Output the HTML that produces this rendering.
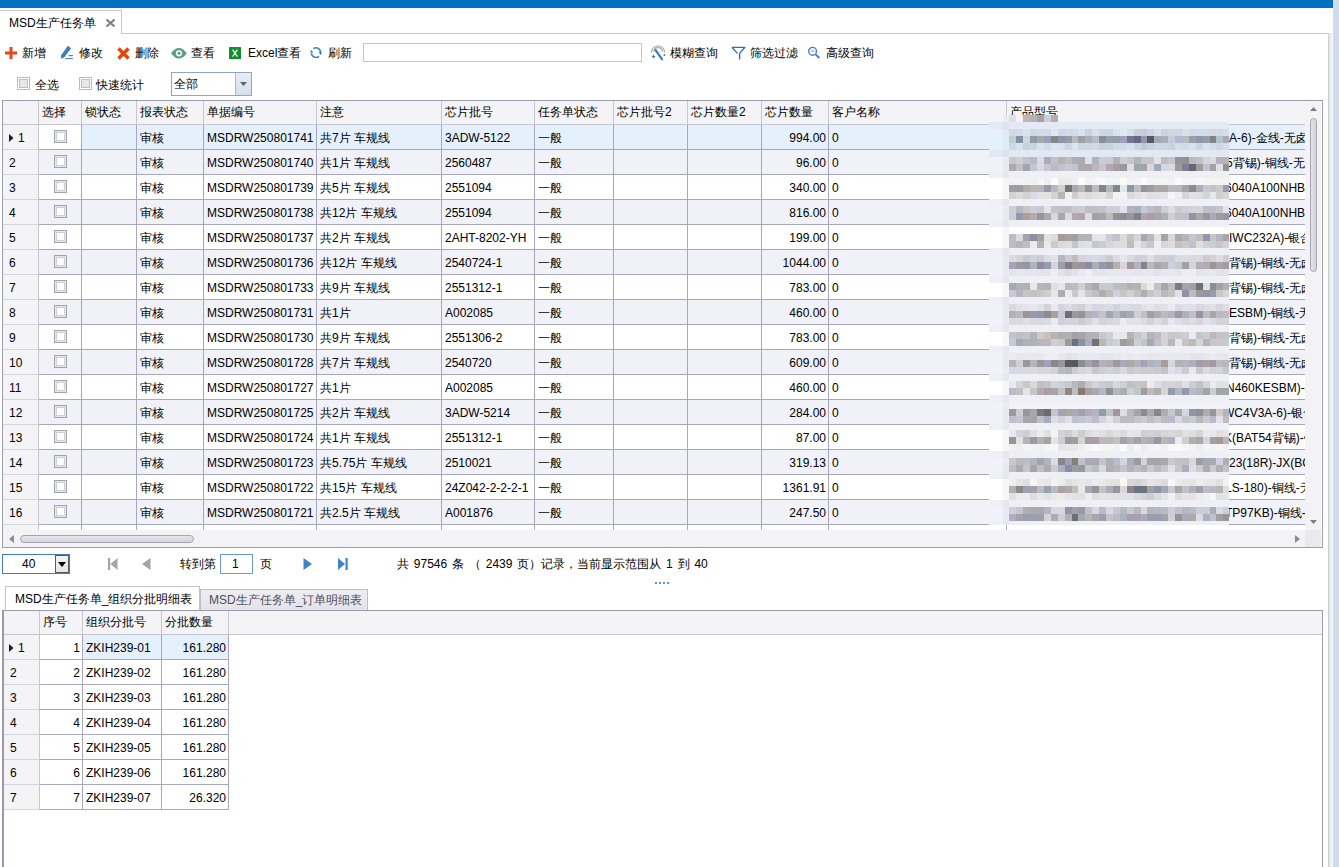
<!DOCTYPE html>
<html><head><meta charset="utf-8"><style>
html,body{margin:0;padding:0;width:1339px;height:867px;overflow:hidden;background:#fff;position:relative}
body{font-family:"Liberation Sans",sans-serif;font-size:12px;color:#000}
div,span,svg{position:absolute}
span{white-space:pre;line-height:14px}
</style></head><body>
<div style="left:0px;top:0px;width:1333px;height:8px;background:#0070c0;"></div>
<div style="left:1333px;top:0px;width:6px;height:867px;background:#cedcec;"></div>
<div style="left:1328px;top:33px;width:5px;height:834px;background:linear-gradient(to right,#c9c9d3,#e9e9ee 40%,#fbfbfc);"></div>
<div style="left:0px;top:10px;width:122px;height:1px;background:#c8c8d4;"></div>
<div style="left:121px;top:10px;width:1px;height:24px;background:#c8c8d4;"></div>
<div style="left:121px;top:33px;width:1207px;height:1px;background:#c8c8d4;"></div>
<span style="left:9px;top:16px;">MSD生产任务单</span>
<svg style="position:absolute;left:105px;top:18px" width="11" height="10" viewBox="0 0 11 10"><path d="M1.5 1.5L9.5 8.5M9.5 1.5L1.5 8.5" stroke="#7b7b88" stroke-width="2.1"/></svg>
<svg style="position:absolute;left:5px;top:47px" width="12" height="12"><path d="M6 0V12M0 6H12" stroke="#e2481b" stroke-width="3"/></svg>
<span style="left:22px;top:46px;">新增</span>
<svg style="position:absolute;left:56px;top:42px" width="24" height="22" viewBox="0 0 24 22"><path d="M4.9 16.8L5.2 12.9 11.9 3.8 15.1 6.2 8.4 15.3Z" fill="#3f7cc2"/><path d="M12.6 13.6H16.9M9.3 16.5H16.9" stroke="#4f86c6" stroke-width="1.1"/></svg>
<span style="left:79px;top:46px;">修改</span>
<svg style="position:absolute;left:117px;top:46.6px" width="13" height="13"><path d="M1.5 1.5L11.5 11.5M11.5 1.5L1.5 11.5" stroke="#e4440f" stroke-width="3.4"/></svg>
<span style="left:135px;top:46px;">删除</span>
<svg style="position:absolute;left:171px;top:48px" width="16" height="11" viewBox="0 0 16 11"><path d="M0 5.3Q7.9 -5.2 15.8 5.3Q7.9 15.8 0 5.3Z" fill="#5a9e88"/><circle cx="8" cy="5.3" r="3.1" fill="#fff"/><circle cx="8" cy="5.3" r="1.5" fill="#5a9e88"/></svg>
<span style="left:191px;top:46px;">查看</span>
<svg style="position:absolute;left:229px;top:47px" width="12" height="12" viewBox="0 0 12 12"><rect x="0" y="0" width="12" height="12" rx="0.6" fill="#12902f"/><path d="M3.6 2.6L8.4 9.6M8.4 2.6L3.6 9.6" stroke="#fff" stroke-width="1.15"/></svg>
<span style="left:248px;top:46px;">Excel查看</span>
<svg style="position:absolute;left:304px;top:42px" width="24" height="22" viewBox="0 0 24 22"><path d="M9.3 6.6A4.6 4.6 0 0 1 16.5 10.8M15 14.3A4.6 4.6 0 0 1 7.4 11.2" fill="none" stroke="#3f7cc2" stroke-width="1.6"/><path d="M14.6 10.3H18.3L16.5 12.9Z" fill="#3f7cc2"/><path d="M5.7 10.6H9.3L7.5 8.0Z" fill="#3f7cc2"/></svg>
<span style="left:328px;top:46px;">刷新</span>
<div style="left:363px;top:43px;width:279px;height:19px;background:#fff;border:1px solid #c4c4cc;box-sizing:border-box"></div>
<svg style="position:absolute;left:646px;top:42px" width="24" height="22" viewBox="0 0 24 22"><path d="M5.4 10.6A6.6 6.6 0 0 1 18.6 10.6" fill="none" stroke="#a9a9a9" stroke-width="1.2"/><path d="M7.8 9.8A4.2 4.2 0 0 1 16.3 9.8" fill="none" stroke="#a9a9a9" stroke-width="1.2"/><path d="M9.6 8.2L15.9 17.2" stroke="#3f7cc2" stroke-width="2.3" stroke-linecap="round"/><path d="M7.5 12.3L8.3 13.9 9.8 14.5 8.3 15.2 7.5 16.8 6.7 15.2 5.2 14.5 6.7 13.9Z" fill="#3f7cc2"/><circle cx="18.4" cy="13" r="1" fill="#3f7cc2"/></svg>
<span style="left:670px;top:46px;">模糊查询</span>
<svg style="position:absolute;left:731px;top:46px" width="15" height="14" viewBox="0 0 15 14"><path d="M0.9 1.3H13.9L8.6 7.4V13.6M0.9 1.3L6.4 7.4" fill="none" stroke="#2f6fbf" stroke-width="1.35" stroke-linejoin="round"/></svg>
<span style="left:750px;top:46px;">筛选过滤</span>
<svg style="position:absolute;left:807px;top:46px" width="14" height="14" viewBox="0 0 14 14"><circle cx="5.6" cy="5.3" r="3.9" fill="none" stroke="#4a7fc0" stroke-width="1.4"/><path d="M8.6 8.4L12.3 12" stroke="#4a7fc0" stroke-width="2"/><path d="M3.8 5H7.4" stroke="#7fa6d6" stroke-width="1.2"/></svg>
<span style="left:826px;top:46px;">高级查询</span>
<div style="left:17px;top:77px;width:13px;height:13px;background:#fff;border:1px solid #a9bedb;box-sizing:border-box"></div>
<div style="left:19px;top:79px;width:9px;height:9px;background:#e7e8eb;border:1px solid #bcc0c8;box-sizing:border-box"></div>
<span style="left:35px;top:78px;">全选</span>
<div style="left:79px;top:77px;width:13px;height:13px;background:#fff;border:1px solid #a9bedb;box-sizing:border-box"></div>
<div style="left:81px;top:79px;width:9px;height:9px;background:#e7e8eb;border:1px solid #bcc0c8;box-sizing:border-box"></div>
<span style="left:96px;top:78px;">快速统计</span>
<div style="left:171px;top:72px;width:81px;height:24px;background:#fff;border:1px solid #8fa6c4;box-sizing:border-box"></div>
<div style="left:235px;top:73px;width:16px;height:22px;background:linear-gradient(#e9eef5,#d5dfec);border-left:1px solid #a7b8d0;box-sizing:border-box"></div>
<svg style="position:absolute;left:240px;top:82px" width="7" height="4"><path d="M0 0H7L3.5 4Z" fill="#5c6270"/></svg>
<span style="left:174px;top:77px;">全部</span>
<div style="left:2px;top:100px;width:1321px;height:448px;background:#fff;border:1px solid #9c9cb0;box-sizing:border-box"></div>
<div style="left:3px;top:101px;width:1302px;height:23px;background:#f4f4f7;"></div>
<div style="left:3px;top:124px;width:1302px;height:1px;background:#c6c6d2;"></div>
<div style="left:3px;top:125px;width:1302px;height:405px;overflow:hidden">
<div style="left:36px;top:0px;width:1266px;height:24px;background:#e4f1fc;"></div>
<div style="left:36px;top:0px;width:42px;height:24px;background:#ffffff;"></div>
<div style="left:0px;top:0px;width:35px;height:24px;background:#f4f4f7;"></div>
<div style="left:0px;top:24px;width:35px;height:1px;background:#d4d4de;"></div>
<div style="left:36px;top:24px;width:1266px;height:1px;background:#a7a7c2;"></div>
<div style="left:35px;top:0px;width:1px;height:25px;background:#c6c6d2;"></div>
<div style="left:78px;top:0px;width:1px;height:25px;background:#a7a7c2;"></div>
<div style="left:133px;top:0px;width:1px;height:25px;background:#a7a7c2;"></div>
<div style="left:200px;top:0px;width:1px;height:25px;background:#a7a7c2;"></div>
<div style="left:313px;top:0px;width:1px;height:25px;background:#a7a7c2;"></div>
<div style="left:438px;top:0px;width:1px;height:25px;background:#a7a7c2;"></div>
<div style="left:531px;top:0px;width:1px;height:25px;background:#a7a7c2;"></div>
<div style="left:610px;top:0px;width:1px;height:25px;background:#a7a7c2;"></div>
<div style="left:684px;top:0px;width:1px;height:25px;background:#a7a7c2;"></div>
<div style="left:758px;top:0px;width:1px;height:25px;background:#a7a7c2;"></div>
<div style="left:825px;top:0px;width:1px;height:25px;background:#a7a7c2;"></div>
<div style="left:1003px;top:0px;width:1px;height:25px;background:#a7a7c2;"></div>
<div style="left:51px;top:5px;width:13px;height:13px;background:#fff;border:1px solid #a3a3ad;box-sizing:border-box;box-shadow:inset 0 0 0 1px #e6e7ed,inset 0 0 0 2px #ced0d9"></div>
<svg style="position:absolute;left:6px;top:9px" width="5" height="8"><path d="M0 0L4.5 4 0 8Z" fill="#1a1a2a"/></svg>
<span style="left:15px;top:6px;">1</span>
<span style="left:137px;top:6px;">审核</span>
<span style="left:204px;top:6px;">MSDRW250801741</span>
<span style="left:317px;top:6px;">共7片 车规线</span>
<span style="left:442px;top:6px;">3ADW-5122</span>
<span style="left:535px;top:6px;">一般</span>
<span style="left:623px;width:200px;text-align:right;top:6px;">994.00</span>
<span style="left:829px;top:6px;">0</span>
<span style="left:1226px;top:6px;">A-6)-金线-无卤</span>
<div style="left:36px;top:25px;width:1266px;height:24px;background:#f1f1f8;"></div>
<div style="left:0px;top:25px;width:35px;height:24px;background:#f4f4f7;"></div>
<div style="left:0px;top:49px;width:35px;height:1px;background:#d4d4de;"></div>
<div style="left:36px;top:49px;width:1266px;height:1px;background:#a7a7c2;"></div>
<div style="left:35px;top:25px;width:1px;height:25px;background:#c6c6d2;"></div>
<div style="left:78px;top:25px;width:1px;height:25px;background:#a7a7c2;"></div>
<div style="left:133px;top:25px;width:1px;height:25px;background:#a7a7c2;"></div>
<div style="left:200px;top:25px;width:1px;height:25px;background:#a7a7c2;"></div>
<div style="left:313px;top:25px;width:1px;height:25px;background:#a7a7c2;"></div>
<div style="left:438px;top:25px;width:1px;height:25px;background:#a7a7c2;"></div>
<div style="left:531px;top:25px;width:1px;height:25px;background:#a7a7c2;"></div>
<div style="left:610px;top:25px;width:1px;height:25px;background:#a7a7c2;"></div>
<div style="left:684px;top:25px;width:1px;height:25px;background:#a7a7c2;"></div>
<div style="left:758px;top:25px;width:1px;height:25px;background:#a7a7c2;"></div>
<div style="left:825px;top:25px;width:1px;height:25px;background:#a7a7c2;"></div>
<div style="left:1003px;top:25px;width:1px;height:25px;background:#a7a7c2;"></div>
<div style="left:51px;top:30px;width:13px;height:13px;background:#fff;border:1px solid #a3a3ad;box-sizing:border-box;box-shadow:inset 0 0 0 1px #e6e7ed,inset 0 0 0 2px #ced0d9"></div>
<span style="left:6px;top:31px;">2</span>
<span style="left:137px;top:31px;">审核</span>
<span style="left:204px;top:31px;">MSDRW250801740</span>
<span style="left:317px;top:31px;">共1片 车规线</span>
<span style="left:442px;top:31px;">2560487</span>
<span style="left:535px;top:31px;">一般</span>
<span style="left:623px;width:200px;text-align:right;top:31px;">96.00</span>
<span style="left:829px;top:31px;">0</span>
<span style="left:1223px;top:31px;">5背锡)-铜线-无卤</span>
<div style="left:36px;top:50px;width:1266px;height:24px;background:#ffffff;"></div>
<div style="left:0px;top:50px;width:35px;height:24px;background:#f4f4f7;"></div>
<div style="left:0px;top:74px;width:35px;height:1px;background:#d4d4de;"></div>
<div style="left:36px;top:74px;width:1266px;height:1px;background:#a7a7c2;"></div>
<div style="left:35px;top:50px;width:1px;height:25px;background:#c6c6d2;"></div>
<div style="left:78px;top:50px;width:1px;height:25px;background:#a7a7c2;"></div>
<div style="left:133px;top:50px;width:1px;height:25px;background:#a7a7c2;"></div>
<div style="left:200px;top:50px;width:1px;height:25px;background:#a7a7c2;"></div>
<div style="left:313px;top:50px;width:1px;height:25px;background:#a7a7c2;"></div>
<div style="left:438px;top:50px;width:1px;height:25px;background:#a7a7c2;"></div>
<div style="left:531px;top:50px;width:1px;height:25px;background:#a7a7c2;"></div>
<div style="left:610px;top:50px;width:1px;height:25px;background:#a7a7c2;"></div>
<div style="left:684px;top:50px;width:1px;height:25px;background:#a7a7c2;"></div>
<div style="left:758px;top:50px;width:1px;height:25px;background:#a7a7c2;"></div>
<div style="left:825px;top:50px;width:1px;height:25px;background:#a7a7c2;"></div>
<div style="left:1003px;top:50px;width:1px;height:25px;background:#a7a7c2;"></div>
<div style="left:51px;top:55px;width:13px;height:13px;background:#fff;border:1px solid #a3a3ad;box-sizing:border-box;box-shadow:inset 0 0 0 1px #e6e7ed,inset 0 0 0 2px #ced0d9"></div>
<span style="left:6px;top:56px;">3</span>
<span style="left:137px;top:56px;">审核</span>
<span style="left:204px;top:56px;">MSDRW250801739</span>
<span style="left:317px;top:56px;">共5片 车规线</span>
<span style="left:442px;top:56px;">2551094</span>
<span style="left:535px;top:56px;">一般</span>
<span style="left:623px;width:200px;text-align:right;top:56px;">340.00</span>
<span style="left:829px;top:56px;">0</span>
<span style="left:1222px;top:56px;">6040A100NHB</span>
<div style="left:36px;top:75px;width:1266px;height:24px;background:#f1f1f8;"></div>
<div style="left:0px;top:75px;width:35px;height:24px;background:#f4f4f7;"></div>
<div style="left:0px;top:99px;width:35px;height:1px;background:#d4d4de;"></div>
<div style="left:36px;top:99px;width:1266px;height:1px;background:#a7a7c2;"></div>
<div style="left:35px;top:75px;width:1px;height:25px;background:#c6c6d2;"></div>
<div style="left:78px;top:75px;width:1px;height:25px;background:#a7a7c2;"></div>
<div style="left:133px;top:75px;width:1px;height:25px;background:#a7a7c2;"></div>
<div style="left:200px;top:75px;width:1px;height:25px;background:#a7a7c2;"></div>
<div style="left:313px;top:75px;width:1px;height:25px;background:#a7a7c2;"></div>
<div style="left:438px;top:75px;width:1px;height:25px;background:#a7a7c2;"></div>
<div style="left:531px;top:75px;width:1px;height:25px;background:#a7a7c2;"></div>
<div style="left:610px;top:75px;width:1px;height:25px;background:#a7a7c2;"></div>
<div style="left:684px;top:75px;width:1px;height:25px;background:#a7a7c2;"></div>
<div style="left:758px;top:75px;width:1px;height:25px;background:#a7a7c2;"></div>
<div style="left:825px;top:75px;width:1px;height:25px;background:#a7a7c2;"></div>
<div style="left:1003px;top:75px;width:1px;height:25px;background:#a7a7c2;"></div>
<div style="left:51px;top:80px;width:13px;height:13px;background:#fff;border:1px solid #a3a3ad;box-sizing:border-box;box-shadow:inset 0 0 0 1px #e6e7ed,inset 0 0 0 2px #ced0d9"></div>
<span style="left:6px;top:81px;">4</span>
<span style="left:137px;top:81px;">审核</span>
<span style="left:204px;top:81px;">MSDRW250801738</span>
<span style="left:317px;top:81px;">共12片 车规线</span>
<span style="left:442px;top:81px;">2551094</span>
<span style="left:535px;top:81px;">一般</span>
<span style="left:623px;width:200px;text-align:right;top:81px;">816.00</span>
<span style="left:829px;top:81px;">0</span>
<span style="left:1222px;top:81px;">6040A100NHB</span>
<div style="left:36px;top:100px;width:1266px;height:24px;background:#ffffff;"></div>
<div style="left:0px;top:100px;width:35px;height:24px;background:#f4f4f7;"></div>
<div style="left:0px;top:124px;width:35px;height:1px;background:#d4d4de;"></div>
<div style="left:36px;top:124px;width:1266px;height:1px;background:#a7a7c2;"></div>
<div style="left:35px;top:100px;width:1px;height:25px;background:#c6c6d2;"></div>
<div style="left:78px;top:100px;width:1px;height:25px;background:#a7a7c2;"></div>
<div style="left:133px;top:100px;width:1px;height:25px;background:#a7a7c2;"></div>
<div style="left:200px;top:100px;width:1px;height:25px;background:#a7a7c2;"></div>
<div style="left:313px;top:100px;width:1px;height:25px;background:#a7a7c2;"></div>
<div style="left:438px;top:100px;width:1px;height:25px;background:#a7a7c2;"></div>
<div style="left:531px;top:100px;width:1px;height:25px;background:#a7a7c2;"></div>
<div style="left:610px;top:100px;width:1px;height:25px;background:#a7a7c2;"></div>
<div style="left:684px;top:100px;width:1px;height:25px;background:#a7a7c2;"></div>
<div style="left:758px;top:100px;width:1px;height:25px;background:#a7a7c2;"></div>
<div style="left:825px;top:100px;width:1px;height:25px;background:#a7a7c2;"></div>
<div style="left:1003px;top:100px;width:1px;height:25px;background:#a7a7c2;"></div>
<div style="left:51px;top:105px;width:13px;height:13px;background:#fff;border:1px solid #a3a3ad;box-sizing:border-box;box-shadow:inset 0 0 0 1px #e6e7ed,inset 0 0 0 2px #ced0d9"></div>
<span style="left:6px;top:106px;">5</span>
<span style="left:137px;top:106px;">审核</span>
<span style="left:204px;top:106px;">MSDRW250801737</span>
<span style="left:317px;top:106px;">共2片 车规线</span>
<span style="left:442px;top:106px;">2AHT-8202-YH</span>
<span style="left:535px;top:106px;">一般</span>
<span style="left:623px;width:200px;text-align:right;top:106px;">199.00</span>
<span style="left:829px;top:106px;">0</span>
<span style="left:1226px;top:106px;">IWC232A)-银合</span>
<div style="left:36px;top:125px;width:1266px;height:24px;background:#f1f1f8;"></div>
<div style="left:0px;top:125px;width:35px;height:24px;background:#f4f4f7;"></div>
<div style="left:0px;top:149px;width:35px;height:1px;background:#d4d4de;"></div>
<div style="left:36px;top:149px;width:1266px;height:1px;background:#a7a7c2;"></div>
<div style="left:35px;top:125px;width:1px;height:25px;background:#c6c6d2;"></div>
<div style="left:78px;top:125px;width:1px;height:25px;background:#a7a7c2;"></div>
<div style="left:133px;top:125px;width:1px;height:25px;background:#a7a7c2;"></div>
<div style="left:200px;top:125px;width:1px;height:25px;background:#a7a7c2;"></div>
<div style="left:313px;top:125px;width:1px;height:25px;background:#a7a7c2;"></div>
<div style="left:438px;top:125px;width:1px;height:25px;background:#a7a7c2;"></div>
<div style="left:531px;top:125px;width:1px;height:25px;background:#a7a7c2;"></div>
<div style="left:610px;top:125px;width:1px;height:25px;background:#a7a7c2;"></div>
<div style="left:684px;top:125px;width:1px;height:25px;background:#a7a7c2;"></div>
<div style="left:758px;top:125px;width:1px;height:25px;background:#a7a7c2;"></div>
<div style="left:825px;top:125px;width:1px;height:25px;background:#a7a7c2;"></div>
<div style="left:1003px;top:125px;width:1px;height:25px;background:#a7a7c2;"></div>
<div style="left:51px;top:130px;width:13px;height:13px;background:#fff;border:1px solid #a3a3ad;box-sizing:border-box;box-shadow:inset 0 0 0 1px #e6e7ed,inset 0 0 0 2px #ced0d9"></div>
<span style="left:6px;top:131px;">6</span>
<span style="left:137px;top:131px;">审核</span>
<span style="left:204px;top:131px;">MSDRW250801736</span>
<span style="left:317px;top:131px;">共12片 车规线</span>
<span style="left:442px;top:131px;">2540724-1</span>
<span style="left:535px;top:131px;">一般</span>
<span style="left:623px;width:200px;text-align:right;top:131px;">1044.00</span>
<span style="left:829px;top:131px;">0</span>
<span style="left:1226px;top:131px;">背锡)-铜线-无卤</span>
<div style="left:36px;top:150px;width:1266px;height:24px;background:#ffffff;"></div>
<div style="left:0px;top:150px;width:35px;height:24px;background:#f4f4f7;"></div>
<div style="left:0px;top:174px;width:35px;height:1px;background:#d4d4de;"></div>
<div style="left:36px;top:174px;width:1266px;height:1px;background:#a7a7c2;"></div>
<div style="left:35px;top:150px;width:1px;height:25px;background:#c6c6d2;"></div>
<div style="left:78px;top:150px;width:1px;height:25px;background:#a7a7c2;"></div>
<div style="left:133px;top:150px;width:1px;height:25px;background:#a7a7c2;"></div>
<div style="left:200px;top:150px;width:1px;height:25px;background:#a7a7c2;"></div>
<div style="left:313px;top:150px;width:1px;height:25px;background:#a7a7c2;"></div>
<div style="left:438px;top:150px;width:1px;height:25px;background:#a7a7c2;"></div>
<div style="left:531px;top:150px;width:1px;height:25px;background:#a7a7c2;"></div>
<div style="left:610px;top:150px;width:1px;height:25px;background:#a7a7c2;"></div>
<div style="left:684px;top:150px;width:1px;height:25px;background:#a7a7c2;"></div>
<div style="left:758px;top:150px;width:1px;height:25px;background:#a7a7c2;"></div>
<div style="left:825px;top:150px;width:1px;height:25px;background:#a7a7c2;"></div>
<div style="left:1003px;top:150px;width:1px;height:25px;background:#a7a7c2;"></div>
<div style="left:51px;top:155px;width:13px;height:13px;background:#fff;border:1px solid #a3a3ad;box-sizing:border-box;box-shadow:inset 0 0 0 1px #e6e7ed,inset 0 0 0 2px #ced0d9"></div>
<span style="left:6px;top:156px;">7</span>
<span style="left:137px;top:156px;">审核</span>
<span style="left:204px;top:156px;">MSDRW250801733</span>
<span style="left:317px;top:156px;">共9片 车规线</span>
<span style="left:442px;top:156px;">2551312-1</span>
<span style="left:535px;top:156px;">一般</span>
<span style="left:623px;width:200px;text-align:right;top:156px;">783.00</span>
<span style="left:829px;top:156px;">0</span>
<span style="left:1226px;top:156px;">背锡)-铜线-无卤</span>
<div style="left:36px;top:175px;width:1266px;height:24px;background:#f1f1f8;"></div>
<div style="left:0px;top:175px;width:35px;height:24px;background:#f4f4f7;"></div>
<div style="left:0px;top:199px;width:35px;height:1px;background:#d4d4de;"></div>
<div style="left:36px;top:199px;width:1266px;height:1px;background:#a7a7c2;"></div>
<div style="left:35px;top:175px;width:1px;height:25px;background:#c6c6d2;"></div>
<div style="left:78px;top:175px;width:1px;height:25px;background:#a7a7c2;"></div>
<div style="left:133px;top:175px;width:1px;height:25px;background:#a7a7c2;"></div>
<div style="left:200px;top:175px;width:1px;height:25px;background:#a7a7c2;"></div>
<div style="left:313px;top:175px;width:1px;height:25px;background:#a7a7c2;"></div>
<div style="left:438px;top:175px;width:1px;height:25px;background:#a7a7c2;"></div>
<div style="left:531px;top:175px;width:1px;height:25px;background:#a7a7c2;"></div>
<div style="left:610px;top:175px;width:1px;height:25px;background:#a7a7c2;"></div>
<div style="left:684px;top:175px;width:1px;height:25px;background:#a7a7c2;"></div>
<div style="left:758px;top:175px;width:1px;height:25px;background:#a7a7c2;"></div>
<div style="left:825px;top:175px;width:1px;height:25px;background:#a7a7c2;"></div>
<div style="left:1003px;top:175px;width:1px;height:25px;background:#a7a7c2;"></div>
<div style="left:51px;top:180px;width:13px;height:13px;background:#fff;border:1px solid #a3a3ad;box-sizing:border-box;box-shadow:inset 0 0 0 1px #e6e7ed,inset 0 0 0 2px #ced0d9"></div>
<span style="left:6px;top:181px;">8</span>
<span style="left:137px;top:181px;">审核</span>
<span style="left:204px;top:181px;">MSDRW250801731</span>
<span style="left:317px;top:181px;">共1片</span>
<span style="left:442px;top:181px;">A002085</span>
<span style="left:535px;top:181px;">一般</span>
<span style="left:623px;width:200px;text-align:right;top:181px;">460.00</span>
<span style="left:829px;top:181px;">0</span>
<span style="left:1226px;top:181px;">ESBM)-铜线-无卤</span>
<div style="left:36px;top:200px;width:1266px;height:24px;background:#ffffff;"></div>
<div style="left:0px;top:200px;width:35px;height:24px;background:#f4f4f7;"></div>
<div style="left:0px;top:224px;width:35px;height:1px;background:#d4d4de;"></div>
<div style="left:36px;top:224px;width:1266px;height:1px;background:#a7a7c2;"></div>
<div style="left:35px;top:200px;width:1px;height:25px;background:#c6c6d2;"></div>
<div style="left:78px;top:200px;width:1px;height:25px;background:#a7a7c2;"></div>
<div style="left:133px;top:200px;width:1px;height:25px;background:#a7a7c2;"></div>
<div style="left:200px;top:200px;width:1px;height:25px;background:#a7a7c2;"></div>
<div style="left:313px;top:200px;width:1px;height:25px;background:#a7a7c2;"></div>
<div style="left:438px;top:200px;width:1px;height:25px;background:#a7a7c2;"></div>
<div style="left:531px;top:200px;width:1px;height:25px;background:#a7a7c2;"></div>
<div style="left:610px;top:200px;width:1px;height:25px;background:#a7a7c2;"></div>
<div style="left:684px;top:200px;width:1px;height:25px;background:#a7a7c2;"></div>
<div style="left:758px;top:200px;width:1px;height:25px;background:#a7a7c2;"></div>
<div style="left:825px;top:200px;width:1px;height:25px;background:#a7a7c2;"></div>
<div style="left:1003px;top:200px;width:1px;height:25px;background:#a7a7c2;"></div>
<div style="left:51px;top:205px;width:13px;height:13px;background:#fff;border:1px solid #a3a3ad;box-sizing:border-box;box-shadow:inset 0 0 0 1px #e6e7ed,inset 0 0 0 2px #ced0d9"></div>
<span style="left:6px;top:206px;">9</span>
<span style="left:137px;top:206px;">审核</span>
<span style="left:204px;top:206px;">MSDRW250801730</span>
<span style="left:317px;top:206px;">共9片 车规线</span>
<span style="left:442px;top:206px;">2551306-2</span>
<span style="left:535px;top:206px;">一般</span>
<span style="left:623px;width:200px;text-align:right;top:206px;">783.00</span>
<span style="left:829px;top:206px;">0</span>
<span style="left:1226px;top:206px;">背锡)-铜线-无卤</span>
<div style="left:36px;top:225px;width:1266px;height:24px;background:#f1f1f8;"></div>
<div style="left:0px;top:225px;width:35px;height:24px;background:#f4f4f7;"></div>
<div style="left:0px;top:249px;width:35px;height:1px;background:#d4d4de;"></div>
<div style="left:36px;top:249px;width:1266px;height:1px;background:#a7a7c2;"></div>
<div style="left:35px;top:225px;width:1px;height:25px;background:#c6c6d2;"></div>
<div style="left:78px;top:225px;width:1px;height:25px;background:#a7a7c2;"></div>
<div style="left:133px;top:225px;width:1px;height:25px;background:#a7a7c2;"></div>
<div style="left:200px;top:225px;width:1px;height:25px;background:#a7a7c2;"></div>
<div style="left:313px;top:225px;width:1px;height:25px;background:#a7a7c2;"></div>
<div style="left:438px;top:225px;width:1px;height:25px;background:#a7a7c2;"></div>
<div style="left:531px;top:225px;width:1px;height:25px;background:#a7a7c2;"></div>
<div style="left:610px;top:225px;width:1px;height:25px;background:#a7a7c2;"></div>
<div style="left:684px;top:225px;width:1px;height:25px;background:#a7a7c2;"></div>
<div style="left:758px;top:225px;width:1px;height:25px;background:#a7a7c2;"></div>
<div style="left:825px;top:225px;width:1px;height:25px;background:#a7a7c2;"></div>
<div style="left:1003px;top:225px;width:1px;height:25px;background:#a7a7c2;"></div>
<div style="left:51px;top:230px;width:13px;height:13px;background:#fff;border:1px solid #a3a3ad;box-sizing:border-box;box-shadow:inset 0 0 0 1px #e6e7ed,inset 0 0 0 2px #ced0d9"></div>
<span style="left:6px;top:231px;">10</span>
<span style="left:137px;top:231px;">审核</span>
<span style="left:204px;top:231px;">MSDRW250801728</span>
<span style="left:317px;top:231px;">共7片 车规线</span>
<span style="left:442px;top:231px;">2540720</span>
<span style="left:535px;top:231px;">一般</span>
<span style="left:623px;width:200px;text-align:right;top:231px;">609.00</span>
<span style="left:829px;top:231px;">0</span>
<span style="left:1226px;top:231px;">背锡)-铜线-无卤</span>
<div style="left:36px;top:250px;width:1266px;height:24px;background:#ffffff;"></div>
<div style="left:0px;top:250px;width:35px;height:24px;background:#f4f4f7;"></div>
<div style="left:0px;top:274px;width:35px;height:1px;background:#d4d4de;"></div>
<div style="left:36px;top:274px;width:1266px;height:1px;background:#a7a7c2;"></div>
<div style="left:35px;top:250px;width:1px;height:25px;background:#c6c6d2;"></div>
<div style="left:78px;top:250px;width:1px;height:25px;background:#a7a7c2;"></div>
<div style="left:133px;top:250px;width:1px;height:25px;background:#a7a7c2;"></div>
<div style="left:200px;top:250px;width:1px;height:25px;background:#a7a7c2;"></div>
<div style="left:313px;top:250px;width:1px;height:25px;background:#a7a7c2;"></div>
<div style="left:438px;top:250px;width:1px;height:25px;background:#a7a7c2;"></div>
<div style="left:531px;top:250px;width:1px;height:25px;background:#a7a7c2;"></div>
<div style="left:610px;top:250px;width:1px;height:25px;background:#a7a7c2;"></div>
<div style="left:684px;top:250px;width:1px;height:25px;background:#a7a7c2;"></div>
<div style="left:758px;top:250px;width:1px;height:25px;background:#a7a7c2;"></div>
<div style="left:825px;top:250px;width:1px;height:25px;background:#a7a7c2;"></div>
<div style="left:1003px;top:250px;width:1px;height:25px;background:#a7a7c2;"></div>
<div style="left:51px;top:255px;width:13px;height:13px;background:#fff;border:1px solid #a3a3ad;box-sizing:border-box;box-shadow:inset 0 0 0 1px #e6e7ed,inset 0 0 0 2px #ced0d9"></div>
<span style="left:6px;top:256px;">11</span>
<span style="left:137px;top:256px;">审核</span>
<span style="left:204px;top:256px;">MSDRW250801727</span>
<span style="left:317px;top:256px;">共1片</span>
<span style="left:442px;top:256px;">A002085</span>
<span style="left:535px;top:256px;">一般</span>
<span style="left:623px;width:200px;text-align:right;top:256px;">460.00</span>
<span style="left:829px;top:256px;">0</span>
<span style="left:1223px;top:256px;">N460KESBM)-铜线</span>
<div style="left:36px;top:275px;width:1266px;height:24px;background:#f1f1f8;"></div>
<div style="left:0px;top:275px;width:35px;height:24px;background:#f4f4f7;"></div>
<div style="left:0px;top:299px;width:35px;height:1px;background:#d4d4de;"></div>
<div style="left:36px;top:299px;width:1266px;height:1px;background:#a7a7c2;"></div>
<div style="left:35px;top:275px;width:1px;height:25px;background:#c6c6d2;"></div>
<div style="left:78px;top:275px;width:1px;height:25px;background:#a7a7c2;"></div>
<div style="left:133px;top:275px;width:1px;height:25px;background:#a7a7c2;"></div>
<div style="left:200px;top:275px;width:1px;height:25px;background:#a7a7c2;"></div>
<div style="left:313px;top:275px;width:1px;height:25px;background:#a7a7c2;"></div>
<div style="left:438px;top:275px;width:1px;height:25px;background:#a7a7c2;"></div>
<div style="left:531px;top:275px;width:1px;height:25px;background:#a7a7c2;"></div>
<div style="left:610px;top:275px;width:1px;height:25px;background:#a7a7c2;"></div>
<div style="left:684px;top:275px;width:1px;height:25px;background:#a7a7c2;"></div>
<div style="left:758px;top:275px;width:1px;height:25px;background:#a7a7c2;"></div>
<div style="left:825px;top:275px;width:1px;height:25px;background:#a7a7c2;"></div>
<div style="left:1003px;top:275px;width:1px;height:25px;background:#a7a7c2;"></div>
<div style="left:51px;top:280px;width:13px;height:13px;background:#fff;border:1px solid #a3a3ad;box-sizing:border-box;box-shadow:inset 0 0 0 1px #e6e7ed,inset 0 0 0 2px #ced0d9"></div>
<span style="left:6px;top:281px;">12</span>
<span style="left:137px;top:281px;">审核</span>
<span style="left:204px;top:281px;">MSDRW250801725</span>
<span style="left:317px;top:281px;">共2片 车规线</span>
<span style="left:442px;top:281px;">3ADW-5214</span>
<span style="left:535px;top:281px;">一般</span>
<span style="left:623px;width:200px;text-align:right;top:281px;">284.00</span>
<span style="left:829px;top:281px;">0</span>
<span style="left:1220px;top:281px;">WC4V3A-6)-银合</span>
<div style="left:36px;top:300px;width:1266px;height:24px;background:#ffffff;"></div>
<div style="left:0px;top:300px;width:35px;height:24px;background:#f4f4f7;"></div>
<div style="left:0px;top:324px;width:35px;height:1px;background:#d4d4de;"></div>
<div style="left:36px;top:324px;width:1266px;height:1px;background:#a7a7c2;"></div>
<div style="left:35px;top:300px;width:1px;height:25px;background:#c6c6d2;"></div>
<div style="left:78px;top:300px;width:1px;height:25px;background:#a7a7c2;"></div>
<div style="left:133px;top:300px;width:1px;height:25px;background:#a7a7c2;"></div>
<div style="left:200px;top:300px;width:1px;height:25px;background:#a7a7c2;"></div>
<div style="left:313px;top:300px;width:1px;height:25px;background:#a7a7c2;"></div>
<div style="left:438px;top:300px;width:1px;height:25px;background:#a7a7c2;"></div>
<div style="left:531px;top:300px;width:1px;height:25px;background:#a7a7c2;"></div>
<div style="left:610px;top:300px;width:1px;height:25px;background:#a7a7c2;"></div>
<div style="left:684px;top:300px;width:1px;height:25px;background:#a7a7c2;"></div>
<div style="left:758px;top:300px;width:1px;height:25px;background:#a7a7c2;"></div>
<div style="left:825px;top:300px;width:1px;height:25px;background:#a7a7c2;"></div>
<div style="left:1003px;top:300px;width:1px;height:25px;background:#a7a7c2;"></div>
<div style="left:51px;top:305px;width:13px;height:13px;background:#fff;border:1px solid #a3a3ad;box-sizing:border-box;box-shadow:inset 0 0 0 1px #e6e7ed,inset 0 0 0 2px #ced0d9"></div>
<span style="left:6px;top:306px;">13</span>
<span style="left:137px;top:306px;">审核</span>
<span style="left:204px;top:306px;">MSDRW250801724</span>
<span style="left:317px;top:306px;">共1片 车规线</span>
<span style="left:442px;top:306px;">2551312-1</span>
<span style="left:535px;top:306px;">一般</span>
<span style="left:623px;width:200px;text-align:right;top:306px;">87.00</span>
<span style="left:829px;top:306px;">0</span>
<span style="left:1221px;top:306px;">K(BAT54背锡)-铜</span>
<div style="left:36px;top:325px;width:1266px;height:24px;background:#f1f1f8;"></div>
<div style="left:0px;top:325px;width:35px;height:24px;background:#f4f4f7;"></div>
<div style="left:0px;top:349px;width:35px;height:1px;background:#d4d4de;"></div>
<div style="left:36px;top:349px;width:1266px;height:1px;background:#a7a7c2;"></div>
<div style="left:35px;top:325px;width:1px;height:25px;background:#c6c6d2;"></div>
<div style="left:78px;top:325px;width:1px;height:25px;background:#a7a7c2;"></div>
<div style="left:133px;top:325px;width:1px;height:25px;background:#a7a7c2;"></div>
<div style="left:200px;top:325px;width:1px;height:25px;background:#a7a7c2;"></div>
<div style="left:313px;top:325px;width:1px;height:25px;background:#a7a7c2;"></div>
<div style="left:438px;top:325px;width:1px;height:25px;background:#a7a7c2;"></div>
<div style="left:531px;top:325px;width:1px;height:25px;background:#a7a7c2;"></div>
<div style="left:610px;top:325px;width:1px;height:25px;background:#a7a7c2;"></div>
<div style="left:684px;top:325px;width:1px;height:25px;background:#a7a7c2;"></div>
<div style="left:758px;top:325px;width:1px;height:25px;background:#a7a7c2;"></div>
<div style="left:825px;top:325px;width:1px;height:25px;background:#a7a7c2;"></div>
<div style="left:1003px;top:325px;width:1px;height:25px;background:#a7a7c2;"></div>
<div style="left:51px;top:330px;width:13px;height:13px;background:#fff;border:1px solid #a3a3ad;box-sizing:border-box;box-shadow:inset 0 0 0 1px #e6e7ed,inset 0 0 0 2px #ced0d9"></div>
<span style="left:6px;top:331px;">14</span>
<span style="left:137px;top:331px;">审核</span>
<span style="left:204px;top:331px;">MSDRW250801723</span>
<span style="left:317px;top:331px;">共5.75片 车规线</span>
<span style="left:442px;top:331px;">2510021</span>
<span style="left:535px;top:331px;">一般</span>
<span style="left:623px;width:200px;text-align:right;top:331px;">319.13</span>
<span style="left:829px;top:331px;">0</span>
<span style="left:1226px;top:331px;">23(18R)-JX(BC</span>
<div style="left:36px;top:350px;width:1266px;height:24px;background:#ffffff;"></div>
<div style="left:0px;top:350px;width:35px;height:24px;background:#f4f4f7;"></div>
<div style="left:0px;top:374px;width:35px;height:1px;background:#d4d4de;"></div>
<div style="left:36px;top:374px;width:1266px;height:1px;background:#a7a7c2;"></div>
<div style="left:35px;top:350px;width:1px;height:25px;background:#c6c6d2;"></div>
<div style="left:78px;top:350px;width:1px;height:25px;background:#a7a7c2;"></div>
<div style="left:133px;top:350px;width:1px;height:25px;background:#a7a7c2;"></div>
<div style="left:200px;top:350px;width:1px;height:25px;background:#a7a7c2;"></div>
<div style="left:313px;top:350px;width:1px;height:25px;background:#a7a7c2;"></div>
<div style="left:438px;top:350px;width:1px;height:25px;background:#a7a7c2;"></div>
<div style="left:531px;top:350px;width:1px;height:25px;background:#a7a7c2;"></div>
<div style="left:610px;top:350px;width:1px;height:25px;background:#a7a7c2;"></div>
<div style="left:684px;top:350px;width:1px;height:25px;background:#a7a7c2;"></div>
<div style="left:758px;top:350px;width:1px;height:25px;background:#a7a7c2;"></div>
<div style="left:825px;top:350px;width:1px;height:25px;background:#a7a7c2;"></div>
<div style="left:1003px;top:350px;width:1px;height:25px;background:#a7a7c2;"></div>
<div style="left:51px;top:355px;width:13px;height:13px;background:#fff;border:1px solid #a3a3ad;box-sizing:border-box;box-shadow:inset 0 0 0 1px #e6e7ed,inset 0 0 0 2px #ced0d9"></div>
<span style="left:6px;top:356px;">15</span>
<span style="left:137px;top:356px;">审核</span>
<span style="left:204px;top:356px;">MSDRW250801722</span>
<span style="left:317px;top:356px;">共15片 车规线</span>
<span style="left:442px;top:356px;">24Z042-2-2-2-1</span>
<span style="left:535px;top:356px;">一般</span>
<span style="left:623px;width:200px;text-align:right;top:356px;">1361.91</span>
<span style="left:829px;top:356px;">0</span>
<span style="left:1222px;top:356px;">LS-180)-铜线-无</span>
<div style="left:36px;top:375px;width:1266px;height:24px;background:#f1f1f8;"></div>
<div style="left:0px;top:375px;width:35px;height:24px;background:#f4f4f7;"></div>
<div style="left:0px;top:399px;width:35px;height:1px;background:#d4d4de;"></div>
<div style="left:36px;top:399px;width:1266px;height:1px;background:#a7a7c2;"></div>
<div style="left:35px;top:375px;width:1px;height:25px;background:#c6c6d2;"></div>
<div style="left:78px;top:375px;width:1px;height:25px;background:#a7a7c2;"></div>
<div style="left:133px;top:375px;width:1px;height:25px;background:#a7a7c2;"></div>
<div style="left:200px;top:375px;width:1px;height:25px;background:#a7a7c2;"></div>
<div style="left:313px;top:375px;width:1px;height:25px;background:#a7a7c2;"></div>
<div style="left:438px;top:375px;width:1px;height:25px;background:#a7a7c2;"></div>
<div style="left:531px;top:375px;width:1px;height:25px;background:#a7a7c2;"></div>
<div style="left:610px;top:375px;width:1px;height:25px;background:#a7a7c2;"></div>
<div style="left:684px;top:375px;width:1px;height:25px;background:#a7a7c2;"></div>
<div style="left:758px;top:375px;width:1px;height:25px;background:#a7a7c2;"></div>
<div style="left:825px;top:375px;width:1px;height:25px;background:#a7a7c2;"></div>
<div style="left:1003px;top:375px;width:1px;height:25px;background:#a7a7c2;"></div>
<div style="left:51px;top:380px;width:13px;height:13px;background:#fff;border:1px solid #a3a3ad;box-sizing:border-box;box-shadow:inset 0 0 0 1px #e6e7ed,inset 0 0 0 2px #ced0d9"></div>
<span style="left:6px;top:381px;">16</span>
<span style="left:137px;top:381px;">审核</span>
<span style="left:204px;top:381px;">MSDRW250801721</span>
<span style="left:317px;top:381px;">共2.5片 车规线</span>
<span style="left:442px;top:381px;">A001876</span>
<span style="left:535px;top:381px;">一般</span>
<span style="left:623px;width:200px;text-align:right;top:381px;">247.50</span>
<span style="left:829px;top:381px;">0</span>
<span style="left:1222px;top:381px;">TP97KB)-铜线-无</span>
<div style="left:36px;top:400px;width:1266px;height:24px;background:#ffffff;"></div>
<div style="left:0px;top:400px;width:35px;height:24px;background:#f4f4f7;"></div>
<div style="left:0px;top:424px;width:35px;height:1px;background:#d4d4de;"></div>
<div style="left:36px;top:424px;width:1266px;height:1px;background:#a7a7c2;"></div>
<div style="left:35px;top:400px;width:1px;height:25px;background:#c6c6d2;"></div>
<div style="left:78px;top:400px;width:1px;height:25px;background:#a7a7c2;"></div>
<div style="left:133px;top:400px;width:1px;height:25px;background:#a7a7c2;"></div>
<div style="left:200px;top:400px;width:1px;height:25px;background:#a7a7c2;"></div>
<div style="left:313px;top:400px;width:1px;height:25px;background:#a7a7c2;"></div>
<div style="left:438px;top:400px;width:1px;height:25px;background:#a7a7c2;"></div>
<div style="left:531px;top:400px;width:1px;height:25px;background:#a7a7c2;"></div>
<div style="left:610px;top:400px;width:1px;height:25px;background:#a7a7c2;"></div>
<div style="left:684px;top:400px;width:1px;height:25px;background:#a7a7c2;"></div>
<div style="left:758px;top:400px;width:1px;height:25px;background:#a7a7c2;"></div>
<div style="left:825px;top:400px;width:1px;height:25px;background:#a7a7c2;"></div>
<div style="left:1003px;top:400px;width:1px;height:25px;background:#a7a7c2;"></div>
<div style="left:51px;top:405px;width:13px;height:13px;background:#fff;border:1px solid #a3a3ad;box-sizing:border-box;box-shadow:inset 0 0 0 1px #e6e7ed,inset 0 0 0 2px #ced0d9"></div>
</div>
<div style="left:38px;top:101px;width:1px;height:23px;background:#c6c6d2;"></div>
<div style="left:38px;top:101px;width:1px;height:23px;background:#c6c6d2;"></div>
<span style="left:42px;top:105px;">选择</span>
<div style="left:81px;top:101px;width:1px;height:23px;background:#c6c6d2;"></div>
<span style="left:85px;top:105px;">锁状态</span>
<div style="left:136px;top:101px;width:1px;height:23px;background:#c6c6d2;"></div>
<span style="left:140px;top:105px;">报表状态</span>
<div style="left:203px;top:101px;width:1px;height:23px;background:#c6c6d2;"></div>
<span style="left:207px;top:105px;">单据编号</span>
<div style="left:316px;top:101px;width:1px;height:23px;background:#c6c6d2;"></div>
<span style="left:320px;top:105px;">注意</span>
<div style="left:441px;top:101px;width:1px;height:23px;background:#c6c6d2;"></div>
<span style="left:445px;top:105px;">芯片批号</span>
<div style="left:534px;top:101px;width:1px;height:23px;background:#c6c6d2;"></div>
<span style="left:538px;top:105px;">任务单状态</span>
<div style="left:613px;top:101px;width:1px;height:23px;background:#c6c6d2;"></div>
<span style="left:617px;top:105px;">芯片批号2</span>
<div style="left:687px;top:101px;width:1px;height:23px;background:#c6c6d2;"></div>
<span style="left:691px;top:105px;">芯片数量2</span>
<div style="left:761px;top:101px;width:1px;height:23px;background:#c6c6d2;"></div>
<span style="left:765px;top:105px;">芯片数量</span>
<div style="left:828px;top:101px;width:1px;height:23px;background:#c6c6d2;"></div>
<span style="left:832px;top:105px;">客户名称</span>
<div style="left:1006px;top:101px;width:1px;height:23px;background:#c6c6d2;"></div>
<span style="left:1010px;top:105px;">产品型号</span>
<svg style="position:absolute;left:989px;top:114.5px" width="240" height="410" shape-rendering="crispEdges"><rect x="0.0" y="0.0" width="7.0" height="7.2" fill="rgb(244, 244, 247)"/><rect x="6.8" y="0.0" width="7.0" height="7.2" fill="rgb(244, 244, 247)"/><rect x="13.6" y="0.0" width="7.0" height="7.2" fill="rgb(236, 236, 242)"/><rect x="20.4" y="0.0" width="7.1" height="7.2" fill="rgb(224, 224, 226)"/><rect x="27.3" y="0.0" width="7.1" height="7.2" fill="rgb(244, 244, 247)"/><rect x="34.2" y="0.0" width="7.1" height="7.2" fill="rgb(190, 184, 176)"/><rect x="41.1" y="0.0" width="7.1" height="7.2" fill="rgb(176, 180, 186)"/><rect x="48.0" y="0.0" width="7.1" height="7.2" fill="rgb(166, 162, 158)"/><rect x="54.9" y="0.0" width="7.1" height="7.2" fill="rgb(206, 206, 210)"/><rect x="61.8" y="0.0" width="7.1" height="7.2" fill="rgb(176, 176, 178)"/><rect x="68.7" y="0.0" width="7.1" height="7.2" fill="rgb(244, 244, 247)"/><rect x="75.6" y="0.0" width="7.1" height="7.2" fill="rgb(244, 244, 247)"/><rect x="82.5" y="0.0" width="7.1" height="7.2" fill="rgb(244, 244, 247)"/><rect x="89.4" y="0.0" width="7.1" height="7.2" fill="rgb(244, 244, 247)"/><rect x="96.3" y="0.0" width="7.1" height="7.2" fill="rgb(244, 244, 247)"/><rect x="103.2" y="0.0" width="7.1" height="7.2" fill="rgb(244, 244, 247)"/><rect x="110.1" y="0.0" width="7.1" height="7.2" fill="rgb(244, 244, 247)"/><rect x="117.0" y="0.0" width="7.1" height="7.2" fill="rgb(244, 244, 247)"/><rect x="123.9" y="0.0" width="7.1" height="7.2" fill="rgb(244, 244, 247)"/><rect x="130.8" y="0.0" width="7.1" height="7.2" fill="rgb(244, 244, 247)"/><rect x="137.7" y="0.0" width="7.1" height="7.2" fill="rgb(244, 244, 247)"/><rect x="144.6" y="0.0" width="7.1" height="7.2" fill="rgb(244, 244, 247)"/><rect x="151.5" y="0.0" width="7.1" height="7.2" fill="rgb(244, 244, 247)"/><rect x="158.4" y="0.0" width="7.1" height="7.2" fill="rgb(244, 244, 247)"/><rect x="165.3" y="0.0" width="7.1" height="7.2" fill="rgb(244, 244, 247)"/><rect x="172.2" y="0.0" width="7.1" height="7.2" fill="rgb(244, 244, 247)"/><rect x="179.1" y="0.0" width="7.1" height="7.2" fill="rgb(244, 244, 247)"/><rect x="186.0" y="0.0" width="7.1" height="7.2" fill="rgb(244, 244, 247)"/><rect x="192.9" y="0.0" width="7.1" height="7.2" fill="rgb(244, 244, 247)"/><rect x="199.8" y="0.0" width="7.1" height="7.2" fill="rgb(244, 244, 247)"/><rect x="206.7" y="0.0" width="7.1" height="7.2" fill="rgb(244, 244, 247)"/><rect x="213.6" y="0.0" width="7.1" height="7.2" fill="rgb(244, 244, 247)"/><rect x="220.5" y="0.0" width="7.1" height="7.2" fill="rgb(244, 244, 247)"/><rect x="227.4" y="0.0" width="7.1" height="7.2" fill="rgb(244, 244, 247)"/><rect x="234.3" y="0.0" width="5.9" height="7.2" fill="rgb(244, 244, 247)"/><rect x="0.0" y="7.0" width="7.0" height="7.2" fill="rgb(228, 233, 244)"/><rect x="6.8" y="7.0" width="7.0" height="7.2" fill="rgb(228, 233, 244)"/><rect x="13.6" y="7.0" width="7.0" height="7.2" fill="rgb(222, 227, 239)"/><rect x="20.4" y="7.0" width="7.1" height="7.2" fill="rgb(228, 233, 244)"/><rect x="27.3" y="7.0" width="7.1" height="7.2" fill="rgb(228, 233, 244)"/><rect x="34.2" y="7.0" width="7.1" height="7.2" fill="rgb(228, 233, 244)"/><rect x="41.1" y="7.0" width="7.1" height="7.2" fill="rgb(228, 233, 244)"/><rect x="48.0" y="7.0" width="7.1" height="7.2" fill="rgb(228, 233, 244)"/><rect x="54.9" y="7.0" width="7.1" height="7.2" fill="rgb(228, 233, 244)"/><rect x="61.8" y="7.0" width="7.1" height="7.2" fill="rgb(228, 233, 244)"/><rect x="68.7" y="7.0" width="7.1" height="7.2" fill="rgb(228, 233, 244)"/><rect x="75.6" y="7.0" width="7.1" height="7.2" fill="rgb(228, 233, 244)"/><rect x="82.5" y="7.0" width="7.1" height="7.2" fill="rgb(228, 233, 244)"/><rect x="89.4" y="7.0" width="7.1" height="7.2" fill="rgb(228, 233, 244)"/><rect x="96.3" y="7.0" width="7.1" height="7.2" fill="rgb(228, 233, 244)"/><rect x="103.2" y="7.0" width="7.1" height="7.2" fill="rgb(228, 233, 244)"/><rect x="110.1" y="7.0" width="7.1" height="7.2" fill="rgb(228, 233, 244)"/><rect x="117.0" y="7.0" width="7.1" height="7.2" fill="rgb(228, 233, 244)"/><rect x="123.9" y="7.0" width="7.1" height="7.2" fill="rgb(228, 233, 244)"/><rect x="130.8" y="7.0" width="7.1" height="7.2" fill="rgb(228, 233, 244)"/><rect x="137.7" y="7.0" width="7.1" height="7.2" fill="rgb(228, 233, 244)"/><rect x="144.6" y="7.0" width="7.1" height="7.2" fill="rgb(228, 233, 244)"/><rect x="151.5" y="7.0" width="7.1" height="7.2" fill="rgb(228, 233, 244)"/><rect x="158.4" y="7.0" width="7.1" height="7.2" fill="rgb(228, 233, 244)"/><rect x="165.3" y="7.0" width="7.1" height="7.2" fill="rgb(228, 233, 244)"/><rect x="172.2" y="7.0" width="7.1" height="7.2" fill="rgb(228, 233, 244)"/><rect x="179.1" y="7.0" width="7.1" height="7.2" fill="rgb(228, 233, 244)"/><rect x="186.0" y="7.0" width="7.1" height="7.2" fill="rgb(228, 233, 244)"/><rect x="192.9" y="7.0" width="7.1" height="7.2" fill="rgb(228, 233, 244)"/><rect x="199.8" y="7.0" width="7.1" height="7.2" fill="rgb(228, 233, 244)"/><rect x="206.7" y="7.0" width="7.1" height="7.2" fill="rgb(228, 233, 244)"/><rect x="213.6" y="7.0" width="7.1" height="7.2" fill="rgb(228, 233, 244)"/><rect x="220.5" y="7.0" width="7.1" height="7.2" fill="rgb(228, 233, 244)"/><rect x="227.4" y="7.0" width="7.1" height="7.2" fill="rgb(228, 233, 244)"/><rect x="234.3" y="7.0" width="5.9" height="7.2" fill="rgb(228, 233, 244)"/><rect x="0.0" y="14.0" width="7.0" height="7.2" fill="rgb(228, 241, 252)"/><rect x="6.8" y="14.0" width="7.0" height="7.2" fill="rgb(228, 241, 252)"/><rect x="13.6" y="14.0" width="7.0" height="7.2" fill="rgb(222, 234, 247)"/><rect x="20.4" y="14.0" width="7.1" height="7.2" fill="rgb(207, 218, 228)"/><rect x="27.3" y="14.0" width="7.1" height="7.2" fill="rgb(207, 220, 233)"/><rect x="34.2" y="14.0" width="7.1" height="7.2" fill="rgb(216, 228, 239)"/><rect x="41.1" y="14.0" width="7.1" height="7.2" fill="rgb(205, 217, 227)"/><rect x="48.0" y="14.0" width="7.1" height="7.2" fill="rgb(209, 218, 229)"/><rect x="54.9" y="14.0" width="7.1" height="7.2" fill="rgb(208, 220, 230)"/><rect x="61.8" y="14.0" width="7.1" height="7.2" fill="rgb(220, 232, 242)"/><rect x="68.7" y="14.0" width="7.1" height="7.2" fill="rgb(207, 219, 228)"/><rect x="75.6" y="14.0" width="7.1" height="7.2" fill="rgb(210, 221, 232)"/><rect x="82.5" y="14.0" width="7.1" height="7.2" fill="rgb(208, 221, 234)"/><rect x="89.4" y="14.0" width="7.1" height="7.2" fill="rgb(215, 228, 238)"/><rect x="96.3" y="14.0" width="7.1" height="7.2" fill="rgb(200, 211, 222)"/><rect x="103.2" y="14.0" width="7.1" height="7.2" fill="rgb(213, 225, 236)"/><rect x="110.1" y="14.0" width="7.1" height="7.2" fill="rgb(205, 216, 227)"/><rect x="117.0" y="14.0" width="7.1" height="7.2" fill="rgb(202, 215, 229)"/><rect x="123.9" y="14.0" width="7.1" height="7.2" fill="rgb(214, 227, 240)"/><rect x="130.8" y="14.0" width="7.1" height="7.2" fill="rgb(221, 233, 244)"/><rect x="137.7" y="14.0" width="7.1" height="7.2" fill="rgb(211, 223, 234)"/><rect x="144.6" y="14.0" width="7.1" height="7.2" fill="rgb(201, 209, 215)"/><rect x="151.5" y="14.0" width="7.1" height="7.2" fill="rgb(195, 204, 220)"/><rect x="158.4" y="14.0" width="7.1" height="7.2" fill="rgb(202, 212, 227)"/><rect x="165.3" y="14.0" width="7.1" height="7.2" fill="rgb(213, 225, 235)"/><rect x="172.2" y="14.0" width="7.1" height="7.2" fill="rgb(202, 213, 222)"/><rect x="179.1" y="14.0" width="7.1" height="7.2" fill="rgb(205, 216, 225)"/><rect x="186.0" y="14.0" width="7.1" height="7.2" fill="rgb(207, 215, 227)"/><rect x="192.9" y="14.0" width="7.1" height="7.2" fill="rgb(215, 226, 235)"/><rect x="199.8" y="14.0" width="7.1" height="7.2" fill="rgb(207, 219, 230)"/><rect x="206.7" y="14.0" width="7.1" height="7.2" fill="rgb(211, 222, 232)"/><rect x="213.6" y="14.0" width="7.1" height="7.2" fill="rgb(209, 222, 232)"/><rect x="220.5" y="14.0" width="7.1" height="7.2" fill="rgb(209, 218, 226)"/><rect x="227.4" y="14.0" width="7.1" height="7.2" fill="rgb(208, 219, 230)"/><rect x="234.3" y="14.0" width="5.9" height="7.2" fill="rgb(213, 223, 234)"/><rect x="0.0" y="21.0" width="7.0" height="7.2" fill="rgb(228, 241, 252)"/><rect x="6.8" y="21.0" width="7.0" height="7.2" fill="rgb(228, 241, 252)"/><rect x="13.6" y="21.0" width="7.0" height="7.2" fill="rgb(222, 234, 247)"/><rect x="20.4" y="21.0" width="7.1" height="7.2" fill="rgb(193, 204, 213)"/><rect x="27.3" y="21.0" width="7.1" height="7.2" fill="rgb(131, 145, 165)"/><rect x="34.2" y="21.0" width="7.1" height="7.2" fill="rgb(202, 215, 229)"/><rect x="41.1" y="21.0" width="7.1" height="7.2" fill="rgb(147, 154, 164)"/><rect x="48.0" y="21.0" width="7.1" height="7.2" fill="rgb(159, 171, 179)"/><rect x="54.9" y="21.0" width="7.1" height="7.2" fill="rgb(155, 159, 181)"/><rect x="61.8" y="21.0" width="7.1" height="7.2" fill="rgb(129, 134, 139)"/><rect x="68.7" y="21.0" width="7.1" height="7.2" fill="rgb(138, 152, 171)"/><rect x="75.6" y="21.0" width="7.1" height="7.2" fill="rgb(150, 157, 165)"/><rect x="82.5" y="21.0" width="7.1" height="7.2" fill="rgb(184, 187, 191)"/><rect x="89.4" y="21.0" width="7.1" height="7.2" fill="rgb(154, 161, 167)"/><rect x="96.3" y="21.0" width="7.1" height="7.2" fill="rgb(167, 175, 185)"/><rect x="103.2" y="21.0" width="7.1" height="7.2" fill="rgb(180, 192, 201)"/><rect x="110.1" y="21.0" width="7.1" height="7.2" fill="rgb(137, 143, 153)"/><rect x="117.0" y="21.0" width="7.1" height="7.2" fill="rgb(145, 159, 178)"/><rect x="123.9" y="21.0" width="7.1" height="7.2" fill="rgb(146, 158, 165)"/><rect x="130.8" y="21.0" width="7.1" height="7.2" fill="rgb(158, 163, 185)"/><rect x="137.7" y="21.0" width="7.1" height="7.2" fill="rgb(118, 117, 146)"/><rect x="144.6" y="21.0" width="7.1" height="7.2" fill="rgb(104, 102, 133)"/><rect x="151.5" y="21.0" width="7.1" height="7.2" fill="rgb(147, 150, 174)"/><rect x="158.4" y="21.0" width="7.1" height="7.2" fill="rgb(85, 87, 97)"/><rect x="165.3" y="21.0" width="7.1" height="7.2" fill="rgb(162, 170, 178)"/><rect x="172.2" y="21.0" width="7.1" height="7.2" fill="rgb(167, 179, 187)"/><rect x="179.1" y="21.0" width="7.1" height="7.2" fill="rgb(195, 207, 216)"/><rect x="186.0" y="21.0" width="7.1" height="7.2" fill="rgb(179, 186, 205)"/><rect x="192.9" y="21.0" width="7.1" height="7.2" fill="rgb(178, 189, 198)"/><rect x="199.8" y="21.0" width="7.1" height="7.2" fill="rgb(152, 159, 169)"/><rect x="206.7" y="21.0" width="7.1" height="7.2" fill="rgb(138, 153, 171)"/><rect x="213.6" y="21.0" width="7.1" height="7.2" fill="rgb(158, 155, 168)"/><rect x="220.5" y="21.0" width="7.1" height="7.2" fill="rgb(127, 132, 140)"/><rect x="227.4" y="21.0" width="7.1" height="7.2" fill="rgb(183, 195, 204)"/><rect x="234.3" y="21.0" width="5.9" height="7.2" fill="rgb(171, 171, 184)"/><rect x="0.0" y="28.0" width="7.0" height="7.2" fill="rgb(228, 241, 252)"/><rect x="6.8" y="28.0" width="7.0" height="7.2" fill="rgb(228, 241, 252)"/><rect x="13.6" y="28.0" width="7.0" height="7.2" fill="rgb(222, 234, 247)"/><rect x="20.4" y="28.0" width="7.1" height="7.2" fill="rgb(203, 216, 229)"/><rect x="27.3" y="28.0" width="7.1" height="7.2" fill="rgb(216, 226, 235)"/><rect x="34.2" y="28.0" width="7.1" height="7.2" fill="rgb(199, 210, 220)"/><rect x="41.1" y="28.0" width="7.1" height="7.2" fill="rgb(202, 213, 223)"/><rect x="48.0" y="28.0" width="7.1" height="7.2" fill="rgb(216, 226, 235)"/><rect x="54.9" y="28.0" width="7.1" height="7.2" fill="rgb(206, 219, 232)"/><rect x="61.8" y="28.0" width="7.1" height="7.2" fill="rgb(219, 229, 241)"/><rect x="68.7" y="28.0" width="7.1" height="7.2" fill="rgb(214, 226, 239)"/><rect x="75.6" y="28.0" width="7.1" height="7.2" fill="rgb(204, 214, 229)"/><rect x="82.5" y="28.0" width="7.1" height="7.2" fill="rgb(219, 230, 242)"/><rect x="89.4" y="28.0" width="7.1" height="7.2" fill="rgb(204, 216, 226)"/><rect x="96.3" y="28.0" width="7.1" height="7.2" fill="rgb(206, 215, 226)"/><rect x="103.2" y="28.0" width="7.1" height="7.2" fill="rgb(209, 218, 226)"/><rect x="110.1" y="28.0" width="7.1" height="7.2" fill="rgb(199, 210, 220)"/><rect x="117.0" y="28.0" width="7.1" height="7.2" fill="rgb(200, 211, 222)"/><rect x="123.9" y="28.0" width="7.1" height="7.2" fill="rgb(210, 219, 227)"/><rect x="130.8" y="28.0" width="7.1" height="7.2" fill="rgb(208, 219, 230)"/><rect x="137.7" y="28.0" width="7.1" height="7.2" fill="rgb(211, 225, 237)"/><rect x="144.6" y="28.0" width="7.1" height="7.2" fill="rgb(202, 212, 227)"/><rect x="151.5" y="28.0" width="7.1" height="7.2" fill="rgb(191, 201, 211)"/><rect x="158.4" y="28.0" width="7.1" height="7.2" fill="rgb(197, 210, 224)"/><rect x="165.3" y="28.0" width="7.1" height="7.2" fill="rgb(205, 215, 230)"/><rect x="172.2" y="28.0" width="7.1" height="7.2" fill="rgb(204, 215, 225)"/><rect x="179.1" y="28.0" width="7.1" height="7.2" fill="rgb(199, 210, 219)"/><rect x="186.0" y="28.0" width="7.1" height="7.2" fill="rgb(210, 222, 232)"/><rect x="192.9" y="28.0" width="7.1" height="7.2" fill="rgb(207, 219, 229)"/><rect x="199.8" y="28.0" width="7.1" height="7.2" fill="rgb(216, 226, 237)"/><rect x="206.7" y="28.0" width="7.1" height="7.2" fill="rgb(200, 214, 227)"/><rect x="213.6" y="28.0" width="7.1" height="7.2" fill="rgb(214, 226, 237)"/><rect x="220.5" y="28.0" width="7.1" height="7.2" fill="rgb(209, 220, 231)"/><rect x="227.4" y="28.0" width="7.1" height="7.2" fill="rgb(206, 214, 225)"/><rect x="234.3" y="28.0" width="5.9" height="7.2" fill="rgb(212, 223, 237)"/><rect x="0.0" y="35.0" width="7.0" height="7.2" fill="rgb(226, 232, 244)"/><rect x="6.8" y="35.0" width="7.0" height="7.2" fill="rgb(226, 232, 244)"/><rect x="13.6" y="35.0" width="7.0" height="7.2" fill="rgb(221, 226, 239)"/><rect x="20.4" y="35.0" width="7.1" height="7.2" fill="rgb(226, 232, 244)"/><rect x="27.3" y="35.0" width="7.1" height="7.2" fill="rgb(226, 232, 244)"/><rect x="34.2" y="35.0" width="7.1" height="7.2" fill="rgb(226, 232, 244)"/><rect x="41.1" y="35.0" width="7.1" height="7.2" fill="rgb(226, 232, 244)"/><rect x="48.0" y="35.0" width="7.1" height="7.2" fill="rgb(226, 232, 244)"/><rect x="54.9" y="35.0" width="7.1" height="7.2" fill="rgb(226, 232, 244)"/><rect x="61.8" y="35.0" width="7.1" height="7.2" fill="rgb(226, 232, 244)"/><rect x="68.7" y="35.0" width="7.1" height="7.2" fill="rgb(226, 232, 244)"/><rect x="75.6" y="35.0" width="7.1" height="7.2" fill="rgb(226, 232, 244)"/><rect x="82.5" y="35.0" width="7.1" height="7.2" fill="rgb(226, 232, 244)"/><rect x="89.4" y="35.0" width="7.1" height="7.2" fill="rgb(226, 232, 244)"/><rect x="96.3" y="35.0" width="7.1" height="7.2" fill="rgb(226, 232, 244)"/><rect x="103.2" y="35.0" width="7.1" height="7.2" fill="rgb(226, 232, 244)"/><rect x="110.1" y="35.0" width="7.1" height="7.2" fill="rgb(226, 232, 244)"/><rect x="117.0" y="35.0" width="7.1" height="7.2" fill="rgb(226, 232, 244)"/><rect x="123.9" y="35.0" width="7.1" height="7.2" fill="rgb(226, 232, 244)"/><rect x="130.8" y="35.0" width="7.1" height="7.2" fill="rgb(226, 232, 244)"/><rect x="137.7" y="35.0" width="7.1" height="7.2" fill="rgb(226, 232, 244)"/><rect x="144.6" y="35.0" width="7.1" height="7.2" fill="rgb(226, 232, 244)"/><rect x="151.5" y="35.0" width="7.1" height="7.2" fill="rgb(226, 232, 244)"/><rect x="158.4" y="35.0" width="7.1" height="7.2" fill="rgb(226, 232, 244)"/><rect x="165.3" y="35.0" width="7.1" height="7.2" fill="rgb(226, 232, 244)"/><rect x="172.2" y="35.0" width="7.1" height="7.2" fill="rgb(226, 232, 244)"/><rect x="179.1" y="35.0" width="7.1" height="7.2" fill="rgb(226, 232, 244)"/><rect x="186.0" y="35.0" width="7.1" height="7.2" fill="rgb(226, 232, 244)"/><rect x="192.9" y="35.0" width="7.1" height="7.2" fill="rgb(226, 232, 244)"/><rect x="199.8" y="35.0" width="7.1" height="7.2" fill="rgb(226, 232, 244)"/><rect x="206.7" y="35.0" width="7.1" height="7.2" fill="rgb(226, 232, 244)"/><rect x="213.6" y="35.0" width="7.1" height="7.2" fill="rgb(226, 232, 244)"/><rect x="220.5" y="35.0" width="7.1" height="7.2" fill="rgb(226, 232, 244)"/><rect x="227.4" y="35.0" width="7.1" height="7.2" fill="rgb(226, 232, 244)"/><rect x="234.3" y="35.0" width="5.9" height="7.2" fill="rgb(226, 232, 244)"/><rect x="0.0" y="42.0" width="7.0" height="7.2" fill="rgb(241, 241, 248)"/><rect x="6.8" y="42.0" width="7.0" height="7.2" fill="rgb(241, 241, 248)"/><rect x="13.6" y="42.0" width="7.0" height="7.2" fill="rgb(234, 234, 243)"/><rect x="20.4" y="42.0" width="7.1" height="7.2" fill="rgb(201, 196, 206)"/><rect x="27.3" y="42.0" width="7.1" height="7.2" fill="rgb(206, 208, 215)"/><rect x="34.2" y="42.0" width="7.1" height="7.2" fill="rgb(191, 194, 200)"/><rect x="41.1" y="42.0" width="7.1" height="7.2" fill="rgb(187, 187, 195)"/><rect x="48.0" y="42.0" width="7.1" height="7.2" fill="rgb(218, 218, 224)"/><rect x="54.9" y="42.0" width="7.1" height="7.2" fill="rgb(172, 170, 189)"/><rect x="61.8" y="42.0" width="7.1" height="7.2" fill="rgb(193, 193, 198)"/><rect x="68.7" y="42.0" width="7.1" height="7.2" fill="rgb(184, 178, 178)"/><rect x="75.6" y="42.0" width="7.1" height="7.2" fill="rgb(188, 188, 193)"/><rect x="82.5" y="42.0" width="7.1" height="7.2" fill="rgb(173, 173, 179)"/><rect x="89.4" y="42.0" width="7.1" height="7.2" fill="rgb(171, 171, 179)"/><rect x="96.3" y="42.0" width="7.1" height="7.2" fill="rgb(223, 224, 233)"/><rect x="103.2" y="42.0" width="7.1" height="7.2" fill="rgb(174, 180, 194)"/><rect x="110.1" y="42.0" width="7.1" height="7.2" fill="rgb(205, 204, 217)"/><rect x="117.0" y="42.0" width="7.1" height="7.2" fill="rgb(201, 201, 208)"/><rect x="123.9" y="42.0" width="7.1" height="7.2" fill="rgb(182, 176, 186)"/><rect x="130.8" y="42.0" width="7.1" height="7.2" fill="rgb(209, 206, 209)"/><rect x="137.7" y="42.0" width="7.1" height="7.2" fill="rgb(202, 198, 200)"/><rect x="144.6" y="42.0" width="7.1" height="7.2" fill="rgb(179, 179, 184)"/><rect x="151.5" y="42.0" width="7.1" height="7.2" fill="rgb(197, 195, 210)"/><rect x="158.4" y="42.0" width="7.1" height="7.2" fill="rgb(201, 197, 200)"/><rect x="165.3" y="42.0" width="7.1" height="7.2" fill="rgb(226, 226, 232)"/><rect x="172.2" y="42.0" width="7.1" height="7.2" fill="rgb(189, 187, 203)"/><rect x="179.1" y="42.0" width="7.1" height="7.2" fill="rgb(198, 198, 204)"/><rect x="186.0" y="42.0" width="7.1" height="7.2" fill="rgb(148, 148, 154)"/><rect x="192.9" y="42.0" width="7.1" height="7.2" fill="rgb(145, 145, 148)"/><rect x="199.8" y="42.0" width="7.1" height="7.2" fill="rgb(183, 187, 193)"/><rect x="206.7" y="42.0" width="7.1" height="7.2" fill="rgb(197, 193, 194)"/><rect x="213.6" y="42.0" width="7.1" height="7.2" fill="rgb(212, 212, 220)"/><rect x="220.5" y="42.0" width="7.1" height="7.2" fill="rgb(219, 219, 226)"/><rect x="227.4" y="42.0" width="7.1" height="7.2" fill="rgb(184, 178, 188)"/><rect x="234.3" y="42.0" width="5.9" height="7.2" fill="rgb(180, 180, 185)"/><rect x="0.0" y="49.0" width="7.0" height="7.2" fill="rgb(241, 241, 248)"/><rect x="6.8" y="49.0" width="7.0" height="7.2" fill="rgb(241, 241, 248)"/><rect x="13.6" y="49.0" width="7.0" height="7.2" fill="rgb(234, 234, 243)"/><rect x="20.4" y="49.0" width="7.1" height="7.2" fill="rgb(170, 170, 179)"/><rect x="27.3" y="49.0" width="7.1" height="7.2" fill="rgb(192, 192, 199)"/><rect x="34.2" y="49.0" width="7.1" height="7.2" fill="rgb(161, 166, 172)"/><rect x="41.1" y="49.0" width="7.1" height="7.2" fill="rgb(197, 196, 211)"/><rect x="48.0" y="49.0" width="7.1" height="7.2" fill="rgb(218, 217, 228)"/><rect x="54.9" y="49.0" width="7.1" height="7.2" fill="rgb(201, 197, 206)"/><rect x="61.8" y="49.0" width="7.1" height="7.2" fill="rgb(188, 186, 202)"/><rect x="68.7" y="49.0" width="7.1" height="7.2" fill="rgb(189, 194, 206)"/><rect x="75.6" y="49.0" width="7.1" height="7.2" fill="rgb(203, 199, 208)"/><rect x="82.5" y="49.0" width="7.1" height="7.2" fill="rgb(195, 194, 209)"/><rect x="89.4" y="49.0" width="7.1" height="7.2" fill="rgb(176, 169, 169)"/><rect x="96.3" y="49.0" width="7.1" height="7.2" fill="rgb(174, 167, 178)"/><rect x="103.2" y="49.0" width="7.1" height="7.2" fill="rgb(185, 185, 191)"/><rect x="110.1" y="49.0" width="7.1" height="7.2" fill="rgb(201, 197, 199)"/><rect x="117.0" y="49.0" width="7.1" height="7.2" fill="rgb(175, 168, 179)"/><rect x="123.9" y="49.0" width="7.1" height="7.2" fill="rgb(166, 158, 156)"/><rect x="130.8" y="49.0" width="7.1" height="7.2" fill="rgb(152, 152, 160)"/><rect x="137.7" y="49.0" width="7.1" height="7.2" fill="rgb(223, 222, 232)"/><rect x="144.6" y="49.0" width="7.1" height="7.2" fill="rgb(161, 166, 172)"/><rect x="151.5" y="49.0" width="7.1" height="7.2" fill="rgb(163, 163, 170)"/><rect x="158.4" y="49.0" width="7.1" height="7.2" fill="rgb(215, 215, 226)"/><rect x="165.3" y="49.0" width="7.1" height="7.2" fill="rgb(161, 168, 183)"/><rect x="172.2" y="49.0" width="7.1" height="7.2" fill="rgb(211, 213, 223)"/><rect x="179.1" y="49.0" width="7.1" height="7.2" fill="rgb(216, 216, 223)"/><rect x="186.0" y="49.0" width="7.1" height="7.2" fill="rgb(155, 155, 158)"/><rect x="192.9" y="49.0" width="7.1" height="7.2" fill="rgb(128, 125, 151)"/><rect x="199.8" y="49.0" width="7.1" height="7.2" fill="rgb(103, 103, 109)"/><rect x="206.7" y="49.0" width="7.1" height="7.2" fill="rgb(157, 157, 161)"/><rect x="213.6" y="49.0" width="7.1" height="7.2" fill="rgb(195, 194, 209)"/><rect x="220.5" y="49.0" width="7.1" height="7.2" fill="rgb(163, 163, 167)"/><rect x="227.4" y="49.0" width="7.1" height="7.2" fill="rgb(226, 224, 229)"/><rect x="234.3" y="49.0" width="5.9" height="7.2" fill="rgb(147, 147, 151)"/><rect x="0.0" y="56.0" width="7.0" height="7.2" fill="rgb(239, 239, 246)"/><rect x="6.8" y="56.0" width="7.0" height="7.2" fill="rgb(239, 239, 246)"/><rect x="13.6" y="56.0" width="7.0" height="7.2" fill="rgb(231, 231, 241)"/><rect x="20.4" y="56.0" width="7.1" height="7.2" fill="rgb(239, 239, 246)"/><rect x="27.3" y="56.0" width="7.1" height="7.2" fill="rgb(239, 239, 246)"/><rect x="34.2" y="56.0" width="7.1" height="7.2" fill="rgb(239, 239, 246)"/><rect x="41.1" y="56.0" width="7.1" height="7.2" fill="rgb(239, 239, 246)"/><rect x="48.0" y="56.0" width="7.1" height="7.2" fill="rgb(239, 239, 246)"/><rect x="54.9" y="56.0" width="7.1" height="7.2" fill="rgb(239, 239, 246)"/><rect x="61.8" y="56.0" width="7.1" height="7.2" fill="rgb(239, 239, 246)"/><rect x="68.7" y="56.0" width="7.1" height="7.2" fill="rgb(239, 239, 246)"/><rect x="75.6" y="56.0" width="7.1" height="7.2" fill="rgb(239, 239, 246)"/><rect x="82.5" y="56.0" width="7.1" height="7.2" fill="rgb(239, 239, 246)"/><rect x="89.4" y="56.0" width="7.1" height="7.2" fill="rgb(239, 239, 246)"/><rect x="96.3" y="56.0" width="7.1" height="7.2" fill="rgb(239, 239, 246)"/><rect x="103.2" y="56.0" width="7.1" height="7.2" fill="rgb(239, 239, 246)"/><rect x="110.1" y="56.0" width="7.1" height="7.2" fill="rgb(239, 239, 246)"/><rect x="117.0" y="56.0" width="7.1" height="7.2" fill="rgb(239, 239, 246)"/><rect x="123.9" y="56.0" width="7.1" height="7.2" fill="rgb(239, 239, 246)"/><rect x="130.8" y="56.0" width="7.1" height="7.2" fill="rgb(239, 239, 246)"/><rect x="137.7" y="56.0" width="7.1" height="7.2" fill="rgb(239, 239, 246)"/><rect x="144.6" y="56.0" width="7.1" height="7.2" fill="rgb(239, 239, 246)"/><rect x="151.5" y="56.0" width="7.1" height="7.2" fill="rgb(239, 239, 246)"/><rect x="158.4" y="56.0" width="7.1" height="7.2" fill="rgb(239, 239, 246)"/><rect x="165.3" y="56.0" width="7.1" height="7.2" fill="rgb(239, 239, 246)"/><rect x="172.2" y="56.0" width="7.1" height="7.2" fill="rgb(239, 239, 246)"/><rect x="179.1" y="56.0" width="7.1" height="7.2" fill="rgb(239, 239, 246)"/><rect x="186.0" y="56.0" width="7.1" height="7.2" fill="rgb(239, 239, 246)"/><rect x="192.9" y="56.0" width="7.1" height="7.2" fill="rgb(239, 239, 246)"/><rect x="199.8" y="56.0" width="7.1" height="7.2" fill="rgb(239, 239, 246)"/><rect x="206.7" y="56.0" width="7.1" height="7.2" fill="rgb(239, 239, 246)"/><rect x="213.6" y="56.0" width="7.1" height="7.2" fill="rgb(239, 239, 246)"/><rect x="220.5" y="56.0" width="7.1" height="7.2" fill="rgb(239, 239, 246)"/><rect x="227.4" y="56.0" width="7.1" height="7.2" fill="rgb(239, 239, 246)"/><rect x="234.3" y="56.0" width="5.9" height="7.2" fill="rgb(239, 239, 246)"/><rect x="0.0" y="63.0" width="7.0" height="7.2" fill="rgb(255, 255, 255)"/><rect x="6.8" y="63.0" width="7.0" height="7.2" fill="rgb(255, 255, 255)"/><rect x="13.6" y="63.0" width="7.0" height="7.2" fill="rgb(246, 246, 249)"/><rect x="20.4" y="63.0" width="7.1" height="7.2" fill="rgb(243, 243, 245)"/><rect x="27.3" y="63.0" width="7.1" height="7.2" fill="rgb(244, 244, 244)"/><rect x="34.2" y="63.0" width="7.1" height="7.2" fill="rgb(240, 241, 243)"/><rect x="41.1" y="63.0" width="7.1" height="7.2" fill="rgb(240, 240, 240)"/><rect x="48.0" y="63.0" width="7.1" height="7.2" fill="rgb(245, 245, 246)"/><rect x="54.9" y="63.0" width="7.1" height="7.2" fill="rgb(239, 239, 240)"/><rect x="61.8" y="63.0" width="7.1" height="7.2" fill="rgb(252, 252, 253)"/><rect x="68.7" y="63.0" width="7.1" height="7.2" fill="rgb(234, 234, 234)"/><rect x="75.6" y="63.0" width="7.1" height="7.2" fill="rgb(234, 234, 234)"/><rect x="82.5" y="63.0" width="7.1" height="7.2" fill="rgb(239, 239, 242)"/><rect x="89.4" y="63.0" width="7.1" height="7.2" fill="rgb(253, 252, 253)"/><rect x="96.3" y="63.0" width="7.1" height="7.2" fill="rgb(242, 242, 242)"/><rect x="103.2" y="63.0" width="7.1" height="7.2" fill="rgb(246, 245, 245)"/><rect x="110.1" y="63.0" width="7.1" height="7.2" fill="rgb(250, 250, 251)"/><rect x="117.0" y="63.0" width="7.1" height="7.2" fill="rgb(243, 244, 244)"/><rect x="123.9" y="63.0" width="7.1" height="7.2" fill="rgb(243, 243, 245)"/><rect x="130.8" y="63.0" width="7.1" height="7.2" fill="rgb(251, 251, 251)"/><rect x="137.7" y="63.0" width="7.1" height="7.2" fill="rgb(243, 241, 243)"/><rect x="144.6" y="63.0" width="7.1" height="7.2" fill="rgb(242, 243, 244)"/><rect x="151.5" y="63.0" width="7.1" height="7.2" fill="rgb(251, 251, 251)"/><rect x="158.4" y="63.0" width="7.1" height="7.2" fill="rgb(243, 243, 243)"/><rect x="165.3" y="63.0" width="7.1" height="7.2" fill="rgb(244, 244, 244)"/><rect x="172.2" y="63.0" width="7.1" height="7.2" fill="rgb(243, 244, 244)"/><rect x="179.1" y="63.0" width="7.1" height="7.2" fill="rgb(241, 241, 242)"/><rect x="186.0" y="63.0" width="7.1" height="7.2" fill="rgb(250, 250, 251)"/><rect x="192.9" y="63.0" width="7.1" height="7.2" fill="rgb(246, 245, 246)"/><rect x="199.8" y="63.0" width="7.1" height="7.2" fill="rgb(244, 244, 244)"/><rect x="206.7" y="63.0" width="7.1" height="7.2" fill="rgb(248, 247, 247)"/><rect x="213.6" y="63.0" width="7.1" height="7.2" fill="rgb(245, 245, 245)"/><rect x="220.5" y="63.0" width="7.1" height="7.2" fill="rgb(244, 244, 244)"/><rect x="227.4" y="63.0" width="7.1" height="7.2" fill="rgb(243, 243, 243)"/><rect x="234.3" y="63.0" width="5.9" height="7.2" fill="rgb(245, 244, 243)"/><rect x="0.0" y="70.0" width="7.0" height="7.2" fill="rgb(255, 255, 255)"/><rect x="6.8" y="70.0" width="7.0" height="7.2" fill="rgb(255, 255, 255)"/><rect x="13.6" y="70.0" width="7.0" height="7.2" fill="rgb(246, 246, 249)"/><rect x="20.4" y="70.0" width="7.1" height="7.2" fill="rgb(160, 160, 162)"/><rect x="27.3" y="70.0" width="7.1" height="7.2" fill="rgb(153, 159, 162)"/><rect x="34.2" y="70.0" width="7.1" height="7.2" fill="rgb(179, 172, 167)"/><rect x="41.1" y="70.0" width="7.1" height="7.2" fill="rgb(189, 183, 179)"/><rect x="48.0" y="70.0" width="7.1" height="7.2" fill="rgb(182, 180, 194)"/><rect x="54.9" y="70.0" width="7.1" height="7.2" fill="rgb(153, 150, 170)"/><rect x="61.8" y="70.0" width="7.1" height="7.2" fill="rgb(190, 183, 190)"/><rect x="68.7" y="70.0" width="7.1" height="7.2" fill="rgb(208, 208, 208)"/><rect x="75.6" y="70.0" width="7.1" height="7.2" fill="rgb(117, 117, 117)"/><rect x="82.5" y="70.0" width="7.1" height="7.2" fill="rgb(168, 166, 183)"/><rect x="89.4" y="70.0" width="7.1" height="7.2" fill="rgb(189, 182, 189)"/><rect x="96.3" y="70.0" width="7.1" height="7.2" fill="rgb(146, 146, 146)"/><rect x="103.2" y="70.0" width="7.1" height="7.2" fill="rgb(189, 189, 192)"/><rect x="110.1" y="70.0" width="7.1" height="7.2" fill="rgb(133, 133, 136)"/><rect x="117.0" y="70.0" width="7.1" height="7.2" fill="rgb(176, 183, 193)"/><rect x="123.9" y="70.0" width="7.1" height="7.2" fill="rgb(133, 133, 136)"/><rect x="130.8" y="70.0" width="7.1" height="7.2" fill="rgb(228, 230, 233)"/><rect x="137.7" y="70.0" width="7.1" height="7.2" fill="rgb(144, 153, 168)"/><rect x="144.6" y="70.0" width="7.1" height="7.2" fill="rgb(190, 190, 191)"/><rect x="151.5" y="70.0" width="7.1" height="7.2" fill="rgb(148, 148, 153)"/><rect x="158.4" y="70.0" width="7.1" height="7.2" fill="rgb(156, 156, 161)"/><rect x="165.3" y="70.0" width="7.1" height="7.2" fill="rgb(175, 167, 162)"/><rect x="172.2" y="70.0" width="7.1" height="7.2" fill="rgb(174, 166, 174)"/><rect x="179.1" y="70.0" width="7.1" height="7.2" fill="rgb(182, 188, 198)"/><rect x="186.0" y="70.0" width="7.1" height="7.2" fill="rgb(184, 184, 184)"/><rect x="192.9" y="70.0" width="7.1" height="7.2" fill="rgb(163, 163, 168)"/><rect x="199.8" y="70.0" width="7.1" height="7.2" fill="rgb(140, 140, 140)"/><rect x="206.7" y="70.0" width="7.1" height="7.2" fill="rgb(176, 174, 189)"/><rect x="213.6" y="70.0" width="7.1" height="7.2" fill="rgb(201, 199, 210)"/><rect x="220.5" y="70.0" width="7.1" height="7.2" fill="rgb(195, 195, 195)"/><rect x="227.4" y="70.0" width="7.1" height="7.2" fill="rgb(204, 200, 204)"/><rect x="234.3" y="70.0" width="5.9" height="7.2" fill="rgb(163, 154, 163)"/><rect x="0.0" y="77.0" width="7.0" height="7.2" fill="rgb(255, 255, 255)"/><rect x="6.8" y="77.0" width="7.0" height="7.2" fill="rgb(255, 255, 255)"/><rect x="13.6" y="77.0" width="7.0" height="7.2" fill="rgb(246, 246, 249)"/><rect x="20.4" y="77.0" width="7.1" height="7.2" fill="rgb(210, 210, 212)"/><rect x="27.3" y="77.0" width="7.1" height="7.2" fill="rgb(217, 219, 221)"/><rect x="34.2" y="77.0" width="7.1" height="7.2" fill="rgb(210, 210, 210)"/><rect x="41.1" y="77.0" width="7.1" height="7.2" fill="rgb(219, 218, 226)"/><rect x="48.0" y="77.0" width="7.1" height="7.2" fill="rgb(226, 225, 231)"/><rect x="54.9" y="77.0" width="7.1" height="7.2" fill="rgb(227, 227, 227)"/><rect x="61.8" y="77.0" width="7.1" height="7.2" fill="rgb(213, 210, 207)"/><rect x="68.7" y="77.0" width="7.1" height="7.2" fill="rgb(182, 182, 185)"/><rect x="75.6" y="77.0" width="7.1" height="7.2" fill="rgb(242, 241, 242)"/><rect x="82.5" y="77.0" width="7.1" height="7.2" fill="rgb(209, 205, 202)"/><rect x="89.4" y="77.0" width="7.1" height="7.2" fill="rgb(225, 222, 220)"/><rect x="96.3" y="77.0" width="7.1" height="7.2" fill="rgb(216, 218, 219)"/><rect x="103.2" y="77.0" width="7.1" height="7.2" fill="rgb(226, 224, 222)"/><rect x="110.1" y="77.0" width="7.1" height="7.2" fill="rgb(228, 228, 228)"/><rect x="117.0" y="77.0" width="7.1" height="7.2" fill="rgb(216, 212, 216)"/><rect x="123.9" y="77.0" width="7.1" height="7.2" fill="rgb(242, 242, 243)"/><rect x="130.8" y="77.0" width="7.1" height="7.2" fill="rgb(244, 244, 244)"/><rect x="137.7" y="77.0" width="7.1" height="7.2" fill="rgb(216, 219, 224)"/><rect x="144.6" y="77.0" width="7.1" height="7.2" fill="rgb(227, 224, 227)"/><rect x="151.5" y="77.0" width="7.1" height="7.2" fill="rgb(232, 230, 232)"/><rect x="158.4" y="77.0" width="7.1" height="7.2" fill="rgb(223, 222, 228)"/><rect x="165.3" y="77.0" width="7.1" height="7.2" fill="rgb(224, 223, 229)"/><rect x="172.2" y="77.0" width="7.1" height="7.2" fill="rgb(228, 228, 228)"/><rect x="179.1" y="77.0" width="7.1" height="7.2" fill="rgb(246, 246, 246)"/><rect x="186.0" y="77.0" width="7.1" height="7.2" fill="rgb(237, 238, 241)"/><rect x="192.9" y="77.0" width="7.1" height="7.2" fill="rgb(213, 212, 220)"/><rect x="199.8" y="77.0" width="7.1" height="7.2" fill="rgb(225, 226, 227)"/><rect x="206.7" y="77.0" width="7.1" height="7.2" fill="rgb(222, 222, 224)"/><rect x="213.6" y="77.0" width="7.1" height="7.2" fill="rgb(211, 214, 215)"/><rect x="220.5" y="77.0" width="7.1" height="7.2" fill="rgb(230, 232, 235)"/><rect x="227.4" y="77.0" width="7.1" height="7.2" fill="rgb(208, 208, 209)"/><rect x="234.3" y="77.0" width="5.9" height="7.2" fill="rgb(217, 213, 217)"/><rect x="0.0" y="84.0" width="7.0" height="7.2" fill="rgb(239, 239, 246)"/><rect x="6.8" y="84.0" width="7.0" height="7.2" fill="rgb(239, 239, 246)"/><rect x="13.6" y="84.0" width="7.0" height="7.2" fill="rgb(231, 231, 241)"/><rect x="20.4" y="84.0" width="7.1" height="7.2" fill="rgb(239, 239, 246)"/><rect x="27.3" y="84.0" width="7.1" height="7.2" fill="rgb(239, 239, 246)"/><rect x="34.2" y="84.0" width="7.1" height="7.2" fill="rgb(239, 239, 246)"/><rect x="41.1" y="84.0" width="7.1" height="7.2" fill="rgb(239, 239, 246)"/><rect x="48.0" y="84.0" width="7.1" height="7.2" fill="rgb(239, 239, 246)"/><rect x="54.9" y="84.0" width="7.1" height="7.2" fill="rgb(239, 239, 246)"/><rect x="61.8" y="84.0" width="7.1" height="7.2" fill="rgb(239, 239, 246)"/><rect x="68.7" y="84.0" width="7.1" height="7.2" fill="rgb(239, 239, 246)"/><rect x="75.6" y="84.0" width="7.1" height="7.2" fill="rgb(239, 239, 246)"/><rect x="82.5" y="84.0" width="7.1" height="7.2" fill="rgb(239, 239, 246)"/><rect x="89.4" y="84.0" width="7.1" height="7.2" fill="rgb(239, 239, 246)"/><rect x="96.3" y="84.0" width="7.1" height="7.2" fill="rgb(239, 239, 246)"/><rect x="103.2" y="84.0" width="7.1" height="7.2" fill="rgb(239, 239, 246)"/><rect x="110.1" y="84.0" width="7.1" height="7.2" fill="rgb(239, 239, 246)"/><rect x="117.0" y="84.0" width="7.1" height="7.2" fill="rgb(239, 239, 246)"/><rect x="123.9" y="84.0" width="7.1" height="7.2" fill="rgb(239, 239, 246)"/><rect x="130.8" y="84.0" width="7.1" height="7.2" fill="rgb(239, 239, 246)"/><rect x="137.7" y="84.0" width="7.1" height="7.2" fill="rgb(239, 239, 246)"/><rect x="144.6" y="84.0" width="7.1" height="7.2" fill="rgb(239, 239, 246)"/><rect x="151.5" y="84.0" width="7.1" height="7.2" fill="rgb(239, 239, 246)"/><rect x="158.4" y="84.0" width="7.1" height="7.2" fill="rgb(239, 239, 246)"/><rect x="165.3" y="84.0" width="7.1" height="7.2" fill="rgb(239, 239, 246)"/><rect x="172.2" y="84.0" width="7.1" height="7.2" fill="rgb(239, 239, 246)"/><rect x="179.1" y="84.0" width="7.1" height="7.2" fill="rgb(239, 239, 246)"/><rect x="186.0" y="84.0" width="7.1" height="7.2" fill="rgb(239, 239, 246)"/><rect x="192.9" y="84.0" width="7.1" height="7.2" fill="rgb(239, 239, 246)"/><rect x="199.8" y="84.0" width="7.1" height="7.2" fill="rgb(239, 239, 246)"/><rect x="206.7" y="84.0" width="7.1" height="7.2" fill="rgb(239, 239, 246)"/><rect x="213.6" y="84.0" width="7.1" height="7.2" fill="rgb(239, 239, 246)"/><rect x="220.5" y="84.0" width="7.1" height="7.2" fill="rgb(239, 239, 246)"/><rect x="227.4" y="84.0" width="7.1" height="7.2" fill="rgb(239, 239, 246)"/><rect x="234.3" y="84.0" width="5.9" height="7.2" fill="rgb(239, 239, 246)"/><rect x="0.0" y="91.0" width="7.0" height="7.2" fill="rgb(241, 241, 248)"/><rect x="6.8" y="91.0" width="7.0" height="7.2" fill="rgb(241, 241, 248)"/><rect x="13.6" y="91.0" width="7.0" height="7.2" fill="rgb(234, 234, 243)"/><rect x="20.4" y="91.0" width="7.1" height="7.2" fill="rgb(206, 206, 212)"/><rect x="27.3" y="91.0" width="7.1" height="7.2" fill="rgb(185, 185, 193)"/><rect x="34.2" y="91.0" width="7.1" height="7.2" fill="rgb(201, 197, 199)"/><rect x="41.1" y="91.0" width="7.1" height="7.2" fill="rgb(203, 206, 212)"/><rect x="48.0" y="91.0" width="7.1" height="7.2" fill="rgb(197, 201, 212)"/><rect x="54.9" y="91.0" width="7.1" height="7.2" fill="rgb(229, 227, 233)"/><rect x="61.8" y="91.0" width="7.1" height="7.2" fill="rgb(195, 195, 203)"/><rect x="68.7" y="91.0" width="7.1" height="7.2" fill="rgb(195, 190, 200)"/><rect x="75.6" y="91.0" width="7.1" height="7.2" fill="rgb(192, 192, 197)"/><rect x="82.5" y="91.0" width="7.1" height="7.2" fill="rgb(205, 201, 210)"/><rect x="89.4" y="91.0" width="7.1" height="7.2" fill="rgb(204, 204, 211)"/><rect x="96.3" y="91.0" width="7.1" height="7.2" fill="rgb(189, 189, 196)"/><rect x="103.2" y="91.0" width="7.1" height="7.2" fill="rgb(189, 193, 206)"/><rect x="110.1" y="91.0" width="7.1" height="7.2" fill="rgb(194, 194, 199)"/><rect x="117.0" y="91.0" width="7.1" height="7.2" fill="rgb(205, 205, 211)"/><rect x="123.9" y="91.0" width="7.1" height="7.2" fill="rgb(207, 206, 219)"/><rect x="130.8" y="91.0" width="7.1" height="7.2" fill="rgb(226, 226, 236)"/><rect x="137.7" y="91.0" width="7.1" height="7.2" fill="rgb(179, 177, 195)"/><rect x="144.6" y="91.0" width="7.1" height="7.2" fill="rgb(168, 175, 189)"/><rect x="151.5" y="91.0" width="7.1" height="7.2" fill="rgb(198, 202, 213)"/><rect x="158.4" y="91.0" width="7.1" height="7.2" fill="rgb(190, 188, 204)"/><rect x="165.3" y="91.0" width="7.1" height="7.2" fill="rgb(182, 182, 190)"/><rect x="172.2" y="91.0" width="7.1" height="7.2" fill="rgb(205, 205, 212)"/><rect x="179.1" y="91.0" width="7.1" height="7.2" fill="rgb(220, 219, 230)"/><rect x="186.0" y="91.0" width="7.1" height="7.2" fill="rgb(205, 201, 204)"/><rect x="192.9" y="91.0" width="7.1" height="7.2" fill="rgb(207, 207, 215)"/><rect x="199.8" y="91.0" width="7.1" height="7.2" fill="rgb(210, 212, 219)"/><rect x="206.7" y="91.0" width="7.1" height="7.2" fill="rgb(215, 213, 217)"/><rect x="213.6" y="91.0" width="7.1" height="7.2" fill="rgb(191, 191, 199)"/><rect x="220.5" y="91.0" width="7.1" height="7.2" fill="rgb(191, 189, 205)"/><rect x="227.4" y="91.0" width="7.1" height="7.2" fill="rgb(200, 196, 205)"/><rect x="234.3" y="91.0" width="5.9" height="7.2" fill="rgb(228, 228, 235)"/><rect x="0.0" y="98.0" width="7.0" height="7.2" fill="rgb(241, 241, 248)"/><rect x="6.8" y="98.0" width="7.0" height="7.2" fill="rgb(241, 241, 248)"/><rect x="13.6" y="98.0" width="7.0" height="7.2" fill="rgb(234, 234, 243)"/><rect x="20.4" y="98.0" width="7.1" height="7.2" fill="rgb(206, 206, 212)"/><rect x="27.3" y="98.0" width="7.1" height="7.2" fill="rgb(146, 154, 171)"/><rect x="34.2" y="98.0" width="7.1" height="7.2" fill="rgb(167, 160, 158)"/><rect x="41.1" y="98.0" width="7.1" height="7.2" fill="rgb(179, 172, 172)"/><rect x="48.0" y="98.0" width="7.1" height="7.2" fill="rgb(151, 151, 154)"/><rect x="54.9" y="98.0" width="7.1" height="7.2" fill="rgb(169, 169, 177)"/><rect x="61.8" y="98.0" width="7.1" height="7.2" fill="rgb(215, 217, 223)"/><rect x="68.7" y="98.0" width="7.1" height="7.2" fill="rgb(165, 170, 176)"/><rect x="75.6" y="98.0" width="7.1" height="7.2" fill="rgb(220, 218, 226)"/><rect x="82.5" y="98.0" width="7.1" height="7.2" fill="rgb(177, 171, 170)"/><rect x="89.4" y="98.0" width="7.1" height="7.2" fill="rgb(173, 165, 176)"/><rect x="96.3" y="98.0" width="7.1" height="7.2" fill="rgb(221, 219, 224)"/><rect x="103.2" y="98.0" width="7.1" height="7.2" fill="rgb(167, 160, 158)"/><rect x="110.1" y="98.0" width="7.1" height="7.2" fill="rgb(158, 166, 181)"/><rect x="117.0" y="98.0" width="7.1" height="7.2" fill="rgb(190, 185, 186)"/><rect x="123.9" y="98.0" width="7.1" height="7.2" fill="rgb(154, 145, 142)"/><rect x="130.8" y="98.0" width="7.1" height="7.2" fill="rgb(140, 140, 146)"/><rect x="137.7" y="98.0" width="7.1" height="7.2" fill="rgb(151, 151, 155)"/><rect x="144.6" y="98.0" width="7.1" height="7.2" fill="rgb(129, 129, 135)"/><rect x="151.5" y="98.0" width="7.1" height="7.2" fill="rgb(172, 164, 175)"/><rect x="158.4" y="98.0" width="7.1" height="7.2" fill="rgb(167, 160, 158)"/><rect x="165.3" y="98.0" width="7.1" height="7.2" fill="rgb(171, 164, 174)"/><rect x="172.2" y="98.0" width="7.1" height="7.2" fill="rgb(174, 174, 181)"/><rect x="179.1" y="98.0" width="7.1" height="7.2" fill="rgb(207, 204, 212)"/><rect x="186.0" y="98.0" width="7.1" height="7.2" fill="rgb(190, 193, 199)"/><rect x="192.9" y="98.0" width="7.1" height="7.2" fill="rgb(191, 189, 205)"/><rect x="199.8" y="98.0" width="7.1" height="7.2" fill="rgb(148, 148, 157)"/><rect x="206.7" y="98.0" width="7.1" height="7.2" fill="rgb(172, 164, 175)"/><rect x="213.6" y="98.0" width="7.1" height="7.2" fill="rgb(152, 152, 155)"/><rect x="220.5" y="98.0" width="7.1" height="7.2" fill="rgb(171, 169, 188)"/><rect x="227.4" y="98.0" width="7.1" height="7.2" fill="rgb(155, 155, 161)"/><rect x="234.3" y="98.0" width="5.9" height="7.2" fill="rgb(151, 151, 159)"/><rect x="0.0" y="105.0" width="7.0" height="7.2" fill="rgb(239, 239, 246)"/><rect x="6.8" y="105.0" width="7.0" height="7.2" fill="rgb(239, 239, 246)"/><rect x="13.6" y="105.0" width="7.0" height="7.2" fill="rgb(231, 231, 241)"/><rect x="20.4" y="105.0" width="7.1" height="7.2" fill="rgb(239, 239, 246)"/><rect x="27.3" y="105.0" width="7.1" height="7.2" fill="rgb(239, 239, 246)"/><rect x="34.2" y="105.0" width="7.1" height="7.2" fill="rgb(239, 239, 246)"/><rect x="41.1" y="105.0" width="7.1" height="7.2" fill="rgb(239, 239, 246)"/><rect x="48.0" y="105.0" width="7.1" height="7.2" fill="rgb(239, 239, 246)"/><rect x="54.9" y="105.0" width="7.1" height="7.2" fill="rgb(239, 239, 246)"/><rect x="61.8" y="105.0" width="7.1" height="7.2" fill="rgb(239, 239, 246)"/><rect x="68.7" y="105.0" width="7.1" height="7.2" fill="rgb(239, 239, 246)"/><rect x="75.6" y="105.0" width="7.1" height="7.2" fill="rgb(239, 239, 246)"/><rect x="82.5" y="105.0" width="7.1" height="7.2" fill="rgb(239, 239, 246)"/><rect x="89.4" y="105.0" width="7.1" height="7.2" fill="rgb(239, 239, 246)"/><rect x="96.3" y="105.0" width="7.1" height="7.2" fill="rgb(239, 239, 246)"/><rect x="103.2" y="105.0" width="7.1" height="7.2" fill="rgb(239, 239, 246)"/><rect x="110.1" y="105.0" width="7.1" height="7.2" fill="rgb(239, 239, 246)"/><rect x="117.0" y="105.0" width="7.1" height="7.2" fill="rgb(239, 239, 246)"/><rect x="123.9" y="105.0" width="7.1" height="7.2" fill="rgb(239, 239, 246)"/><rect x="130.8" y="105.0" width="7.1" height="7.2" fill="rgb(239, 239, 246)"/><rect x="137.7" y="105.0" width="7.1" height="7.2" fill="rgb(239, 239, 246)"/><rect x="144.6" y="105.0" width="7.1" height="7.2" fill="rgb(239, 239, 246)"/><rect x="151.5" y="105.0" width="7.1" height="7.2" fill="rgb(239, 239, 246)"/><rect x="158.4" y="105.0" width="7.1" height="7.2" fill="rgb(239, 239, 246)"/><rect x="165.3" y="105.0" width="7.1" height="7.2" fill="rgb(239, 239, 246)"/><rect x="172.2" y="105.0" width="7.1" height="7.2" fill="rgb(239, 239, 246)"/><rect x="179.1" y="105.0" width="7.1" height="7.2" fill="rgb(239, 239, 246)"/><rect x="186.0" y="105.0" width="7.1" height="7.2" fill="rgb(239, 239, 246)"/><rect x="192.9" y="105.0" width="7.1" height="7.2" fill="rgb(239, 239, 246)"/><rect x="199.8" y="105.0" width="7.1" height="7.2" fill="rgb(239, 239, 246)"/><rect x="206.7" y="105.0" width="7.1" height="7.2" fill="rgb(239, 239, 246)"/><rect x="213.6" y="105.0" width="7.1" height="7.2" fill="rgb(239, 239, 246)"/><rect x="220.5" y="105.0" width="7.1" height="7.2" fill="rgb(239, 239, 246)"/><rect x="227.4" y="105.0" width="7.1" height="7.2" fill="rgb(239, 239, 246)"/><rect x="234.3" y="105.0" width="5.9" height="7.2" fill="rgb(239, 239, 246)"/><rect x="0.0" y="112.0" width="7.0" height="7.2" fill="rgb(255, 255, 255)"/><rect x="6.8" y="112.0" width="7.0" height="7.2" fill="rgb(255, 255, 255)"/><rect x="13.6" y="112.0" width="7.0" height="7.2" fill="rgb(246, 246, 249)"/><rect x="20.4" y="112.0" width="7.1" height="7.2" fill="rgb(255, 255, 255)"/><rect x="27.3" y="112.0" width="7.1" height="7.2" fill="rgb(255, 255, 255)"/><rect x="34.2" y="112.0" width="7.1" height="7.2" fill="rgb(255, 255, 255)"/><rect x="41.1" y="112.0" width="7.1" height="7.2" fill="rgb(255, 255, 255)"/><rect x="48.0" y="112.0" width="7.1" height="7.2" fill="rgb(255, 255, 255)"/><rect x="54.9" y="112.0" width="7.1" height="7.2" fill="rgb(255, 255, 255)"/><rect x="61.8" y="112.0" width="7.1" height="7.2" fill="rgb(255, 255, 255)"/><rect x="68.7" y="112.0" width="7.1" height="7.2" fill="rgb(255, 255, 255)"/><rect x="75.6" y="112.0" width="7.1" height="7.2" fill="rgb(255, 255, 255)"/><rect x="82.5" y="112.0" width="7.1" height="7.2" fill="rgb(255, 255, 255)"/><rect x="89.4" y="112.0" width="7.1" height="7.2" fill="rgb(255, 255, 255)"/><rect x="96.3" y="112.0" width="7.1" height="7.2" fill="rgb(255, 255, 255)"/><rect x="103.2" y="112.0" width="7.1" height="7.2" fill="rgb(255, 255, 255)"/><rect x="110.1" y="112.0" width="7.1" height="7.2" fill="rgb(255, 255, 255)"/><rect x="117.0" y="112.0" width="7.1" height="7.2" fill="rgb(255, 255, 255)"/><rect x="123.9" y="112.0" width="7.1" height="7.2" fill="rgb(255, 255, 255)"/><rect x="130.8" y="112.0" width="7.1" height="7.2" fill="rgb(255, 255, 255)"/><rect x="137.7" y="112.0" width="7.1" height="7.2" fill="rgb(255, 255, 255)"/><rect x="144.6" y="112.0" width="7.1" height="7.2" fill="rgb(255, 255, 255)"/><rect x="151.5" y="112.0" width="7.1" height="7.2" fill="rgb(255, 255, 255)"/><rect x="158.4" y="112.0" width="7.1" height="7.2" fill="rgb(255, 255, 255)"/><rect x="165.3" y="112.0" width="7.1" height="7.2" fill="rgb(255, 255, 255)"/><rect x="172.2" y="112.0" width="7.1" height="7.2" fill="rgb(255, 255, 255)"/><rect x="179.1" y="112.0" width="7.1" height="7.2" fill="rgb(255, 255, 255)"/><rect x="186.0" y="112.0" width="7.1" height="7.2" fill="rgb(255, 255, 255)"/><rect x="192.9" y="112.0" width="7.1" height="7.2" fill="rgb(255, 255, 255)"/><rect x="199.8" y="112.0" width="7.1" height="7.2" fill="rgb(255, 255, 255)"/><rect x="206.7" y="112.0" width="7.1" height="7.2" fill="rgb(255, 255, 255)"/><rect x="213.6" y="112.0" width="7.1" height="7.2" fill="rgb(255, 255, 255)"/><rect x="220.5" y="112.0" width="7.1" height="7.2" fill="rgb(255, 255, 255)"/><rect x="227.4" y="112.0" width="7.1" height="7.2" fill="rgb(255, 255, 255)"/><rect x="234.3" y="112.0" width="5.9" height="7.2" fill="rgb(255, 255, 255)"/><rect x="0.0" y="119.0" width="7.0" height="7.2" fill="rgb(255, 255, 255)"/><rect x="6.8" y="119.0" width="7.0" height="7.2" fill="rgb(255, 255, 255)"/><rect x="13.6" y="119.0" width="7.0" height="7.2" fill="rgb(246, 246, 249)"/><rect x="20.4" y="119.0" width="7.1" height="7.2" fill="rgb(189, 189, 193)"/><rect x="27.3" y="119.0" width="7.1" height="7.2" fill="rgb(220, 220, 221)"/><rect x="34.2" y="119.0" width="7.1" height="7.2" fill="rgb(158, 164, 167)"/><rect x="41.1" y="119.0" width="7.1" height="7.2" fill="rgb(143, 140, 162)"/><rect x="48.0" y="119.0" width="7.1" height="7.2" fill="rgb(169, 160, 155)"/><rect x="54.9" y="119.0" width="7.1" height="7.2" fill="rgb(227, 227, 228)"/><rect x="61.8" y="119.0" width="7.1" height="7.2" fill="rgb(219, 218, 225)"/><rect x="68.7" y="119.0" width="7.1" height="7.2" fill="rgb(164, 155, 149)"/><rect x="75.6" y="119.0" width="7.1" height="7.2" fill="rgb(169, 161, 169)"/><rect x="82.5" y="119.0" width="7.1" height="7.2" fill="rgb(158, 158, 163)"/><rect x="89.4" y="119.0" width="7.1" height="7.2" fill="rgb(175, 180, 183)"/><rect x="96.3" y="119.0" width="7.1" height="7.2" fill="rgb(180, 180, 182)"/><rect x="103.2" y="119.0" width="7.1" height="7.2" fill="rgb(230, 230, 232)"/><rect x="110.1" y="119.0" width="7.1" height="7.2" fill="rgb(231, 229, 228)"/><rect x="117.0" y="119.0" width="7.1" height="7.2" fill="rgb(200, 204, 212)"/><rect x="123.9" y="119.0" width="7.1" height="7.2" fill="rgb(195, 194, 206)"/><rect x="130.8" y="119.0" width="7.1" height="7.2" fill="rgb(221, 217, 221)"/><rect x="137.7" y="119.0" width="7.1" height="7.2" fill="rgb(195, 195, 195)"/><rect x="144.6" y="119.0" width="7.1" height="7.2" fill="rgb(213, 213, 214)"/><rect x="151.5" y="119.0" width="7.1" height="7.2" fill="rgb(173, 165, 173)"/><rect x="158.4" y="119.0" width="7.1" height="7.2" fill="rgb(185, 185, 187)"/><rect x="165.3" y="119.0" width="7.1" height="7.2" fill="rgb(227, 227, 227)"/><rect x="172.2" y="119.0" width="7.1" height="7.2" fill="rgb(160, 166, 168)"/><rect x="179.1" y="119.0" width="7.1" height="7.2" fill="rgb(215, 215, 215)"/><rect x="186.0" y="119.0" width="7.1" height="7.2" fill="rgb(176, 168, 176)"/><rect x="192.9" y="119.0" width="7.1" height="7.2" fill="rgb(181, 181, 181)"/><rect x="199.8" y="119.0" width="7.1" height="7.2" fill="rgb(199, 197, 208)"/><rect x="206.7" y="119.0" width="7.1" height="7.2" fill="rgb(195, 189, 185)"/><rect x="213.6" y="119.0" width="7.1" height="7.2" fill="rgb(151, 148, 169)"/><rect x="220.5" y="119.0" width="7.1" height="7.2" fill="rgb(196, 200, 202)"/><rect x="227.4" y="119.0" width="7.1" height="7.2" fill="rgb(182, 180, 195)"/><rect x="234.3" y="119.0" width="5.9" height="7.2" fill="rgb(166, 166, 168)"/><rect x="0.0" y="126.0" width="7.0" height="7.2" fill="rgb(255, 255, 255)"/><rect x="6.8" y="126.0" width="7.0" height="7.2" fill="rgb(255, 255, 255)"/><rect x="13.6" y="126.0" width="7.0" height="7.2" fill="rgb(246, 246, 249)"/><rect x="20.4" y="126.0" width="7.1" height="7.2" fill="rgb(189, 189, 193)"/><rect x="27.3" y="126.0" width="7.1" height="7.2" fill="rgb(181, 179, 194)"/><rect x="34.2" y="126.0" width="7.1" height="7.2" fill="rgb(190, 188, 201)"/><rect x="41.1" y="126.0" width="7.1" height="7.2" fill="rgb(236, 234, 232)"/><rect x="48.0" y="126.0" width="7.1" height="7.2" fill="rgb(174, 180, 191)"/><rect x="54.9" y="126.0" width="7.1" height="7.2" fill="rgb(235, 234, 232)"/><rect x="61.8" y="126.0" width="7.1" height="7.2" fill="rgb(206, 202, 198)"/><rect x="68.7" y="126.0" width="7.1" height="7.2" fill="rgb(218, 218, 220)"/><rect x="75.6" y="126.0" width="7.1" height="7.2" fill="rgb(220, 222, 223)"/><rect x="82.5" y="126.0" width="7.1" height="7.2" fill="rgb(192, 197, 206)"/><rect x="89.4" y="126.0" width="7.1" height="7.2" fill="rgb(225, 222, 225)"/><rect x="96.3" y="126.0" width="7.1" height="7.2" fill="rgb(221, 224, 229)"/><rect x="103.2" y="126.0" width="7.1" height="7.2" fill="rgb(194, 199, 207)"/><rect x="110.1" y="126.0" width="7.1" height="7.2" fill="rgb(205, 205, 205)"/><rect x="117.0" y="126.0" width="7.1" height="7.2" fill="rgb(215, 213, 222)"/><rect x="123.9" y="126.0" width="7.1" height="7.2" fill="rgb(221, 221, 221)"/><rect x="130.8" y="126.0" width="7.1" height="7.2" fill="rgb(220, 220, 220)"/><rect x="137.7" y="126.0" width="7.1" height="7.2" fill="rgb(188, 188, 190)"/><rect x="144.6" y="126.0" width="7.1" height="7.2" fill="rgb(230, 230, 231)"/><rect x="151.5" y="126.0" width="7.1" height="7.2" fill="rgb(210, 214, 220)"/><rect x="158.4" y="126.0" width="7.1" height="7.2" fill="rgb(201, 199, 210)"/><rect x="165.3" y="126.0" width="7.1" height="7.2" fill="rgb(239, 239, 239)"/><rect x="172.2" y="126.0" width="7.1" height="7.2" fill="rgb(215, 214, 222)"/><rect x="179.1" y="126.0" width="7.1" height="7.2" fill="rgb(221, 221, 222)"/><rect x="186.0" y="126.0" width="7.1" height="7.2" fill="rgb(198, 193, 189)"/><rect x="192.9" y="126.0" width="7.1" height="7.2" fill="rgb(201, 201, 201)"/><rect x="199.8" y="126.0" width="7.1" height="7.2" fill="rgb(193, 192, 204)"/><rect x="206.7" y="126.0" width="7.1" height="7.2" fill="rgb(224, 221, 219)"/><rect x="213.6" y="126.0" width="7.1" height="7.2" fill="rgb(205, 210, 216)"/><rect x="220.5" y="126.0" width="7.1" height="7.2" fill="rgb(201, 205, 212)"/><rect x="227.4" y="126.0" width="7.1" height="7.2" fill="rgb(201, 196, 201)"/><rect x="234.3" y="126.0" width="5.9" height="7.2" fill="rgb(208, 212, 218)"/><rect x="0.0" y="133.0" width="7.0" height="7.2" fill="rgb(239, 239, 246)"/><rect x="6.8" y="133.0" width="7.0" height="7.2" fill="rgb(239, 239, 246)"/><rect x="13.6" y="133.0" width="7.0" height="7.2" fill="rgb(231, 231, 241)"/><rect x="20.4" y="133.0" width="7.1" height="7.2" fill="rgb(239, 239, 246)"/><rect x="27.3" y="133.0" width="7.1" height="7.2" fill="rgb(239, 239, 246)"/><rect x="34.2" y="133.0" width="7.1" height="7.2" fill="rgb(239, 239, 246)"/><rect x="41.1" y="133.0" width="7.1" height="7.2" fill="rgb(239, 239, 246)"/><rect x="48.0" y="133.0" width="7.1" height="7.2" fill="rgb(239, 239, 246)"/><rect x="54.9" y="133.0" width="7.1" height="7.2" fill="rgb(239, 239, 246)"/><rect x="61.8" y="133.0" width="7.1" height="7.2" fill="rgb(239, 239, 246)"/><rect x="68.7" y="133.0" width="7.1" height="7.2" fill="rgb(239, 239, 246)"/><rect x="75.6" y="133.0" width="7.1" height="7.2" fill="rgb(239, 239, 246)"/><rect x="82.5" y="133.0" width="7.1" height="7.2" fill="rgb(239, 239, 246)"/><rect x="89.4" y="133.0" width="7.1" height="7.2" fill="rgb(239, 239, 246)"/><rect x="96.3" y="133.0" width="7.1" height="7.2" fill="rgb(239, 239, 246)"/><rect x="103.2" y="133.0" width="7.1" height="7.2" fill="rgb(239, 239, 246)"/><rect x="110.1" y="133.0" width="7.1" height="7.2" fill="rgb(239, 239, 246)"/><rect x="117.0" y="133.0" width="7.1" height="7.2" fill="rgb(239, 239, 246)"/><rect x="123.9" y="133.0" width="7.1" height="7.2" fill="rgb(239, 239, 246)"/><rect x="130.8" y="133.0" width="7.1" height="7.2" fill="rgb(239, 239, 246)"/><rect x="137.7" y="133.0" width="7.1" height="7.2" fill="rgb(239, 239, 246)"/><rect x="144.6" y="133.0" width="7.1" height="7.2" fill="rgb(239, 239, 246)"/><rect x="151.5" y="133.0" width="7.1" height="7.2" fill="rgb(239, 239, 246)"/><rect x="158.4" y="133.0" width="7.1" height="7.2" fill="rgb(239, 239, 246)"/><rect x="165.3" y="133.0" width="7.1" height="7.2" fill="rgb(239, 239, 246)"/><rect x="172.2" y="133.0" width="7.1" height="7.2" fill="rgb(239, 239, 246)"/><rect x="179.1" y="133.0" width="7.1" height="7.2" fill="rgb(239, 239, 246)"/><rect x="186.0" y="133.0" width="7.1" height="7.2" fill="rgb(239, 239, 246)"/><rect x="192.9" y="133.0" width="7.1" height="7.2" fill="rgb(239, 239, 246)"/><rect x="199.8" y="133.0" width="7.1" height="7.2" fill="rgb(239, 239, 246)"/><rect x="206.7" y="133.0" width="7.1" height="7.2" fill="rgb(239, 239, 246)"/><rect x="213.6" y="133.0" width="7.1" height="7.2" fill="rgb(239, 239, 246)"/><rect x="220.5" y="133.0" width="7.1" height="7.2" fill="rgb(239, 239, 246)"/><rect x="227.4" y="133.0" width="7.1" height="7.2" fill="rgb(239, 239, 246)"/><rect x="234.3" y="133.0" width="5.9" height="7.2" fill="rgb(239, 239, 246)"/><rect x="0.0" y="140.0" width="7.0" height="7.2" fill="rgb(241, 241, 248)"/><rect x="6.8" y="140.0" width="7.0" height="7.2" fill="rgb(241, 241, 248)"/><rect x="13.6" y="140.0" width="7.0" height="7.2" fill="rgb(234, 234, 243)"/><rect x="20.4" y="140.0" width="7.1" height="7.2" fill="rgb(218, 220, 226)"/><rect x="27.3" y="140.0" width="7.1" height="7.2" fill="rgb(216, 213, 217)"/><rect x="34.2" y="140.0" width="7.1" height="7.2" fill="rgb(201, 200, 214)"/><rect x="41.1" y="140.0" width="7.1" height="7.2" fill="rgb(210, 210, 218)"/><rect x="48.0" y="140.0" width="7.1" height="7.2" fill="rgb(206, 202, 205)"/><rect x="54.9" y="140.0" width="7.1" height="7.2" fill="rgb(219, 220, 227)"/><rect x="61.8" y="140.0" width="7.1" height="7.2" fill="rgb(227, 227, 233)"/><rect x="68.7" y="140.0" width="7.1" height="7.2" fill="rgb(183, 183, 189)"/><rect x="75.6" y="140.0" width="7.1" height="7.2" fill="rgb(202, 201, 215)"/><rect x="82.5" y="140.0" width="7.1" height="7.2" fill="rgb(193, 188, 189)"/><rect x="89.4" y="140.0" width="7.1" height="7.2" fill="rgb(210, 212, 219)"/><rect x="96.3" y="140.0" width="7.1" height="7.2" fill="rgb(214, 213, 225)"/><rect x="103.2" y="140.0" width="7.1" height="7.2" fill="rgb(216, 218, 228)"/><rect x="110.1" y="140.0" width="7.1" height="7.2" fill="rgb(213, 212, 224)"/><rect x="117.0" y="140.0" width="7.1" height="7.2" fill="rgb(202, 202, 207)"/><rect x="123.9" y="140.0" width="7.1" height="7.2" fill="rgb(219, 218, 229)"/><rect x="130.8" y="140.0" width="7.1" height="7.2" fill="rgb(230, 230, 237)"/><rect x="137.7" y="140.0" width="7.1" height="7.2" fill="rgb(218, 218, 226)"/><rect x="144.6" y="140.0" width="7.1" height="7.2" fill="rgb(211, 207, 216)"/><rect x="151.5" y="140.0" width="7.1" height="7.2" fill="rgb(208, 208, 214)"/><rect x="158.4" y="140.0" width="7.1" height="7.2" fill="rgb(223, 221, 229)"/><rect x="165.3" y="140.0" width="7.1" height="7.2" fill="rgb(210, 207, 216)"/><rect x="172.2" y="140.0" width="7.1" height="7.2" fill="rgb(208, 204, 213)"/><rect x="179.1" y="140.0" width="7.1" height="7.2" fill="rgb(206, 205, 218)"/><rect x="186.0" y="140.0" width="7.1" height="7.2" fill="rgb(217, 219, 225)"/><rect x="192.9" y="140.0" width="7.1" height="7.2" fill="rgb(219, 217, 225)"/><rect x="199.8" y="140.0" width="7.1" height="7.2" fill="rgb(218, 216, 220)"/><rect x="206.7" y="140.0" width="7.1" height="7.2" fill="rgb(217, 217, 224)"/><rect x="213.6" y="140.0" width="7.1" height="7.2" fill="rgb(206, 202, 205)"/><rect x="220.5" y="140.0" width="7.1" height="7.2" fill="rgb(209, 209, 217)"/><rect x="227.4" y="140.0" width="7.1" height="7.2" fill="rgb(219, 221, 230)"/><rect x="234.3" y="140.0" width="5.9" height="7.2" fill="rgb(209, 206, 209)"/><rect x="0.0" y="147.0" width="7.0" height="7.2" fill="rgb(241, 241, 248)"/><rect x="6.8" y="147.0" width="7.0" height="7.2" fill="rgb(241, 241, 248)"/><rect x="13.6" y="147.0" width="7.0" height="7.2" fill="rgb(234, 234, 243)"/><rect x="20.4" y="147.0" width="7.1" height="7.2" fill="rgb(166, 164, 184)"/><rect x="27.3" y="147.0" width="7.1" height="7.2" fill="rgb(153, 153, 159)"/><rect x="34.2" y="147.0" width="7.1" height="7.2" fill="rgb(150, 150, 158)"/><rect x="41.1" y="147.0" width="7.1" height="7.2" fill="rgb(176, 180, 186)"/><rect x="48.0" y="147.0" width="7.1" height="7.2" fill="rgb(142, 139, 163)"/><rect x="54.9" y="147.0" width="7.1" height="7.2" fill="rgb(150, 158, 174)"/><rect x="61.8" y="147.0" width="7.1" height="7.2" fill="rgb(213, 213, 221)"/><rect x="68.7" y="147.0" width="7.1" height="7.2" fill="rgb(158, 158, 167)"/><rect x="75.6" y="147.0" width="7.1" height="7.2" fill="rgb(135, 124, 137)"/><rect x="82.5" y="147.0" width="7.1" height="7.2" fill="rgb(153, 153, 156)"/><rect x="89.4" y="147.0" width="7.1" height="7.2" fill="rgb(156, 147, 159)"/><rect x="96.3" y="147.0" width="7.1" height="7.2" fill="rgb(141, 138, 163)"/><rect x="103.2" y="147.0" width="7.1" height="7.2" fill="rgb(173, 173, 179)"/><rect x="110.1" y="147.0" width="7.1" height="7.2" fill="rgb(145, 154, 171)"/><rect x="117.0" y="147.0" width="7.1" height="7.2" fill="rgb(147, 147, 153)"/><rect x="123.9" y="147.0" width="7.1" height="7.2" fill="rgb(181, 175, 174)"/><rect x="130.8" y="147.0" width="7.1" height="7.2" fill="rgb(216, 213, 221)"/><rect x="137.7" y="147.0" width="7.1" height="7.2" fill="rgb(161, 153, 150)"/><rect x="144.6" y="147.0" width="7.1" height="7.2" fill="rgb(179, 177, 195)"/><rect x="151.5" y="147.0" width="7.1" height="7.2" fill="rgb(133, 133, 136)"/><rect x="158.4" y="147.0" width="7.1" height="7.2" fill="rgb(185, 185, 191)"/><rect x="165.3" y="147.0" width="7.1" height="7.2" fill="rgb(168, 168, 172)"/><rect x="172.2" y="147.0" width="7.1" height="7.2" fill="rgb(173, 177, 183)"/><rect x="179.1" y="147.0" width="7.1" height="7.2" fill="rgb(206, 209, 220)"/><rect x="186.0" y="147.0" width="7.1" height="7.2" fill="rgb(201, 201, 206)"/><rect x="192.9" y="147.0" width="7.1" height="7.2" fill="rgb(158, 163, 169)"/><rect x="199.8" y="147.0" width="7.1" height="7.2" fill="rgb(211, 213, 219)"/><rect x="206.7" y="147.0" width="7.1" height="7.2" fill="rgb(175, 175, 183)"/><rect x="213.6" y="147.0" width="7.1" height="7.2" fill="rgb(174, 174, 178)"/><rect x="220.5" y="147.0" width="7.1" height="7.2" fill="rgb(157, 149, 146)"/><rect x="227.4" y="147.0" width="7.1" height="7.2" fill="rgb(165, 165, 171)"/><rect x="234.3" y="147.0" width="5.9" height="7.2" fill="rgb(163, 155, 166)"/><rect x="0.0" y="154.0" width="7.0" height="7.2" fill="rgb(241, 241, 248)"/><rect x="6.8" y="154.0" width="7.0" height="7.2" fill="rgb(241, 241, 248)"/><rect x="13.6" y="154.0" width="7.0" height="7.2" fill="rgb(234, 234, 243)"/><rect x="20.4" y="154.0" width="7.1" height="7.2" fill="rgb(227, 228, 237)"/><rect x="27.3" y="154.0" width="7.1" height="7.2" fill="rgb(231, 231, 238)"/><rect x="34.2" y="154.0" width="7.1" height="7.2" fill="rgb(227, 228, 236)"/><rect x="41.1" y="154.0" width="7.1" height="7.2" fill="rgb(228, 229, 238)"/><rect x="48.0" y="154.0" width="7.1" height="7.2" fill="rgb(227, 226, 236)"/><rect x="54.9" y="154.0" width="7.1" height="7.2" fill="rgb(228, 228, 235)"/><rect x="61.8" y="154.0" width="7.1" height="7.2" fill="rgb(237, 237, 244)"/><rect x="68.7" y="154.0" width="7.1" height="7.2" fill="rgb(226, 226, 233)"/><rect x="75.6" y="154.0" width="7.1" height="7.2" fill="rgb(219, 219, 225)"/><rect x="82.5" y="154.0" width="7.1" height="7.2" fill="rgb(225, 227, 233)"/><rect x="89.4" y="154.0" width="7.1" height="7.2" fill="rgb(231, 232, 240)"/><rect x="96.3" y="154.0" width="7.1" height="7.2" fill="rgb(238, 238, 245)"/><rect x="103.2" y="154.0" width="7.1" height="7.2" fill="rgb(228, 229, 235)"/><rect x="110.1" y="154.0" width="7.1" height="7.2" fill="rgb(228, 228, 235)"/><rect x="117.0" y="154.0" width="7.1" height="7.2" fill="rgb(231, 231, 238)"/><rect x="123.9" y="154.0" width="7.1" height="7.2" fill="rgb(232, 231, 237)"/><rect x="130.8" y="154.0" width="7.1" height="7.2" fill="rgb(231, 232, 239)"/><rect x="137.7" y="154.0" width="7.1" height="7.2" fill="rgb(231, 231, 240)"/><rect x="144.6" y="154.0" width="7.1" height="7.2" fill="rgb(228, 228, 234)"/><rect x="151.5" y="154.0" width="7.1" height="7.2" fill="rgb(230, 230, 236)"/><rect x="158.4" y="154.0" width="7.1" height="7.2" fill="rgb(230, 231, 238)"/><rect x="165.3" y="154.0" width="7.1" height="7.2" fill="rgb(226, 227, 234)"/><rect x="172.2" y="154.0" width="7.1" height="7.2" fill="rgb(230, 231, 239)"/><rect x="179.1" y="154.0" width="7.1" height="7.2" fill="rgb(232, 232, 238)"/><rect x="186.0" y="154.0" width="7.1" height="7.2" fill="rgb(229, 229, 236)"/><rect x="192.9" y="154.0" width="7.1" height="7.2" fill="rgb(237, 236, 244)"/><rect x="199.8" y="154.0" width="7.1" height="7.2" fill="rgb(237, 237, 244)"/><rect x="206.7" y="154.0" width="7.1" height="7.2" fill="rgb(227, 227, 233)"/><rect x="213.6" y="154.0" width="7.1" height="7.2" fill="rgb(230, 229, 236)"/><rect x="220.5" y="154.0" width="7.1" height="7.2" fill="rgb(231, 232, 240)"/><rect x="227.4" y="154.0" width="7.1" height="7.2" fill="rgb(226, 226, 233)"/><rect x="234.3" y="154.0" width="5.9" height="7.2" fill="rgb(228, 226, 232)"/><rect x="0.0" y="161.0" width="7.0" height="7.2" fill="rgb(239, 239, 246)"/><rect x="6.8" y="161.0" width="7.0" height="7.2" fill="rgb(239, 239, 246)"/><rect x="13.6" y="161.0" width="7.0" height="7.2" fill="rgb(231, 231, 241)"/><rect x="20.4" y="161.0" width="7.1" height="7.2" fill="rgb(239, 239, 246)"/><rect x="27.3" y="161.0" width="7.1" height="7.2" fill="rgb(239, 239, 246)"/><rect x="34.2" y="161.0" width="7.1" height="7.2" fill="rgb(239, 239, 246)"/><rect x="41.1" y="161.0" width="7.1" height="7.2" fill="rgb(239, 239, 246)"/><rect x="48.0" y="161.0" width="7.1" height="7.2" fill="rgb(239, 239, 246)"/><rect x="54.9" y="161.0" width="7.1" height="7.2" fill="rgb(239, 239, 246)"/><rect x="61.8" y="161.0" width="7.1" height="7.2" fill="rgb(239, 239, 246)"/><rect x="68.7" y="161.0" width="7.1" height="7.2" fill="rgb(239, 239, 246)"/><rect x="75.6" y="161.0" width="7.1" height="7.2" fill="rgb(239, 239, 246)"/><rect x="82.5" y="161.0" width="7.1" height="7.2" fill="rgb(239, 239, 246)"/><rect x="89.4" y="161.0" width="7.1" height="7.2" fill="rgb(239, 239, 246)"/><rect x="96.3" y="161.0" width="7.1" height="7.2" fill="rgb(239, 239, 246)"/><rect x="103.2" y="161.0" width="7.1" height="7.2" fill="rgb(239, 239, 246)"/><rect x="110.1" y="161.0" width="7.1" height="7.2" fill="rgb(239, 239, 246)"/><rect x="117.0" y="161.0" width="7.1" height="7.2" fill="rgb(239, 239, 246)"/><rect x="123.9" y="161.0" width="7.1" height="7.2" fill="rgb(239, 239, 246)"/><rect x="130.8" y="161.0" width="7.1" height="7.2" fill="rgb(239, 239, 246)"/><rect x="137.7" y="161.0" width="7.1" height="7.2" fill="rgb(239, 239, 246)"/><rect x="144.6" y="161.0" width="7.1" height="7.2" fill="rgb(239, 239, 246)"/><rect x="151.5" y="161.0" width="7.1" height="7.2" fill="rgb(239, 239, 246)"/><rect x="158.4" y="161.0" width="7.1" height="7.2" fill="rgb(239, 239, 246)"/><rect x="165.3" y="161.0" width="7.1" height="7.2" fill="rgb(239, 239, 246)"/><rect x="172.2" y="161.0" width="7.1" height="7.2" fill="rgb(239, 239, 246)"/><rect x="179.1" y="161.0" width="7.1" height="7.2" fill="rgb(239, 239, 246)"/><rect x="186.0" y="161.0" width="7.1" height="7.2" fill="rgb(239, 239, 246)"/><rect x="192.9" y="161.0" width="7.1" height="7.2" fill="rgb(239, 239, 246)"/><rect x="199.8" y="161.0" width="7.1" height="7.2" fill="rgb(239, 239, 246)"/><rect x="206.7" y="161.0" width="7.1" height="7.2" fill="rgb(239, 239, 246)"/><rect x="213.6" y="161.0" width="7.1" height="7.2" fill="rgb(239, 239, 246)"/><rect x="220.5" y="161.0" width="7.1" height="7.2" fill="rgb(239, 239, 246)"/><rect x="227.4" y="161.0" width="7.1" height="7.2" fill="rgb(239, 239, 246)"/><rect x="234.3" y="161.0" width="5.9" height="7.2" fill="rgb(239, 239, 246)"/><rect x="0.0" y="168.0" width="7.0" height="7.2" fill="rgb(255, 255, 255)"/><rect x="6.8" y="168.0" width="7.0" height="7.2" fill="rgb(255, 255, 255)"/><rect x="13.6" y="168.0" width="7.0" height="7.2" fill="rgb(246, 246, 249)"/><rect x="20.4" y="168.0" width="7.1" height="7.2" fill="rgb(163, 170, 183)"/><rect x="27.3" y="168.0" width="7.1" height="7.2" fill="rgb(174, 179, 182)"/><rect x="34.2" y="168.0" width="7.1" height="7.2" fill="rgb(178, 178, 178)"/><rect x="41.1" y="168.0" width="7.1" height="7.2" fill="rgb(232, 232, 232)"/><rect x="48.0" y="168.0" width="7.1" height="7.2" fill="rgb(183, 183, 187)"/><rect x="54.9" y="168.0" width="7.1" height="7.2" fill="rgb(180, 180, 183)"/><rect x="61.8" y="168.0" width="7.1" height="7.2" fill="rgb(221, 224, 228)"/><rect x="68.7" y="168.0" width="7.1" height="7.2" fill="rgb(232, 230, 232)"/><rect x="75.6" y="168.0" width="7.1" height="7.2" fill="rgb(191, 185, 191)"/><rect x="82.5" y="168.0" width="7.1" height="7.2" fill="rgb(194, 188, 184)"/><rect x="89.4" y="168.0" width="7.1" height="7.2" fill="rgb(204, 208, 215)"/><rect x="96.3" y="168.0" width="7.1" height="7.2" fill="rgb(187, 181, 177)"/><rect x="103.2" y="168.0" width="7.1" height="7.2" fill="rgb(170, 170, 174)"/><rect x="110.1" y="168.0" width="7.1" height="7.2" fill="rgb(197, 202, 210)"/><rect x="117.0" y="168.0" width="7.1" height="7.2" fill="rgb(203, 203, 205)"/><rect x="123.9" y="168.0" width="7.1" height="7.2" fill="rgb(189, 188, 201)"/><rect x="130.8" y="168.0" width="7.1" height="7.2" fill="rgb(186, 186, 190)"/><rect x="137.7" y="168.0" width="7.1" height="7.2" fill="rgb(183, 176, 172)"/><rect x="144.6" y="168.0" width="7.1" height="7.2" fill="rgb(180, 180, 181)"/><rect x="151.5" y="168.0" width="7.1" height="7.2" fill="rgb(217, 217, 217)"/><rect x="158.4" y="168.0" width="7.1" height="7.2" fill="rgb(235, 235, 236)"/><rect x="165.3" y="168.0" width="7.1" height="7.2" fill="rgb(189, 194, 203)"/><rect x="172.2" y="168.0" width="7.1" height="7.2" fill="rgb(173, 166, 160)"/><rect x="179.1" y="168.0" width="7.1" height="7.2" fill="rgb(189, 189, 192)"/><rect x="186.0" y="168.0" width="7.1" height="7.2" fill="rgb(124, 124, 128)"/><rect x="192.9" y="168.0" width="7.1" height="7.2" fill="rgb(158, 166, 179)"/><rect x="199.8" y="168.0" width="7.1" height="7.2" fill="rgb(166, 158, 166)"/><rect x="206.7" y="168.0" width="7.1" height="7.2" fill="rgb(112, 112, 115)"/><rect x="213.6" y="168.0" width="7.1" height="7.2" fill="rgb(222, 224, 225)"/><rect x="220.5" y="168.0" width="7.1" height="7.2" fill="rgb(137, 144, 148)"/><rect x="227.4" y="168.0" width="7.1" height="7.2" fill="rgb(162, 162, 167)"/><rect x="234.3" y="168.0" width="5.9" height="7.2" fill="rgb(177, 177, 177)"/><rect x="0.0" y="175.0" width="7.0" height="7.2" fill="rgb(255, 255, 255)"/><rect x="6.8" y="175.0" width="7.0" height="7.2" fill="rgb(255, 255, 255)"/><rect x="13.6" y="175.0" width="7.0" height="7.2" fill="rgb(246, 246, 249)"/><rect x="20.4" y="175.0" width="7.1" height="7.2" fill="rgb(201, 200, 211)"/><rect x="27.3" y="175.0" width="7.1" height="7.2" fill="rgb(184, 182, 196)"/><rect x="34.2" y="175.0" width="7.1" height="7.2" fill="rgb(198, 198, 201)"/><rect x="41.1" y="175.0" width="7.1" height="7.2" fill="rgb(198, 193, 189)"/><rect x="48.0" y="175.0" width="7.1" height="7.2" fill="rgb(199, 199, 202)"/><rect x="54.9" y="175.0" width="7.1" height="7.2" fill="rgb(210, 206, 203)"/><rect x="61.8" y="175.0" width="7.1" height="7.2" fill="rgb(231, 231, 232)"/><rect x="68.7" y="175.0" width="7.1" height="7.2" fill="rgb(174, 174, 176)"/><rect x="75.6" y="175.0" width="7.1" height="7.2" fill="rgb(235, 234, 238)"/><rect x="82.5" y="175.0" width="7.1" height="7.2" fill="rgb(204, 199, 204)"/><rect x="89.4" y="175.0" width="7.1" height="7.2" fill="rgb(228, 228, 228)"/><rect x="96.3" y="175.0" width="7.1" height="7.2" fill="rgb(205, 200, 205)"/><rect x="103.2" y="175.0" width="7.1" height="7.2" fill="rgb(189, 193, 195)"/><rect x="110.1" y="175.0" width="7.1" height="7.2" fill="rgb(174, 174, 174)"/><rect x="117.0" y="175.0" width="7.1" height="7.2" fill="rgb(188, 188, 189)"/><rect x="123.9" y="175.0" width="7.1" height="7.2" fill="rgb(209, 208, 217)"/><rect x="130.8" y="175.0" width="7.1" height="7.2" fill="rgb(197, 197, 197)"/><rect x="137.7" y="175.0" width="7.1" height="7.2" fill="rgb(211, 207, 204)"/><rect x="144.6" y="175.0" width="7.1" height="7.2" fill="rgb(194, 194, 195)"/><rect x="151.5" y="175.0" width="7.1" height="7.2" fill="rgb(175, 175, 177)"/><rect x="158.4" y="175.0" width="7.1" height="7.2" fill="rgb(197, 197, 200)"/><rect x="165.3" y="175.0" width="7.1" height="7.2" fill="rgb(208, 208, 211)"/><rect x="172.2" y="175.0" width="7.1" height="7.2" fill="rgb(184, 184, 186)"/><rect x="179.1" y="175.0" width="7.1" height="7.2" fill="rgb(195, 195, 195)"/><rect x="186.0" y="175.0" width="7.1" height="7.2" fill="rgb(228, 226, 224)"/><rect x="192.9" y="175.0" width="7.1" height="7.2" fill="rgb(147, 144, 165)"/><rect x="199.8" y="175.0" width="7.1" height="7.2" fill="rgb(188, 188, 191)"/><rect x="206.7" y="175.0" width="7.1" height="7.2" fill="rgb(155, 155, 158)"/><rect x="213.6" y="175.0" width="7.1" height="7.2" fill="rgb(140, 150, 165)"/><rect x="220.5" y="175.0" width="7.1" height="7.2" fill="rgb(149, 157, 172)"/><rect x="227.4" y="175.0" width="7.1" height="7.2" fill="rgb(197, 201, 202)"/><rect x="234.3" y="175.0" width="5.9" height="7.2" fill="rgb(215, 211, 215)"/><rect x="0.0" y="182.0" width="7.0" height="7.2" fill="rgb(239, 239, 246)"/><rect x="6.8" y="182.0" width="7.0" height="7.2" fill="rgb(239, 239, 246)"/><rect x="13.6" y="182.0" width="7.0" height="7.2" fill="rgb(231, 231, 241)"/><rect x="20.4" y="182.0" width="7.1" height="7.2" fill="rgb(239, 239, 246)"/><rect x="27.3" y="182.0" width="7.1" height="7.2" fill="rgb(239, 239, 246)"/><rect x="34.2" y="182.0" width="7.1" height="7.2" fill="rgb(239, 239, 246)"/><rect x="41.1" y="182.0" width="7.1" height="7.2" fill="rgb(239, 239, 246)"/><rect x="48.0" y="182.0" width="7.1" height="7.2" fill="rgb(239, 239, 246)"/><rect x="54.9" y="182.0" width="7.1" height="7.2" fill="rgb(239, 239, 246)"/><rect x="61.8" y="182.0" width="7.1" height="7.2" fill="rgb(239, 239, 246)"/><rect x="68.7" y="182.0" width="7.1" height="7.2" fill="rgb(239, 239, 246)"/><rect x="75.6" y="182.0" width="7.1" height="7.2" fill="rgb(239, 239, 246)"/><rect x="82.5" y="182.0" width="7.1" height="7.2" fill="rgb(239, 239, 246)"/><rect x="89.4" y="182.0" width="7.1" height="7.2" fill="rgb(239, 239, 246)"/><rect x="96.3" y="182.0" width="7.1" height="7.2" fill="rgb(239, 239, 246)"/><rect x="103.2" y="182.0" width="7.1" height="7.2" fill="rgb(239, 239, 246)"/><rect x="110.1" y="182.0" width="7.1" height="7.2" fill="rgb(239, 239, 246)"/><rect x="117.0" y="182.0" width="7.1" height="7.2" fill="rgb(239, 239, 246)"/><rect x="123.9" y="182.0" width="7.1" height="7.2" fill="rgb(239, 239, 246)"/><rect x="130.8" y="182.0" width="7.1" height="7.2" fill="rgb(239, 239, 246)"/><rect x="137.7" y="182.0" width="7.1" height="7.2" fill="rgb(239, 239, 246)"/><rect x="144.6" y="182.0" width="7.1" height="7.2" fill="rgb(239, 239, 246)"/><rect x="151.5" y="182.0" width="7.1" height="7.2" fill="rgb(239, 239, 246)"/><rect x="158.4" y="182.0" width="7.1" height="7.2" fill="rgb(239, 239, 246)"/><rect x="165.3" y="182.0" width="7.1" height="7.2" fill="rgb(239, 239, 246)"/><rect x="172.2" y="182.0" width="7.1" height="7.2" fill="rgb(239, 239, 246)"/><rect x="179.1" y="182.0" width="7.1" height="7.2" fill="rgb(239, 239, 246)"/><rect x="186.0" y="182.0" width="7.1" height="7.2" fill="rgb(239, 239, 246)"/><rect x="192.9" y="182.0" width="7.1" height="7.2" fill="rgb(239, 239, 246)"/><rect x="199.8" y="182.0" width="7.1" height="7.2" fill="rgb(239, 239, 246)"/><rect x="206.7" y="182.0" width="7.1" height="7.2" fill="rgb(239, 239, 246)"/><rect x="213.6" y="182.0" width="7.1" height="7.2" fill="rgb(239, 239, 246)"/><rect x="220.5" y="182.0" width="7.1" height="7.2" fill="rgb(239, 239, 246)"/><rect x="227.4" y="182.0" width="7.1" height="7.2" fill="rgb(239, 239, 246)"/><rect x="234.3" y="182.0" width="5.9" height="7.2" fill="rgb(239, 239, 246)"/><rect x="0.0" y="189.0" width="7.0" height="7.2" fill="rgb(241, 241, 248)"/><rect x="6.8" y="189.0" width="7.0" height="7.2" fill="rgb(241, 241, 248)"/><rect x="13.6" y="189.0" width="7.0" height="7.2" fill="rgb(234, 234, 243)"/><rect x="20.4" y="189.0" width="7.1" height="7.2" fill="rgb(216, 218, 224)"/><rect x="27.3" y="189.0" width="7.1" height="7.2" fill="rgb(225, 225, 235)"/><rect x="34.2" y="189.0" width="7.1" height="7.2" fill="rgb(228, 229, 236)"/><rect x="41.1" y="189.0" width="7.1" height="7.2" fill="rgb(230, 230, 237)"/><rect x="48.0" y="189.0" width="7.1" height="7.2" fill="rgb(225, 225, 232)"/><rect x="54.9" y="189.0" width="7.1" height="7.2" fill="rgb(211, 211, 219)"/><rect x="61.8" y="189.0" width="7.1" height="7.2" fill="rgb(232, 232, 238)"/><rect x="68.7" y="189.0" width="7.1" height="7.2" fill="rgb(210, 212, 223)"/><rect x="75.6" y="189.0" width="7.1" height="7.2" fill="rgb(221, 219, 228)"/><rect x="82.5" y="189.0" width="7.1" height="7.2" fill="rgb(215, 212, 216)"/><rect x="89.4" y="189.0" width="7.1" height="7.2" fill="rgb(208, 208, 215)"/><rect x="96.3" y="189.0" width="7.1" height="7.2" fill="rgb(224, 224, 231)"/><rect x="103.2" y="189.0" width="7.1" height="7.2" fill="rgb(213, 216, 226)"/><rect x="110.1" y="189.0" width="7.1" height="7.2" fill="rgb(219, 217, 221)"/><rect x="117.0" y="189.0" width="7.1" height="7.2" fill="rgb(219, 217, 225)"/><rect x="123.9" y="189.0" width="7.1" height="7.2" fill="rgb(210, 210, 217)"/><rect x="130.8" y="189.0" width="7.1" height="7.2" fill="rgb(221, 221, 231)"/><rect x="137.7" y="189.0" width="7.1" height="7.2" fill="rgb(218, 217, 228)"/><rect x="144.6" y="189.0" width="7.1" height="7.2" fill="rgb(217, 217, 224)"/><rect x="151.5" y="189.0" width="7.1" height="7.2" fill="rgb(226, 224, 229)"/><rect x="158.4" y="189.0" width="7.1" height="7.2" fill="rgb(229, 228, 233)"/><rect x="165.3" y="189.0" width="7.1" height="7.2" fill="rgb(222, 222, 228)"/><rect x="172.2" y="189.0" width="7.1" height="7.2" fill="rgb(224, 224, 231)"/><rect x="179.1" y="189.0" width="7.1" height="7.2" fill="rgb(234, 234, 241)"/><rect x="186.0" y="189.0" width="7.1" height="7.2" fill="rgb(220, 219, 230)"/><rect x="192.9" y="189.0" width="7.1" height="7.2" fill="rgb(223, 225, 234)"/><rect x="199.8" y="189.0" width="7.1" height="7.2" fill="rgb(223, 224, 231)"/><rect x="206.7" y="189.0" width="7.1" height="7.2" fill="rgb(215, 214, 226)"/><rect x="213.6" y="189.0" width="7.1" height="7.2" fill="rgb(220, 220, 226)"/><rect x="220.5" y="189.0" width="7.1" height="7.2" fill="rgb(224, 224, 231)"/><rect x="227.4" y="189.0" width="7.1" height="7.2" fill="rgb(213, 213, 220)"/><rect x="234.3" y="189.0" width="5.9" height="7.2" fill="rgb(223, 222, 227)"/><rect x="0.0" y="196.0" width="7.0" height="7.2" fill="rgb(241, 241, 248)"/><rect x="6.8" y="196.0" width="7.0" height="7.2" fill="rgb(241, 241, 248)"/><rect x="13.6" y="196.0" width="7.0" height="7.2" fill="rgb(234, 234, 243)"/><rect x="20.4" y="196.0" width="7.1" height="7.2" fill="rgb(178, 178, 182)"/><rect x="27.3" y="196.0" width="7.1" height="7.2" fill="rgb(189, 183, 193)"/><rect x="34.2" y="196.0" width="7.1" height="7.2" fill="rgb(158, 149, 147)"/><rect x="41.1" y="196.0" width="7.1" height="7.2" fill="rgb(156, 153, 175)"/><rect x="48.0" y="196.0" width="7.1" height="7.2" fill="rgb(144, 153, 170)"/><rect x="54.9" y="196.0" width="7.1" height="7.2" fill="rgb(140, 140, 146)"/><rect x="61.8" y="196.0" width="7.1" height="7.2" fill="rgb(169, 161, 160)"/><rect x="68.7" y="196.0" width="7.1" height="7.2" fill="rgb(202, 202, 208)"/><rect x="75.6" y="196.0" width="7.1" height="7.2" fill="rgb(121, 108, 122)"/><rect x="82.5" y="196.0" width="7.1" height="7.2" fill="rgb(149, 155, 161)"/><rect x="89.4" y="196.0" width="7.1" height="7.2" fill="rgb(149, 149, 155)"/><rect x="96.3" y="196.0" width="7.1" height="7.2" fill="rgb(177, 177, 184)"/><rect x="103.2" y="196.0" width="7.1" height="7.2" fill="rgb(183, 181, 198)"/><rect x="110.1" y="196.0" width="7.1" height="7.2" fill="rgb(194, 197, 203)"/><rect x="117.0" y="196.0" width="7.1" height="7.2" fill="rgb(166, 166, 174)"/><rect x="123.9" y="196.0" width="7.1" height="7.2" fill="rgb(183, 188, 201)"/><rect x="130.8" y="196.0" width="7.1" height="7.2" fill="rgb(158, 164, 169)"/><rect x="137.7" y="196.0" width="7.1" height="7.2" fill="rgb(170, 170, 178)"/><rect x="144.6" y="196.0" width="7.1" height="7.2" fill="rgb(208, 208, 215)"/><rect x="151.5" y="196.0" width="7.1" height="7.2" fill="rgb(196, 192, 193)"/><rect x="158.4" y="196.0" width="7.1" height="7.2" fill="rgb(161, 158, 179)"/><rect x="165.3" y="196.0" width="7.1" height="7.2" fill="rgb(174, 174, 178)"/><rect x="172.2" y="196.0" width="7.1" height="7.2" fill="rgb(186, 186, 193)"/><rect x="179.1" y="196.0" width="7.1" height="7.2" fill="rgb(179, 177, 195)"/><rect x="186.0" y="196.0" width="7.1" height="7.2" fill="rgb(154, 154, 160)"/><rect x="192.9" y="196.0" width="7.1" height="7.2" fill="rgb(171, 177, 191)"/><rect x="199.8" y="196.0" width="7.1" height="7.2" fill="rgb(195, 190, 192)"/><rect x="206.7" y="196.0" width="7.1" height="7.2" fill="rgb(150, 150, 156)"/><rect x="213.6" y="196.0" width="7.1" height="7.2" fill="rgb(183, 188, 201)"/><rect x="220.5" y="196.0" width="7.1" height="7.2" fill="rgb(172, 165, 164)"/><rect x="227.4" y="196.0" width="7.1" height="7.2" fill="rgb(185, 183, 200)"/><rect x="234.3" y="196.0" width="5.9" height="7.2" fill="rgb(191, 186, 196)"/><rect x="0.0" y="203.0" width="7.0" height="7.2" fill="rgb(241, 241, 248)"/><rect x="6.8" y="203.0" width="7.0" height="7.2" fill="rgb(241, 241, 248)"/><rect x="13.6" y="203.0" width="7.0" height="7.2" fill="rgb(234, 234, 243)"/><rect x="20.4" y="203.0" width="7.1" height="7.2" fill="rgb(219, 217, 225)"/><rect x="27.3" y="203.0" width="7.1" height="7.2" fill="rgb(218, 218, 225)"/><rect x="34.2" y="203.0" width="7.1" height="7.2" fill="rgb(223, 224, 230)"/><rect x="41.1" y="203.0" width="7.1" height="7.2" fill="rgb(217, 219, 225)"/><rect x="48.0" y="203.0" width="7.1" height="7.2" fill="rgb(216, 217, 224)"/><rect x="54.9" y="203.0" width="7.1" height="7.2" fill="rgb(219, 219, 226)"/><rect x="61.8" y="203.0" width="7.1" height="7.2" fill="rgb(234, 235, 241)"/><rect x="68.7" y="203.0" width="7.1" height="7.2" fill="rgb(207, 207, 215)"/><rect x="75.6" y="203.0" width="7.1" height="7.2" fill="rgb(210, 213, 223)"/><rect x="82.5" y="203.0" width="7.1" height="7.2" fill="rgb(211, 211, 218)"/><rect x="89.4" y="203.0" width="7.1" height="7.2" fill="rgb(206, 202, 211)"/><rect x="96.3" y="203.0" width="7.1" height="7.2" fill="rgb(211, 211, 218)"/><rect x="103.2" y="203.0" width="7.1" height="7.2" fill="rgb(224, 224, 231)"/><rect x="110.1" y="203.0" width="7.1" height="7.2" fill="rgb(210, 210, 215)"/><rect x="117.0" y="203.0" width="7.1" height="7.2" fill="rgb(214, 214, 221)"/><rect x="123.9" y="203.0" width="7.1" height="7.2" fill="rgb(217, 217, 225)"/><rect x="130.8" y="203.0" width="7.1" height="7.2" fill="rgb(234, 234, 241)"/><rect x="137.7" y="203.0" width="7.1" height="7.2" fill="rgb(226, 225, 230)"/><rect x="144.6" y="203.0" width="7.1" height="7.2" fill="rgb(224, 224, 230)"/><rect x="151.5" y="203.0" width="7.1" height="7.2" fill="rgb(222, 220, 224)"/><rect x="158.4" y="203.0" width="7.1" height="7.2" fill="rgb(210, 210, 215)"/><rect x="165.3" y="203.0" width="7.1" height="7.2" fill="rgb(221, 221, 227)"/><rect x="172.2" y="203.0" width="7.1" height="7.2" fill="rgb(211, 211, 217)"/><rect x="179.1" y="203.0" width="7.1" height="7.2" fill="rgb(231, 231, 240)"/><rect x="186.0" y="203.0" width="7.1" height="7.2" fill="rgb(221, 222, 229)"/><rect x="192.9" y="203.0" width="7.1" height="7.2" fill="rgb(216, 216, 223)"/><rect x="199.8" y="203.0" width="7.1" height="7.2" fill="rgb(221, 221, 231)"/><rect x="206.7" y="203.0" width="7.1" height="7.2" fill="rgb(215, 212, 221)"/><rect x="213.6" y="203.0" width="7.1" height="7.2" fill="rgb(225, 226, 233)"/><rect x="220.5" y="203.0" width="7.1" height="7.2" fill="rgb(219, 221, 227)"/><rect x="227.4" y="203.0" width="7.1" height="7.2" fill="rgb(210, 210, 216)"/><rect x="234.3" y="203.0" width="5.9" height="7.2" fill="rgb(211, 211, 219)"/><rect x="0.0" y="210.0" width="7.0" height="7.2" fill="rgb(239, 239, 246)"/><rect x="6.8" y="210.0" width="7.0" height="7.2" fill="rgb(239, 239, 246)"/><rect x="13.6" y="210.0" width="7.0" height="7.2" fill="rgb(231, 231, 241)"/><rect x="20.4" y="210.0" width="7.1" height="7.2" fill="rgb(239, 239, 246)"/><rect x="27.3" y="210.0" width="7.1" height="7.2" fill="rgb(239, 239, 246)"/><rect x="34.2" y="210.0" width="7.1" height="7.2" fill="rgb(239, 239, 246)"/><rect x="41.1" y="210.0" width="7.1" height="7.2" fill="rgb(239, 239, 246)"/><rect x="48.0" y="210.0" width="7.1" height="7.2" fill="rgb(239, 239, 246)"/><rect x="54.9" y="210.0" width="7.1" height="7.2" fill="rgb(239, 239, 246)"/><rect x="61.8" y="210.0" width="7.1" height="7.2" fill="rgb(239, 239, 246)"/><rect x="68.7" y="210.0" width="7.1" height="7.2" fill="rgb(239, 239, 246)"/><rect x="75.6" y="210.0" width="7.1" height="7.2" fill="rgb(239, 239, 246)"/><rect x="82.5" y="210.0" width="7.1" height="7.2" fill="rgb(239, 239, 246)"/><rect x="89.4" y="210.0" width="7.1" height="7.2" fill="rgb(239, 239, 246)"/><rect x="96.3" y="210.0" width="7.1" height="7.2" fill="rgb(239, 239, 246)"/><rect x="103.2" y="210.0" width="7.1" height="7.2" fill="rgb(239, 239, 246)"/><rect x="110.1" y="210.0" width="7.1" height="7.2" fill="rgb(239, 239, 246)"/><rect x="117.0" y="210.0" width="7.1" height="7.2" fill="rgb(239, 239, 246)"/><rect x="123.9" y="210.0" width="7.1" height="7.2" fill="rgb(239, 239, 246)"/><rect x="130.8" y="210.0" width="7.1" height="7.2" fill="rgb(239, 239, 246)"/><rect x="137.7" y="210.0" width="7.1" height="7.2" fill="rgb(239, 239, 246)"/><rect x="144.6" y="210.0" width="7.1" height="7.2" fill="rgb(239, 239, 246)"/><rect x="151.5" y="210.0" width="7.1" height="7.2" fill="rgb(239, 239, 246)"/><rect x="158.4" y="210.0" width="7.1" height="7.2" fill="rgb(239, 239, 246)"/><rect x="165.3" y="210.0" width="7.1" height="7.2" fill="rgb(239, 239, 246)"/><rect x="172.2" y="210.0" width="7.1" height="7.2" fill="rgb(239, 239, 246)"/><rect x="179.1" y="210.0" width="7.1" height="7.2" fill="rgb(239, 239, 246)"/><rect x="186.0" y="210.0" width="7.1" height="7.2" fill="rgb(239, 239, 246)"/><rect x="192.9" y="210.0" width="7.1" height="7.2" fill="rgb(239, 239, 246)"/><rect x="199.8" y="210.0" width="7.1" height="7.2" fill="rgb(239, 239, 246)"/><rect x="206.7" y="210.0" width="7.1" height="7.2" fill="rgb(239, 239, 246)"/><rect x="213.6" y="210.0" width="7.1" height="7.2" fill="rgb(239, 239, 246)"/><rect x="220.5" y="210.0" width="7.1" height="7.2" fill="rgb(239, 239, 246)"/><rect x="227.4" y="210.0" width="7.1" height="7.2" fill="rgb(239, 239, 246)"/><rect x="234.3" y="210.0" width="5.9" height="7.2" fill="rgb(239, 239, 246)"/><rect x="0.0" y="217.0" width="7.0" height="7.2" fill="rgb(255, 255, 255)"/><rect x="6.8" y="217.0" width="7.0" height="7.2" fill="rgb(255, 255, 255)"/><rect x="13.6" y="217.0" width="7.0" height="7.2" fill="rgb(246, 246, 249)"/><rect x="20.4" y="217.0" width="7.1" height="7.2" fill="rgb(191, 196, 205)"/><rect x="27.3" y="217.0" width="7.1" height="7.2" fill="rgb(191, 191, 195)"/><rect x="34.2" y="217.0" width="7.1" height="7.2" fill="rgb(193, 197, 199)"/><rect x="41.1" y="217.0" width="7.1" height="7.2" fill="rgb(179, 177, 192)"/><rect x="48.0" y="217.0" width="7.1" height="7.2" fill="rgb(206, 202, 199)"/><rect x="54.9" y="217.0" width="7.1" height="7.2" fill="rgb(197, 192, 188)"/><rect x="61.8" y="217.0" width="7.1" height="7.2" fill="rgb(180, 180, 180)"/><rect x="68.7" y="217.0" width="7.1" height="7.2" fill="rgb(174, 174, 176)"/><rect x="75.6" y="217.0" width="7.1" height="7.2" fill="rgb(182, 176, 171)"/><rect x="82.5" y="217.0" width="7.1" height="7.2" fill="rgb(166, 158, 166)"/><rect x="89.4" y="217.0" width="7.1" height="7.2" fill="rgb(165, 165, 168)"/><rect x="96.3" y="217.0" width="7.1" height="7.2" fill="rgb(182, 175, 171)"/><rect x="103.2" y="217.0" width="7.1" height="7.2" fill="rgb(173, 180, 191)"/><rect x="110.1" y="217.0" width="7.1" height="7.2" fill="rgb(200, 200, 201)"/><rect x="117.0" y="217.0" width="7.1" height="7.2" fill="rgb(206, 209, 210)"/><rect x="123.9" y="217.0" width="7.1" height="7.2" fill="rgb(233, 231, 233)"/><rect x="130.8" y="217.0" width="7.1" height="7.2" fill="rgb(231, 231, 232)"/><rect x="137.7" y="217.0" width="7.1" height="7.2" fill="rgb(181, 181, 181)"/><rect x="144.6" y="217.0" width="7.1" height="7.2" fill="rgb(202, 197, 202)"/><rect x="151.5" y="217.0" width="7.1" height="7.2" fill="rgb(208, 211, 213)"/><rect x="158.4" y="217.0" width="7.1" height="7.2" fill="rgb(181, 179, 193)"/><rect x="165.3" y="217.0" width="7.1" height="7.2" fill="rgb(192, 185, 192)"/><rect x="172.2" y="217.0" width="7.1" height="7.2" fill="rgb(212, 212, 214)"/><rect x="179.1" y="217.0" width="7.1" height="7.2" fill="rgb(200, 200, 201)"/><rect x="186.0" y="217.0" width="7.1" height="7.2" fill="rgb(204, 200, 204)"/><rect x="192.9" y="217.0" width="7.1" height="7.2" fill="rgb(209, 204, 209)"/><rect x="199.8" y="217.0" width="7.1" height="7.2" fill="rgb(234, 236, 236)"/><rect x="206.7" y="217.0" width="7.1" height="7.2" fill="rgb(194, 199, 207)"/><rect x="213.6" y="217.0" width="7.1" height="7.2" fill="rgb(202, 205, 207)"/><rect x="220.5" y="217.0" width="7.1" height="7.2" fill="rgb(190, 184, 180)"/><rect x="227.4" y="217.0" width="7.1" height="7.2" fill="rgb(195, 195, 197)"/><rect x="234.3" y="217.0" width="5.9" height="7.2" fill="rgb(195, 198, 200)"/><rect x="0.0" y="224.0" width="7.0" height="7.2" fill="rgb(255, 255, 255)"/><rect x="6.8" y="224.0" width="7.0" height="7.2" fill="rgb(255, 255, 255)"/><rect x="13.6" y="224.0" width="7.0" height="7.2" fill="rgb(246, 246, 249)"/><rect x="20.4" y="224.0" width="7.1" height="7.2" fill="rgb(198, 202, 210)"/><rect x="27.3" y="224.0" width="7.1" height="7.2" fill="rgb(164, 171, 184)"/><rect x="34.2" y="224.0" width="7.1" height="7.2" fill="rgb(173, 179, 191)"/><rect x="41.1" y="224.0" width="7.1" height="7.2" fill="rgb(174, 179, 181)"/><rect x="48.0" y="224.0" width="7.1" height="7.2" fill="rgb(187, 181, 187)"/><rect x="54.9" y="224.0" width="7.1" height="7.2" fill="rgb(185, 183, 197)"/><rect x="61.8" y="224.0" width="7.1" height="7.2" fill="rgb(210, 206, 204)"/><rect x="68.7" y="224.0" width="7.1" height="7.2" fill="rgb(202, 202, 205)"/><rect x="75.6" y="224.0" width="7.1" height="7.2" fill="rgb(154, 154, 159)"/><rect x="82.5" y="224.0" width="7.1" height="7.2" fill="rgb(111, 111, 118)"/><rect x="89.4" y="224.0" width="7.1" height="7.2" fill="rgb(137, 147, 163)"/><rect x="96.3" y="224.0" width="7.1" height="7.2" fill="rgb(174, 171, 188)"/><rect x="103.2" y="224.0" width="7.1" height="7.2" fill="rgb(114, 114, 114)"/><rect x="110.1" y="224.0" width="7.1" height="7.2" fill="rgb(188, 181, 177)"/><rect x="117.0" y="224.0" width="7.1" height="7.2" fill="rgb(199, 204, 211)"/><rect x="123.9" y="224.0" width="7.1" height="7.2" fill="rgb(205, 209, 216)"/><rect x="130.8" y="224.0" width="7.1" height="7.2" fill="rgb(157, 157, 159)"/><rect x="137.7" y="224.0" width="7.1" height="7.2" fill="rgb(169, 169, 173)"/><rect x="144.6" y="224.0" width="7.1" height="7.2" fill="rgb(205, 208, 210)"/><rect x="151.5" y="224.0" width="7.1" height="7.2" fill="rgb(196, 196, 196)"/><rect x="158.4" y="224.0" width="7.1" height="7.2" fill="rgb(162, 170, 182)"/><rect x="165.3" y="224.0" width="7.1" height="7.2" fill="rgb(189, 194, 203)"/><rect x="172.2" y="224.0" width="7.1" height="7.2" fill="rgb(214, 210, 214)"/><rect x="179.1" y="224.0" width="7.1" height="7.2" fill="rgb(189, 183, 189)"/><rect x="186.0" y="224.0" width="7.1" height="7.2" fill="rgb(232, 231, 236)"/><rect x="192.9" y="224.0" width="7.1" height="7.2" fill="rgb(199, 194, 190)"/><rect x="199.8" y="224.0" width="7.1" height="7.2" fill="rgb(186, 186, 188)"/><rect x="206.7" y="224.0" width="7.1" height="7.2" fill="rgb(212, 212, 213)"/><rect x="213.6" y="224.0" width="7.1" height="7.2" fill="rgb(185, 179, 185)"/><rect x="220.5" y="224.0" width="7.1" height="7.2" fill="rgb(201, 196, 201)"/><rect x="227.4" y="224.0" width="7.1" height="7.2" fill="rgb(201, 201, 203)"/><rect x="234.3" y="224.0" width="5.9" height="7.2" fill="rgb(198, 202, 210)"/><rect x="0.0" y="231.0" width="7.0" height="7.2" fill="rgb(239, 239, 246)"/><rect x="6.8" y="231.0" width="7.0" height="7.2" fill="rgb(239, 239, 246)"/><rect x="13.6" y="231.0" width="7.0" height="7.2" fill="rgb(231, 231, 241)"/><rect x="20.4" y="231.0" width="7.1" height="7.2" fill="rgb(239, 239, 246)"/><rect x="27.3" y="231.0" width="7.1" height="7.2" fill="rgb(239, 239, 246)"/><rect x="34.2" y="231.0" width="7.1" height="7.2" fill="rgb(239, 239, 246)"/><rect x="41.1" y="231.0" width="7.1" height="7.2" fill="rgb(239, 239, 246)"/><rect x="48.0" y="231.0" width="7.1" height="7.2" fill="rgb(239, 239, 246)"/><rect x="54.9" y="231.0" width="7.1" height="7.2" fill="rgb(239, 239, 246)"/><rect x="61.8" y="231.0" width="7.1" height="7.2" fill="rgb(239, 239, 246)"/><rect x="68.7" y="231.0" width="7.1" height="7.2" fill="rgb(239, 239, 246)"/><rect x="75.6" y="231.0" width="7.1" height="7.2" fill="rgb(239, 239, 246)"/><rect x="82.5" y="231.0" width="7.1" height="7.2" fill="rgb(239, 239, 246)"/><rect x="89.4" y="231.0" width="7.1" height="7.2" fill="rgb(239, 239, 246)"/><rect x="96.3" y="231.0" width="7.1" height="7.2" fill="rgb(239, 239, 246)"/><rect x="103.2" y="231.0" width="7.1" height="7.2" fill="rgb(239, 239, 246)"/><rect x="110.1" y="231.0" width="7.1" height="7.2" fill="rgb(239, 239, 246)"/><rect x="117.0" y="231.0" width="7.1" height="7.2" fill="rgb(239, 239, 246)"/><rect x="123.9" y="231.0" width="7.1" height="7.2" fill="rgb(239, 239, 246)"/><rect x="130.8" y="231.0" width="7.1" height="7.2" fill="rgb(239, 239, 246)"/><rect x="137.7" y="231.0" width="7.1" height="7.2" fill="rgb(239, 239, 246)"/><rect x="144.6" y="231.0" width="7.1" height="7.2" fill="rgb(239, 239, 246)"/><rect x="151.5" y="231.0" width="7.1" height="7.2" fill="rgb(239, 239, 246)"/><rect x="158.4" y="231.0" width="7.1" height="7.2" fill="rgb(239, 239, 246)"/><rect x="165.3" y="231.0" width="7.1" height="7.2" fill="rgb(239, 239, 246)"/><rect x="172.2" y="231.0" width="7.1" height="7.2" fill="rgb(239, 239, 246)"/><rect x="179.1" y="231.0" width="7.1" height="7.2" fill="rgb(239, 239, 246)"/><rect x="186.0" y="231.0" width="7.1" height="7.2" fill="rgb(239, 239, 246)"/><rect x="192.9" y="231.0" width="7.1" height="7.2" fill="rgb(239, 239, 246)"/><rect x="199.8" y="231.0" width="7.1" height="7.2" fill="rgb(239, 239, 246)"/><rect x="206.7" y="231.0" width="7.1" height="7.2" fill="rgb(239, 239, 246)"/><rect x="213.6" y="231.0" width="7.1" height="7.2" fill="rgb(239, 239, 246)"/><rect x="220.5" y="231.0" width="7.1" height="7.2" fill="rgb(239, 239, 246)"/><rect x="227.4" y="231.0" width="7.1" height="7.2" fill="rgb(239, 239, 246)"/><rect x="234.3" y="231.0" width="5.9" height="7.2" fill="rgb(239, 239, 246)"/><rect x="0.0" y="238.0" width="7.0" height="7.2" fill="rgb(241, 241, 248)"/><rect x="6.8" y="238.0" width="7.0" height="7.2" fill="rgb(241, 241, 248)"/><rect x="13.6" y="238.0" width="7.0" height="7.2" fill="rgb(234, 234, 243)"/><rect x="20.4" y="238.0" width="7.1" height="7.2" fill="rgb(235, 235, 241)"/><rect x="27.3" y="238.0" width="7.1" height="7.2" fill="rgb(232, 231, 239)"/><rect x="34.2" y="238.0" width="7.1" height="7.2" fill="rgb(234, 233, 240)"/><rect x="41.1" y="238.0" width="7.1" height="7.2" fill="rgb(231, 232, 240)"/><rect x="48.0" y="238.0" width="7.1" height="7.2" fill="rgb(232, 232, 240)"/><rect x="54.9" y="238.0" width="7.1" height="7.2" fill="rgb(238, 238, 245)"/><rect x="61.8" y="238.0" width="7.1" height="7.2" fill="rgb(237, 237, 244)"/><rect x="68.7" y="238.0" width="7.1" height="7.2" fill="rgb(232, 231, 237)"/><rect x="75.6" y="238.0" width="7.1" height="7.2" fill="rgb(228, 226, 232)"/><rect x="82.5" y="238.0" width="7.1" height="7.2" fill="rgb(230, 230, 239)"/><rect x="89.4" y="238.0" width="7.1" height="7.2" fill="rgb(233, 233, 240)"/><rect x="96.3" y="238.0" width="7.1" height="7.2" fill="rgb(233, 233, 241)"/><rect x="103.2" y="238.0" width="7.1" height="7.2" fill="rgb(233, 233, 241)"/><rect x="110.1" y="238.0" width="7.1" height="7.2" fill="rgb(230, 229, 234)"/><rect x="117.0" y="238.0" width="7.1" height="7.2" fill="rgb(229, 229, 236)"/><rect x="123.9" y="238.0" width="7.1" height="7.2" fill="rgb(232, 232, 240)"/><rect x="130.8" y="238.0" width="7.1" height="7.2" fill="rgb(237, 236, 243)"/><rect x="137.7" y="238.0" width="7.1" height="7.2" fill="rgb(231, 232, 240)"/><rect x="144.6" y="238.0" width="7.1" height="7.2" fill="rgb(235, 235, 242)"/><rect x="151.5" y="238.0" width="7.1" height="7.2" fill="rgb(234, 233, 239)"/><rect x="158.4" y="238.0" width="7.1" height="7.2" fill="rgb(230, 231, 239)"/><rect x="165.3" y="238.0" width="7.1" height="7.2" fill="rgb(233, 232, 241)"/><rect x="172.2" y="238.0" width="7.1" height="7.2" fill="rgb(234, 235, 242)"/><rect x="179.1" y="238.0" width="7.1" height="7.2" fill="rgb(233, 233, 239)"/><rect x="186.0" y="238.0" width="7.1" height="7.2" fill="rgb(233, 233, 240)"/><rect x="192.9" y="238.0" width="7.1" height="7.2" fill="rgb(232, 232, 238)"/><rect x="199.8" y="238.0" width="7.1" height="7.2" fill="rgb(228, 228, 235)"/><rect x="206.7" y="238.0" width="7.1" height="7.2" fill="rgb(230, 229, 234)"/><rect x="213.6" y="238.0" width="7.1" height="7.2" fill="rgb(231, 232, 238)"/><rect x="220.5" y="238.0" width="7.1" height="7.2" fill="rgb(236, 237, 244)"/><rect x="227.4" y="238.0" width="7.1" height="7.2" fill="rgb(232, 232, 239)"/><rect x="234.3" y="238.0" width="5.9" height="7.2" fill="rgb(230, 230, 237)"/><rect x="0.0" y="245.0" width="7.0" height="7.2" fill="rgb(241, 241, 248)"/><rect x="6.8" y="245.0" width="7.0" height="7.2" fill="rgb(241, 241, 248)"/><rect x="13.6" y="245.0" width="7.0" height="7.2" fill="rgb(234, 234, 243)"/><rect x="20.4" y="245.0" width="7.1" height="7.2" fill="rgb(182, 182, 186)"/><rect x="27.3" y="245.0" width="7.1" height="7.2" fill="rgb(207, 206, 219)"/><rect x="34.2" y="245.0" width="7.1" height="7.2" fill="rgb(151, 151, 160)"/><rect x="41.1" y="245.0" width="7.1" height="7.2" fill="rgb(179, 179, 184)"/><rect x="48.0" y="245.0" width="7.1" height="7.2" fill="rgb(153, 153, 156)"/><rect x="54.9" y="245.0" width="7.1" height="7.2" fill="rgb(163, 161, 181)"/><rect x="61.8" y="245.0" width="7.1" height="7.2" fill="rgb(136, 136, 139)"/><rect x="68.7" y="245.0" width="7.1" height="7.2" fill="rgb(150, 150, 158)"/><rect x="75.6" y="245.0" width="7.1" height="7.2" fill="rgb(91, 91, 92)"/><rect x="82.5" y="245.0" width="7.1" height="7.2" fill="rgb(87, 87, 97)"/><rect x="89.4" y="245.0" width="7.1" height="7.2" fill="rgb(141, 141, 150)"/><rect x="96.3" y="245.0" width="7.1" height="7.2" fill="rgb(159, 165, 171)"/><rect x="103.2" y="245.0" width="7.1" height="7.2" fill="rgb(154, 144, 156)"/><rect x="110.1" y="245.0" width="7.1" height="7.2" fill="rgb(178, 176, 194)"/><rect x="117.0" y="245.0" width="7.1" height="7.2" fill="rgb(179, 172, 183)"/><rect x="123.9" y="245.0" width="7.1" height="7.2" fill="rgb(155, 155, 161)"/><rect x="130.8" y="245.0" width="7.1" height="7.2" fill="rgb(171, 168, 188)"/><rect x="137.7" y="245.0" width="7.1" height="7.2" fill="rgb(174, 167, 167)"/><rect x="144.6" y="245.0" width="7.1" height="7.2" fill="rgb(178, 178, 183)"/><rect x="151.5" y="245.0" width="7.1" height="7.2" fill="rgb(165, 162, 183)"/><rect x="158.4" y="245.0" width="7.1" height="7.2" fill="rgb(177, 177, 185)"/><rect x="165.3" y="245.0" width="7.1" height="7.2" fill="rgb(179, 184, 198)"/><rect x="172.2" y="245.0" width="7.1" height="7.2" fill="rgb(165, 157, 156)"/><rect x="179.1" y="245.0" width="7.1" height="7.2" fill="rgb(213, 213, 220)"/><rect x="186.0" y="245.0" width="7.1" height="7.2" fill="rgb(177, 177, 184)"/><rect x="192.9" y="245.0" width="7.1" height="7.2" fill="rgb(181, 181, 185)"/><rect x="199.8" y="245.0" width="7.1" height="7.2" fill="rgb(176, 173, 192)"/><rect x="206.7" y="245.0" width="7.1" height="7.2" fill="rgb(164, 156, 168)"/><rect x="213.6" y="245.0" width="7.1" height="7.2" fill="rgb(169, 162, 160)"/><rect x="220.5" y="245.0" width="7.1" height="7.2" fill="rgb(161, 153, 164)"/><rect x="227.4" y="245.0" width="7.1" height="7.2" fill="rgb(188, 188, 192)"/><rect x="234.3" y="245.0" width="5.9" height="7.2" fill="rgb(183, 183, 191)"/><rect x="0.0" y="252.0" width="7.0" height="7.2" fill="rgb(241, 241, 248)"/><rect x="6.8" y="252.0" width="7.0" height="7.2" fill="rgb(241, 241, 248)"/><rect x="13.6" y="252.0" width="7.0" height="7.2" fill="rgb(234, 234, 243)"/><rect x="20.4" y="252.0" width="7.1" height="7.2" fill="rgb(217, 216, 228)"/><rect x="27.3" y="252.0" width="7.1" height="7.2" fill="rgb(214, 217, 227)"/><rect x="34.2" y="252.0" width="7.1" height="7.2" fill="rgb(215, 216, 223)"/><rect x="41.1" y="252.0" width="7.1" height="7.2" fill="rgb(217, 217, 224)"/><rect x="48.0" y="252.0" width="7.1" height="7.2" fill="rgb(214, 214, 221)"/><rect x="54.9" y="252.0" width="7.1" height="7.2" fill="rgb(215, 215, 221)"/><rect x="61.8" y="252.0" width="7.1" height="7.2" fill="rgb(213, 209, 218)"/><rect x="68.7" y="252.0" width="7.1" height="7.2" fill="rgb(184, 188, 194)"/><rect x="75.6" y="252.0" width="7.1" height="7.2" fill="rgb(181, 181, 186)"/><rect x="82.5" y="252.0" width="7.1" height="7.2" fill="rgb(204, 204, 212)"/><rect x="89.4" y="252.0" width="7.1" height="7.2" fill="rgb(215, 213, 217)"/><rect x="96.3" y="252.0" width="7.1" height="7.2" fill="rgb(219, 217, 222)"/><rect x="103.2" y="252.0" width="7.1" height="7.2" fill="rgb(199, 199, 204)"/><rect x="110.1" y="252.0" width="7.1" height="7.2" fill="rgb(208, 205, 208)"/><rect x="117.0" y="252.0" width="7.1" height="7.2" fill="rgb(211, 210, 222)"/><rect x="123.9" y="252.0" width="7.1" height="7.2" fill="rgb(203, 206, 212)"/><rect x="130.8" y="252.0" width="7.1" height="7.2" fill="rgb(216, 216, 223)"/><rect x="137.7" y="252.0" width="7.1" height="7.2" fill="rgb(204, 200, 209)"/><rect x="144.6" y="252.0" width="7.1" height="7.2" fill="rgb(205, 205, 212)"/><rect x="151.5" y="252.0" width="7.1" height="7.2" fill="rgb(203, 203, 208)"/><rect x="158.4" y="252.0" width="7.1" height="7.2" fill="rgb(207, 204, 207)"/><rect x="165.3" y="252.0" width="7.1" height="7.2" fill="rgb(200, 200, 206)"/><rect x="172.2" y="252.0" width="7.1" height="7.2" fill="rgb(195, 195, 203)"/><rect x="179.1" y="252.0" width="7.1" height="7.2" fill="rgb(226, 225, 235)"/><rect x="186.0" y="252.0" width="7.1" height="7.2" fill="rgb(219, 217, 225)"/><rect x="192.9" y="252.0" width="7.1" height="7.2" fill="rgb(204, 204, 211)"/><rect x="199.8" y="252.0" width="7.1" height="7.2" fill="rgb(232, 233, 240)"/><rect x="206.7" y="252.0" width="7.1" height="7.2" fill="rgb(203, 199, 202)"/><rect x="213.6" y="252.0" width="7.1" height="7.2" fill="rgb(218, 218, 224)"/><rect x="220.5" y="252.0" width="7.1" height="7.2" fill="rgb(209, 211, 218)"/><rect x="227.4" y="252.0" width="7.1" height="7.2" fill="rgb(210, 212, 219)"/><rect x="234.3" y="252.0" width="5.9" height="7.2" fill="rgb(201, 197, 200)"/><rect x="0.0" y="259.0" width="7.0" height="7.2" fill="rgb(239, 239, 246)"/><rect x="6.8" y="259.0" width="7.0" height="7.2" fill="rgb(239, 239, 246)"/><rect x="13.6" y="259.0" width="7.0" height="7.2" fill="rgb(231, 231, 241)"/><rect x="20.4" y="259.0" width="7.1" height="7.2" fill="rgb(239, 239, 246)"/><rect x="27.3" y="259.0" width="7.1" height="7.2" fill="rgb(239, 239, 246)"/><rect x="34.2" y="259.0" width="7.1" height="7.2" fill="rgb(239, 239, 246)"/><rect x="41.1" y="259.0" width="7.1" height="7.2" fill="rgb(239, 239, 246)"/><rect x="48.0" y="259.0" width="7.1" height="7.2" fill="rgb(239, 239, 246)"/><rect x="54.9" y="259.0" width="7.1" height="7.2" fill="rgb(239, 239, 246)"/><rect x="61.8" y="259.0" width="7.1" height="7.2" fill="rgb(239, 239, 246)"/><rect x="68.7" y="259.0" width="7.1" height="7.2" fill="rgb(239, 239, 246)"/><rect x="75.6" y="259.0" width="7.1" height="7.2" fill="rgb(239, 239, 246)"/><rect x="82.5" y="259.0" width="7.1" height="7.2" fill="rgb(239, 239, 246)"/><rect x="89.4" y="259.0" width="7.1" height="7.2" fill="rgb(239, 239, 246)"/><rect x="96.3" y="259.0" width="7.1" height="7.2" fill="rgb(239, 239, 246)"/><rect x="103.2" y="259.0" width="7.1" height="7.2" fill="rgb(239, 239, 246)"/><rect x="110.1" y="259.0" width="7.1" height="7.2" fill="rgb(239, 239, 246)"/><rect x="117.0" y="259.0" width="7.1" height="7.2" fill="rgb(239, 239, 246)"/><rect x="123.9" y="259.0" width="7.1" height="7.2" fill="rgb(239, 239, 246)"/><rect x="130.8" y="259.0" width="7.1" height="7.2" fill="rgb(239, 239, 246)"/><rect x="137.7" y="259.0" width="7.1" height="7.2" fill="rgb(239, 239, 246)"/><rect x="144.6" y="259.0" width="7.1" height="7.2" fill="rgb(239, 239, 246)"/><rect x="151.5" y="259.0" width="7.1" height="7.2" fill="rgb(239, 239, 246)"/><rect x="158.4" y="259.0" width="7.1" height="7.2" fill="rgb(239, 239, 246)"/><rect x="165.3" y="259.0" width="7.1" height="7.2" fill="rgb(239, 239, 246)"/><rect x="172.2" y="259.0" width="7.1" height="7.2" fill="rgb(239, 239, 246)"/><rect x="179.1" y="259.0" width="7.1" height="7.2" fill="rgb(239, 239, 246)"/><rect x="186.0" y="259.0" width="7.1" height="7.2" fill="rgb(239, 239, 246)"/><rect x="192.9" y="259.0" width="7.1" height="7.2" fill="rgb(239, 239, 246)"/><rect x="199.8" y="259.0" width="7.1" height="7.2" fill="rgb(239, 239, 246)"/><rect x="206.7" y="259.0" width="7.1" height="7.2" fill="rgb(239, 239, 246)"/><rect x="213.6" y="259.0" width="7.1" height="7.2" fill="rgb(239, 239, 246)"/><rect x="220.5" y="259.0" width="7.1" height="7.2" fill="rgb(239, 239, 246)"/><rect x="227.4" y="259.0" width="7.1" height="7.2" fill="rgb(239, 239, 246)"/><rect x="234.3" y="259.0" width="5.9" height="7.2" fill="rgb(239, 239, 246)"/><rect x="0.0" y="266.0" width="7.0" height="7.2" fill="rgb(255, 255, 255)"/><rect x="6.8" y="266.0" width="7.0" height="7.2" fill="rgb(255, 255, 255)"/><rect x="13.6" y="266.0" width="7.0" height="7.2" fill="rgb(246, 246, 249)"/><rect x="20.4" y="266.0" width="7.1" height="7.2" fill="rgb(232, 234, 237)"/><rect x="27.3" y="266.0" width="7.1" height="7.2" fill="rgb(210, 212, 214)"/><rect x="34.2" y="266.0" width="7.1" height="7.2" fill="rgb(203, 198, 203)"/><rect x="41.1" y="266.0" width="7.1" height="7.2" fill="rgb(220, 216, 214)"/><rect x="48.0" y="266.0" width="7.1" height="7.2" fill="rgb(193, 193, 196)"/><rect x="54.9" y="266.0" width="7.1" height="7.2" fill="rgb(197, 197, 198)"/><rect x="61.8" y="266.0" width="7.1" height="7.2" fill="rgb(211, 214, 215)"/><rect x="68.7" y="266.0" width="7.1" height="7.2" fill="rgb(208, 207, 216)"/><rect x="75.6" y="266.0" width="7.1" height="7.2" fill="rgb(197, 202, 210)"/><rect x="82.5" y="266.0" width="7.1" height="7.2" fill="rgb(185, 183, 197)"/><rect x="89.4" y="266.0" width="7.1" height="7.2" fill="rgb(174, 174, 174)"/><rect x="96.3" y="266.0" width="7.1" height="7.2" fill="rgb(199, 199, 199)"/><rect x="103.2" y="266.0" width="7.1" height="7.2" fill="rgb(213, 213, 215)"/><rect x="110.1" y="266.0" width="7.1" height="7.2" fill="rgb(200, 204, 212)"/><rect x="117.0" y="266.0" width="7.1" height="7.2" fill="rgb(196, 201, 209)"/><rect x="123.9" y="266.0" width="7.1" height="7.2" fill="rgb(217, 217, 218)"/><rect x="130.8" y="266.0" width="7.1" height="7.2" fill="rgb(203, 208, 215)"/><rect x="137.7" y="266.0" width="7.1" height="7.2" fill="rgb(192, 192, 194)"/><rect x="144.6" y="266.0" width="7.1" height="7.2" fill="rgb(201, 196, 192)"/><rect x="151.5" y="266.0" width="7.1" height="7.2" fill="rgb(194, 194, 195)"/><rect x="158.4" y="266.0" width="7.1" height="7.2" fill="rgb(236, 236, 237)"/><rect x="165.3" y="266.0" width="7.1" height="7.2" fill="rgb(222, 222, 224)"/><rect x="172.2" y="266.0" width="7.1" height="7.2" fill="rgb(211, 210, 219)"/><rect x="179.1" y="266.0" width="7.1" height="7.2" fill="rgb(216, 212, 210)"/><rect x="186.0" y="266.0" width="7.1" height="7.2" fill="rgb(208, 207, 216)"/><rect x="192.9" y="266.0" width="7.1" height="7.2" fill="rgb(222, 224, 225)"/><rect x="199.8" y="266.0" width="7.1" height="7.2" fill="rgb(204, 207, 208)"/><rect x="206.7" y="266.0" width="7.1" height="7.2" fill="rgb(194, 194, 197)"/><rect x="213.6" y="266.0" width="7.1" height="7.2" fill="rgb(212, 215, 216)"/><rect x="220.5" y="266.0" width="7.1" height="7.2" fill="rgb(235, 237, 237)"/><rect x="227.4" y="266.0" width="7.1" height="7.2" fill="rgb(224, 226, 227)"/><rect x="234.3" y="266.0" width="5.9" height="7.2" fill="rgb(223, 226, 230)"/><rect x="0.0" y="273.0" width="7.0" height="7.2" fill="rgb(255, 255, 255)"/><rect x="6.8" y="273.0" width="7.0" height="7.2" fill="rgb(255, 255, 255)"/><rect x="13.6" y="273.0" width="7.0" height="7.2" fill="rgb(246, 246, 249)"/><rect x="20.4" y="273.0" width="7.1" height="7.2" fill="rgb(188, 186, 200)"/><rect x="27.3" y="273.0" width="7.1" height="7.2" fill="rgb(194, 194, 195)"/><rect x="34.2" y="273.0" width="7.1" height="7.2" fill="rgb(228, 228, 229)"/><rect x="41.1" y="273.0" width="7.1" height="7.2" fill="rgb(195, 200, 208)"/><rect x="48.0" y="273.0" width="7.1" height="7.2" fill="rgb(179, 171, 167)"/><rect x="54.9" y="273.0" width="7.1" height="7.2" fill="rgb(167, 159, 167)"/><rect x="61.8" y="273.0" width="7.1" height="7.2" fill="rgb(165, 165, 165)"/><rect x="68.7" y="273.0" width="7.1" height="7.2" fill="rgb(194, 194, 196)"/><rect x="75.6" y="273.0" width="7.1" height="7.2" fill="rgb(146, 135, 128)"/><rect x="82.5" y="273.0" width="7.1" height="7.2" fill="rgb(190, 190, 193)"/><rect x="89.4" y="273.0" width="7.1" height="7.2" fill="rgb(135, 124, 117)"/><rect x="96.3" y="273.0" width="7.1" height="7.2" fill="rgb(167, 158, 167)"/><rect x="103.2" y="273.0" width="7.1" height="7.2" fill="rgb(170, 170, 172)"/><rect x="110.1" y="273.0" width="7.1" height="7.2" fill="rgb(178, 184, 195)"/><rect x="117.0" y="273.0" width="7.1" height="7.2" fill="rgb(144, 144, 144)"/><rect x="123.9" y="273.0" width="7.1" height="7.2" fill="rgb(183, 183, 187)"/><rect x="130.8" y="273.0" width="7.1" height="7.2" fill="rgb(174, 174, 176)"/><rect x="137.7" y="273.0" width="7.1" height="7.2" fill="rgb(205, 208, 210)"/><rect x="144.6" y="273.0" width="7.1" height="7.2" fill="rgb(194, 197, 199)"/><rect x="151.5" y="273.0" width="7.1" height="7.2" fill="rgb(157, 157, 162)"/><rect x="158.4" y="273.0" width="7.1" height="7.2" fill="rgb(193, 187, 183)"/><rect x="165.3" y="273.0" width="7.1" height="7.2" fill="rgb(176, 176, 176)"/><rect x="172.2" y="273.0" width="7.1" height="7.2" fill="rgb(215, 212, 209)"/><rect x="179.1" y="273.0" width="7.1" height="7.2" fill="rgb(148, 157, 171)"/><rect x="186.0" y="273.0" width="7.1" height="7.2" fill="rgb(178, 184, 195)"/><rect x="192.9" y="273.0" width="7.1" height="7.2" fill="rgb(154, 151, 171)"/><rect x="199.8" y="273.0" width="7.1" height="7.2" fill="rgb(182, 187, 197)"/><rect x="206.7" y="273.0" width="7.1" height="7.2" fill="rgb(179, 183, 186)"/><rect x="213.6" y="273.0" width="7.1" height="7.2" fill="rgb(159, 165, 168)"/><rect x="220.5" y="273.0" width="7.1" height="7.2" fill="rgb(202, 206, 207)"/><rect x="227.4" y="273.0" width="7.1" height="7.2" fill="rgb(159, 165, 168)"/><rect x="234.3" y="273.0" width="5.9" height="7.2" fill="rgb(158, 164, 167)"/><rect x="0.0" y="280.0" width="7.0" height="7.2" fill="rgb(239, 239, 246)"/><rect x="6.8" y="280.0" width="7.0" height="7.2" fill="rgb(239, 239, 246)"/><rect x="13.6" y="280.0" width="7.0" height="7.2" fill="rgb(231, 231, 241)"/><rect x="20.4" y="280.0" width="7.1" height="7.2" fill="rgb(239, 239, 246)"/><rect x="27.3" y="280.0" width="7.1" height="7.2" fill="rgb(239, 239, 246)"/><rect x="34.2" y="280.0" width="7.1" height="7.2" fill="rgb(239, 239, 246)"/><rect x="41.1" y="280.0" width="7.1" height="7.2" fill="rgb(239, 239, 246)"/><rect x="48.0" y="280.0" width="7.1" height="7.2" fill="rgb(239, 239, 246)"/><rect x="54.9" y="280.0" width="7.1" height="7.2" fill="rgb(239, 239, 246)"/><rect x="61.8" y="280.0" width="7.1" height="7.2" fill="rgb(239, 239, 246)"/><rect x="68.7" y="280.0" width="7.1" height="7.2" fill="rgb(239, 239, 246)"/><rect x="75.6" y="280.0" width="7.1" height="7.2" fill="rgb(239, 239, 246)"/><rect x="82.5" y="280.0" width="7.1" height="7.2" fill="rgb(239, 239, 246)"/><rect x="89.4" y="280.0" width="7.1" height="7.2" fill="rgb(239, 239, 246)"/><rect x="96.3" y="280.0" width="7.1" height="7.2" fill="rgb(239, 239, 246)"/><rect x="103.2" y="280.0" width="7.1" height="7.2" fill="rgb(239, 239, 246)"/><rect x="110.1" y="280.0" width="7.1" height="7.2" fill="rgb(239, 239, 246)"/><rect x="117.0" y="280.0" width="7.1" height="7.2" fill="rgb(239, 239, 246)"/><rect x="123.9" y="280.0" width="7.1" height="7.2" fill="rgb(239, 239, 246)"/><rect x="130.8" y="280.0" width="7.1" height="7.2" fill="rgb(239, 239, 246)"/><rect x="137.7" y="280.0" width="7.1" height="7.2" fill="rgb(239, 239, 246)"/><rect x="144.6" y="280.0" width="7.1" height="7.2" fill="rgb(239, 239, 246)"/><rect x="151.5" y="280.0" width="7.1" height="7.2" fill="rgb(239, 239, 246)"/><rect x="158.4" y="280.0" width="7.1" height="7.2" fill="rgb(239, 239, 246)"/><rect x="165.3" y="280.0" width="7.1" height="7.2" fill="rgb(239, 239, 246)"/><rect x="172.2" y="280.0" width="7.1" height="7.2" fill="rgb(239, 239, 246)"/><rect x="179.1" y="280.0" width="7.1" height="7.2" fill="rgb(239, 239, 246)"/><rect x="186.0" y="280.0" width="7.1" height="7.2" fill="rgb(239, 239, 246)"/><rect x="192.9" y="280.0" width="7.1" height="7.2" fill="rgb(239, 239, 246)"/><rect x="199.8" y="280.0" width="7.1" height="7.2" fill="rgb(239, 239, 246)"/><rect x="206.7" y="280.0" width="7.1" height="7.2" fill="rgb(239, 239, 246)"/><rect x="213.6" y="280.0" width="7.1" height="7.2" fill="rgb(239, 239, 246)"/><rect x="220.5" y="280.0" width="7.1" height="7.2" fill="rgb(239, 239, 246)"/><rect x="227.4" y="280.0" width="7.1" height="7.2" fill="rgb(239, 239, 246)"/><rect x="234.3" y="280.0" width="5.9" height="7.2" fill="rgb(239, 239, 246)"/><rect x="0.0" y="287.0" width="7.0" height="7.2" fill="rgb(241, 241, 248)"/><rect x="6.8" y="287.0" width="7.0" height="7.2" fill="rgb(241, 241, 248)"/><rect x="13.6" y="287.0" width="7.0" height="7.2" fill="rgb(234, 234, 243)"/><rect x="20.4" y="287.0" width="7.1" height="7.2" fill="rgb(241, 241, 248)"/><rect x="27.3" y="287.0" width="7.1" height="7.2" fill="rgb(241, 241, 248)"/><rect x="34.2" y="287.0" width="7.1" height="7.2" fill="rgb(241, 241, 248)"/><rect x="41.1" y="287.0" width="7.1" height="7.2" fill="rgb(241, 241, 248)"/><rect x="48.0" y="287.0" width="7.1" height="7.2" fill="rgb(241, 241, 248)"/><rect x="54.9" y="287.0" width="7.1" height="7.2" fill="rgb(241, 241, 248)"/><rect x="61.8" y="287.0" width="7.1" height="7.2" fill="rgb(241, 241, 248)"/><rect x="68.7" y="287.0" width="7.1" height="7.2" fill="rgb(241, 241, 248)"/><rect x="75.6" y="287.0" width="7.1" height="7.2" fill="rgb(241, 241, 248)"/><rect x="82.5" y="287.0" width="7.1" height="7.2" fill="rgb(241, 241, 248)"/><rect x="89.4" y="287.0" width="7.1" height="7.2" fill="rgb(241, 241, 248)"/><rect x="96.3" y="287.0" width="7.1" height="7.2" fill="rgb(241, 241, 248)"/><rect x="103.2" y="287.0" width="7.1" height="7.2" fill="rgb(241, 241, 248)"/><rect x="110.1" y="287.0" width="7.1" height="7.2" fill="rgb(241, 241, 248)"/><rect x="117.0" y="287.0" width="7.1" height="7.2" fill="rgb(241, 241, 248)"/><rect x="123.9" y="287.0" width="7.1" height="7.2" fill="rgb(241, 241, 248)"/><rect x="130.8" y="287.0" width="7.1" height="7.2" fill="rgb(241, 241, 248)"/><rect x="137.7" y="287.0" width="7.1" height="7.2" fill="rgb(241, 241, 248)"/><rect x="144.6" y="287.0" width="7.1" height="7.2" fill="rgb(241, 241, 248)"/><rect x="151.5" y="287.0" width="7.1" height="7.2" fill="rgb(241, 241, 248)"/><rect x="158.4" y="287.0" width="7.1" height="7.2" fill="rgb(241, 241, 248)"/><rect x="165.3" y="287.0" width="7.1" height="7.2" fill="rgb(241, 241, 248)"/><rect x="172.2" y="287.0" width="7.1" height="7.2" fill="rgb(241, 241, 248)"/><rect x="179.1" y="287.0" width="7.1" height="7.2" fill="rgb(241, 241, 248)"/><rect x="186.0" y="287.0" width="7.1" height="7.2" fill="rgb(241, 241, 248)"/><rect x="192.9" y="287.0" width="7.1" height="7.2" fill="rgb(241, 241, 248)"/><rect x="199.8" y="287.0" width="7.1" height="7.2" fill="rgb(241, 241, 248)"/><rect x="206.7" y="287.0" width="7.1" height="7.2" fill="rgb(241, 241, 248)"/><rect x="213.6" y="287.0" width="7.1" height="7.2" fill="rgb(241, 241, 248)"/><rect x="220.5" y="287.0" width="7.1" height="7.2" fill="rgb(241, 241, 248)"/><rect x="227.4" y="287.0" width="7.1" height="7.2" fill="rgb(241, 241, 248)"/><rect x="234.3" y="287.0" width="5.9" height="7.2" fill="rgb(241, 241, 248)"/><rect x="0.0" y="294.0" width="7.0" height="7.2" fill="rgb(241, 241, 248)"/><rect x="6.8" y="294.0" width="7.0" height="7.2" fill="rgb(241, 241, 248)"/><rect x="13.6" y="294.0" width="7.0" height="7.2" fill="rgb(234, 234, 243)"/><rect x="20.4" y="294.0" width="7.1" height="7.2" fill="rgb(153, 153, 159)"/><rect x="27.3" y="294.0" width="7.1" height="7.2" fill="rgb(205, 205, 211)"/><rect x="34.2" y="294.0" width="7.1" height="7.2" fill="rgb(150, 150, 156)"/><rect x="41.1" y="294.0" width="7.1" height="7.2" fill="rgb(163, 168, 174)"/><rect x="48.0" y="294.0" width="7.1" height="7.2" fill="rgb(128, 116, 129)"/><rect x="54.9" y="294.0" width="7.1" height="7.2" fill="rgb(107, 107, 116)"/><rect x="61.8" y="294.0" width="7.1" height="7.2" fill="rgb(196, 194, 209)"/><rect x="68.7" y="294.0" width="7.1" height="7.2" fill="rgb(161, 166, 172)"/><rect x="75.6" y="294.0" width="7.1" height="7.2" fill="rgb(173, 167, 166)"/><rect x="82.5" y="294.0" width="7.1" height="7.2" fill="rgb(171, 169, 188)"/><rect x="89.4" y="294.0" width="7.1" height="7.2" fill="rgb(161, 159, 180)"/><rect x="96.3" y="294.0" width="7.1" height="7.2" fill="rgb(179, 172, 183)"/><rect x="103.2" y="294.0" width="7.1" height="7.2" fill="rgb(181, 181, 189)"/><rect x="110.1" y="294.0" width="7.1" height="7.2" fill="rgb(147, 155, 172)"/><rect x="117.0" y="294.0" width="7.1" height="7.2" fill="rgb(193, 197, 203)"/><rect x="123.9" y="294.0" width="7.1" height="7.2" fill="rgb(159, 150, 162)"/><rect x="130.8" y="294.0" width="7.1" height="7.2" fill="rgb(221, 221, 231)"/><rect x="137.7" y="294.0" width="7.1" height="7.2" fill="rgb(189, 183, 193)"/><rect x="144.6" y="294.0" width="7.1" height="7.2" fill="rgb(160, 166, 171)"/><rect x="151.5" y="294.0" width="7.1" height="7.2" fill="rgb(140, 140, 143)"/><rect x="158.4" y="294.0" width="7.1" height="7.2" fill="rgb(176, 169, 169)"/><rect x="165.3" y="294.0" width="7.1" height="7.2" fill="rgb(136, 136, 139)"/><rect x="172.2" y="294.0" width="7.1" height="7.2" fill="rgb(173, 173, 178)"/><rect x="179.1" y="294.0" width="7.1" height="7.2" fill="rgb(199, 199, 205)"/><rect x="186.0" y="294.0" width="7.1" height="7.2" fill="rgb(164, 169, 175)"/><rect x="192.9" y="294.0" width="7.1" height="7.2" fill="rgb(214, 214, 221)"/><rect x="199.8" y="294.0" width="7.1" height="7.2" fill="rgb(150, 147, 170)"/><rect x="206.7" y="294.0" width="7.1" height="7.2" fill="rgb(143, 143, 152)"/><rect x="213.6" y="294.0" width="7.1" height="7.2" fill="rgb(178, 171, 171)"/><rect x="220.5" y="294.0" width="7.1" height="7.2" fill="rgb(151, 151, 154)"/><rect x="227.4" y="294.0" width="7.1" height="7.2" fill="rgb(206, 202, 205)"/><rect x="234.3" y="294.0" width="5.9" height="7.2" fill="rgb(181, 181, 185)"/><rect x="0.0" y="301.0" width="7.0" height="7.2" fill="rgb(241, 241, 248)"/><rect x="6.8" y="301.0" width="7.0" height="7.2" fill="rgb(241, 241, 248)"/><rect x="13.6" y="301.0" width="7.0" height="7.2" fill="rgb(234, 234, 243)"/><rect x="20.4" y="301.0" width="7.1" height="7.2" fill="rgb(187, 192, 204)"/><rect x="27.3" y="301.0" width="7.1" height="7.2" fill="rgb(200, 196, 205)"/><rect x="34.2" y="301.0" width="7.1" height="7.2" fill="rgb(171, 163, 174)"/><rect x="41.1" y="301.0" width="7.1" height="7.2" fill="rgb(164, 164, 172)"/><rect x="48.0" y="301.0" width="7.1" height="7.2" fill="rgb(191, 191, 199)"/><rect x="54.9" y="301.0" width="7.1" height="7.2" fill="rgb(173, 170, 189)"/><rect x="61.8" y="301.0" width="7.1" height="7.2" fill="rgb(221, 221, 228)"/><rect x="68.7" y="301.0" width="7.1" height="7.2" fill="rgb(207, 210, 221)"/><rect x="75.6" y="301.0" width="7.1" height="7.2" fill="rgb(225, 223, 228)"/><rect x="82.5" y="301.0" width="7.1" height="7.2" fill="rgb(192, 191, 206)"/><rect x="89.4" y="301.0" width="7.1" height="7.2" fill="rgb(194, 198, 210)"/><rect x="96.3" y="301.0" width="7.1" height="7.2" fill="rgb(200, 203, 215)"/><rect x="103.2" y="301.0" width="7.1" height="7.2" fill="rgb(191, 189, 205)"/><rect x="110.1" y="301.0" width="7.1" height="7.2" fill="rgb(215, 212, 216)"/><rect x="117.0" y="301.0" width="7.1" height="7.2" fill="rgb(226, 226, 233)"/><rect x="123.9" y="301.0" width="7.1" height="7.2" fill="rgb(207, 209, 216)"/><rect x="130.8" y="301.0" width="7.1" height="7.2" fill="rgb(187, 187, 195)"/><rect x="137.7" y="301.0" width="7.1" height="7.2" fill="rgb(190, 185, 195)"/><rect x="144.6" y="301.0" width="7.1" height="7.2" fill="rgb(197, 197, 202)"/><rect x="151.5" y="301.0" width="7.1" height="7.2" fill="rgb(206, 202, 211)"/><rect x="158.4" y="301.0" width="7.1" height="7.2" fill="rgb(193, 188, 198)"/><rect x="165.3" y="301.0" width="7.1" height="7.2" fill="rgb(201, 201, 209)"/><rect x="172.2" y="301.0" width="7.1" height="7.2" fill="rgb(187, 187, 192)"/><rect x="179.1" y="301.0" width="7.1" height="7.2" fill="rgb(188, 186, 202)"/><rect x="186.0" y="301.0" width="7.1" height="7.2" fill="rgb(216, 216, 223)"/><rect x="192.9" y="301.0" width="7.1" height="7.2" fill="rgb(195, 198, 205)"/><rect x="199.8" y="301.0" width="7.1" height="7.2" fill="rgb(202, 204, 211)"/><rect x="206.7" y="301.0" width="7.1" height="7.2" fill="rgb(182, 182, 189)"/><rect x="213.6" y="301.0" width="7.1" height="7.2" fill="rgb(198, 201, 207)"/><rect x="220.5" y="301.0" width="7.1" height="7.2" fill="rgb(188, 186, 202)"/><rect x="227.4" y="301.0" width="7.1" height="7.2" fill="rgb(227, 226, 234)"/><rect x="234.3" y="301.0" width="5.9" height="7.2" fill="rgb(190, 190, 195)"/><rect x="0.0" y="308.0" width="7.0" height="7.2" fill="rgb(239, 239, 246)"/><rect x="6.8" y="308.0" width="7.0" height="7.2" fill="rgb(239, 239, 246)"/><rect x="13.6" y="308.0" width="7.0" height="7.2" fill="rgb(231, 231, 241)"/><rect x="20.4" y="308.0" width="7.1" height="7.2" fill="rgb(239, 239, 246)"/><rect x="27.3" y="308.0" width="7.1" height="7.2" fill="rgb(239, 239, 246)"/><rect x="34.2" y="308.0" width="7.1" height="7.2" fill="rgb(239, 239, 246)"/><rect x="41.1" y="308.0" width="7.1" height="7.2" fill="rgb(239, 239, 246)"/><rect x="48.0" y="308.0" width="7.1" height="7.2" fill="rgb(239, 239, 246)"/><rect x="54.9" y="308.0" width="7.1" height="7.2" fill="rgb(239, 239, 246)"/><rect x="61.8" y="308.0" width="7.1" height="7.2" fill="rgb(239, 239, 246)"/><rect x="68.7" y="308.0" width="7.1" height="7.2" fill="rgb(239, 239, 246)"/><rect x="75.6" y="308.0" width="7.1" height="7.2" fill="rgb(239, 239, 246)"/><rect x="82.5" y="308.0" width="7.1" height="7.2" fill="rgb(239, 239, 246)"/><rect x="89.4" y="308.0" width="7.1" height="7.2" fill="rgb(239, 239, 246)"/><rect x="96.3" y="308.0" width="7.1" height="7.2" fill="rgb(239, 239, 246)"/><rect x="103.2" y="308.0" width="7.1" height="7.2" fill="rgb(239, 239, 246)"/><rect x="110.1" y="308.0" width="7.1" height="7.2" fill="rgb(239, 239, 246)"/><rect x="117.0" y="308.0" width="7.1" height="7.2" fill="rgb(239, 239, 246)"/><rect x="123.9" y="308.0" width="7.1" height="7.2" fill="rgb(239, 239, 246)"/><rect x="130.8" y="308.0" width="7.1" height="7.2" fill="rgb(239, 239, 246)"/><rect x="137.7" y="308.0" width="7.1" height="7.2" fill="rgb(239, 239, 246)"/><rect x="144.6" y="308.0" width="7.1" height="7.2" fill="rgb(239, 239, 246)"/><rect x="151.5" y="308.0" width="7.1" height="7.2" fill="rgb(239, 239, 246)"/><rect x="158.4" y="308.0" width="7.1" height="7.2" fill="rgb(239, 239, 246)"/><rect x="165.3" y="308.0" width="7.1" height="7.2" fill="rgb(239, 239, 246)"/><rect x="172.2" y="308.0" width="7.1" height="7.2" fill="rgb(239, 239, 246)"/><rect x="179.1" y="308.0" width="7.1" height="7.2" fill="rgb(239, 239, 246)"/><rect x="186.0" y="308.0" width="7.1" height="7.2" fill="rgb(239, 239, 246)"/><rect x="192.9" y="308.0" width="7.1" height="7.2" fill="rgb(239, 239, 246)"/><rect x="199.8" y="308.0" width="7.1" height="7.2" fill="rgb(239, 239, 246)"/><rect x="206.7" y="308.0" width="7.1" height="7.2" fill="rgb(239, 239, 246)"/><rect x="213.6" y="308.0" width="7.1" height="7.2" fill="rgb(239, 239, 246)"/><rect x="220.5" y="308.0" width="7.1" height="7.2" fill="rgb(239, 239, 246)"/><rect x="227.4" y="308.0" width="7.1" height="7.2" fill="rgb(239, 239, 246)"/><rect x="234.3" y="308.0" width="5.9" height="7.2" fill="rgb(239, 239, 246)"/><rect x="0.0" y="315.0" width="7.0" height="7.2" fill="rgb(255, 255, 255)"/><rect x="6.8" y="315.0" width="7.0" height="7.2" fill="rgb(255, 255, 255)"/><rect x="13.6" y="315.0" width="7.0" height="7.2" fill="rgb(246, 246, 249)"/><rect x="20.4" y="315.0" width="7.1" height="7.2" fill="rgb(233, 234, 235)"/><rect x="27.3" y="315.0" width="7.1" height="7.2" fill="rgb(212, 211, 219)"/><rect x="34.2" y="315.0" width="7.1" height="7.2" fill="rgb(208, 208, 208)"/><rect x="41.1" y="315.0" width="7.1" height="7.2" fill="rgb(223, 225, 226)"/><rect x="48.0" y="315.0" width="7.1" height="7.2" fill="rgb(237, 237, 240)"/><rect x="54.9" y="315.0" width="7.1" height="7.2" fill="rgb(223, 225, 226)"/><rect x="61.8" y="315.0" width="7.1" height="7.2" fill="rgb(245, 245, 246)"/><rect x="68.7" y="315.0" width="7.1" height="7.2" fill="rgb(211, 211, 212)"/><rect x="75.6" y="315.0" width="7.1" height="7.2" fill="rgb(206, 206, 209)"/><rect x="82.5" y="315.0" width="7.1" height="7.2" fill="rgb(222, 219, 222)"/><rect x="89.4" y="315.0" width="7.1" height="7.2" fill="rgb(205, 205, 205)"/><rect x="96.3" y="315.0" width="7.1" height="7.2" fill="rgb(220, 220, 220)"/><rect x="103.2" y="315.0" width="7.1" height="7.2" fill="rgb(230, 227, 230)"/><rect x="110.1" y="315.0" width="7.1" height="7.2" fill="rgb(221, 224, 228)"/><rect x="117.0" y="315.0" width="7.1" height="7.2" fill="rgb(219, 216, 213)"/><rect x="123.9" y="315.0" width="7.1" height="7.2" fill="rgb(227, 225, 223)"/><rect x="130.8" y="315.0" width="7.1" height="7.2" fill="rgb(219, 218, 225)"/><rect x="137.7" y="315.0" width="7.1" height="7.2" fill="rgb(231, 231, 231)"/><rect x="144.6" y="315.0" width="7.1" height="7.2" fill="rgb(230, 230, 230)"/><rect x="151.5" y="315.0" width="7.1" height="7.2" fill="rgb(208, 208, 208)"/><rect x="158.4" y="315.0" width="7.1" height="7.2" fill="rgb(210, 210, 210)"/><rect x="165.3" y="315.0" width="7.1" height="7.2" fill="rgb(207, 207, 209)"/><rect x="172.2" y="315.0" width="7.1" height="7.2" fill="rgb(216, 212, 216)"/><rect x="179.1" y="315.0" width="7.1" height="7.2" fill="rgb(214, 217, 218)"/><rect x="186.0" y="315.0" width="7.1" height="7.2" fill="rgb(212, 212, 215)"/><rect x="192.9" y="315.0" width="7.1" height="7.2" fill="rgb(227, 224, 227)"/><rect x="199.8" y="315.0" width="7.1" height="7.2" fill="rgb(223, 223, 223)"/><rect x="206.7" y="315.0" width="7.1" height="7.2" fill="rgb(215, 212, 209)"/><rect x="213.6" y="315.0" width="7.1" height="7.2" fill="rgb(233, 234, 235)"/><rect x="220.5" y="315.0" width="7.1" height="7.2" fill="rgb(230, 232, 235)"/><rect x="227.4" y="315.0" width="7.1" height="7.2" fill="rgb(225, 222, 225)"/><rect x="234.3" y="315.0" width="5.9" height="7.2" fill="rgb(228, 228, 229)"/><rect x="0.0" y="322.0" width="7.0" height="7.2" fill="rgb(255, 255, 255)"/><rect x="6.8" y="322.0" width="7.0" height="7.2" fill="rgb(255, 255, 255)"/><rect x="13.6" y="322.0" width="7.0" height="7.2" fill="rgb(246, 246, 249)"/><rect x="20.4" y="322.0" width="7.1" height="7.2" fill="rgb(150, 150, 153)"/><rect x="27.3" y="322.0" width="7.1" height="7.2" fill="rgb(226, 226, 227)"/><rect x="34.2" y="322.0" width="7.1" height="7.2" fill="rgb(184, 177, 184)"/><rect x="41.1" y="322.0" width="7.1" height="7.2" fill="rgb(155, 155, 160)"/><rect x="48.0" y="322.0" width="7.1" height="7.2" fill="rgb(182, 175, 182)"/><rect x="54.9" y="322.0" width="7.1" height="7.2" fill="rgb(164, 164, 164)"/><rect x="61.8" y="322.0" width="7.1" height="7.2" fill="rgb(228, 228, 229)"/><rect x="68.7" y="322.0" width="7.1" height="7.2" fill="rgb(201, 206, 213)"/><rect x="75.6" y="322.0" width="7.1" height="7.2" fill="rgb(157, 157, 159)"/><rect x="82.5" y="322.0" width="7.1" height="7.2" fill="rgb(160, 160, 162)"/><rect x="89.4" y="322.0" width="7.1" height="7.2" fill="rgb(210, 213, 214)"/><rect x="96.3" y="322.0" width="7.1" height="7.2" fill="rgb(167, 158, 167)"/><rect x="103.2" y="322.0" width="7.1" height="7.2" fill="rgb(168, 160, 168)"/><rect x="110.1" y="322.0" width="7.1" height="7.2" fill="rgb(191, 185, 181)"/><rect x="117.0" y="322.0" width="7.1" height="7.2" fill="rgb(185, 185, 188)"/><rect x="123.9" y="322.0" width="7.1" height="7.2" fill="rgb(193, 193, 193)"/><rect x="130.8" y="322.0" width="7.1" height="7.2" fill="rgb(164, 164, 164)"/><rect x="137.7" y="322.0" width="7.1" height="7.2" fill="rgb(177, 177, 181)"/><rect x="144.6" y="322.0" width="7.1" height="7.2" fill="rgb(169, 160, 169)"/><rect x="151.5" y="322.0" width="7.1" height="7.2" fill="rgb(179, 179, 179)"/><rect x="158.4" y="322.0" width="7.1" height="7.2" fill="rgb(172, 170, 187)"/><rect x="165.3" y="322.0" width="7.1" height="7.2" fill="rgb(153, 153, 156)"/><rect x="172.2" y="322.0" width="7.1" height="7.2" fill="rgb(188, 182, 178)"/><rect x="179.1" y="322.0" width="7.1" height="7.2" fill="rgb(177, 175, 190)"/><rect x="186.0" y="322.0" width="7.1" height="7.2" fill="rgb(235, 236, 237)"/><rect x="192.9" y="322.0" width="7.1" height="7.2" fill="rgb(204, 207, 208)"/><rect x="199.8" y="322.0" width="7.1" height="7.2" fill="rgb(176, 176, 178)"/><rect x="206.7" y="322.0" width="7.1" height="7.2" fill="rgb(169, 169, 171)"/><rect x="213.6" y="322.0" width="7.1" height="7.2" fill="rgb(214, 213, 221)"/><rect x="220.5" y="322.0" width="7.1" height="7.2" fill="rgb(166, 157, 166)"/><rect x="227.4" y="322.0" width="7.1" height="7.2" fill="rgb(163, 154, 148)"/><rect x="234.3" y="322.0" width="5.9" height="7.2" fill="rgb(183, 183, 185)"/><rect x="0.0" y="329.0" width="7.0" height="7.2" fill="rgb(255, 255, 255)"/><rect x="6.8" y="329.0" width="7.0" height="7.2" fill="rgb(255, 255, 255)"/><rect x="13.6" y="329.0" width="7.0" height="7.2" fill="rgb(246, 246, 249)"/><rect x="20.4" y="329.0" width="7.1" height="7.2" fill="rgb(243, 242, 242)"/><rect x="27.3" y="329.0" width="7.1" height="7.2" fill="rgb(238, 238, 238)"/><rect x="34.2" y="329.0" width="7.1" height="7.2" fill="rgb(246, 245, 245)"/><rect x="41.1" y="329.0" width="7.1" height="7.2" fill="rgb(242, 242, 244)"/><rect x="48.0" y="329.0" width="7.1" height="7.2" fill="rgb(240, 239, 242)"/><rect x="54.9" y="329.0" width="7.1" height="7.2" fill="rgb(246, 245, 246)"/><rect x="61.8" y="329.0" width="7.1" height="7.2" fill="rgb(248, 248, 249)"/><rect x="68.7" y="329.0" width="7.1" height="7.2" fill="rgb(229, 229, 230)"/><rect x="75.6" y="329.0" width="7.1" height="7.2" fill="rgb(234, 232, 230)"/><rect x="82.5" y="329.0" width="7.1" height="7.2" fill="rgb(232, 231, 236)"/><rect x="89.4" y="329.0" width="7.1" height="7.2" fill="rgb(240, 239, 238)"/><rect x="96.3" y="329.0" width="7.1" height="7.2" fill="rgb(245, 245, 247)"/><rect x="103.2" y="329.0" width="7.1" height="7.2" fill="rgb(250, 250, 251)"/><rect x="110.1" y="329.0" width="7.1" height="7.2" fill="rgb(246, 246, 246)"/><rect x="117.0" y="329.0" width="7.1" height="7.2" fill="rgb(244, 245, 247)"/><rect x="123.9" y="329.0" width="7.1" height="7.2" fill="rgb(244, 243, 242)"/><rect x="130.8" y="329.0" width="7.1" height="7.2" fill="rgb(251, 252, 252)"/><rect x="137.7" y="329.0" width="7.1" height="7.2" fill="rgb(238, 237, 241)"/><rect x="144.6" y="329.0" width="7.1" height="7.2" fill="rgb(244, 245, 246)"/><rect x="151.5" y="329.0" width="7.1" height="7.2" fill="rgb(237, 237, 237)"/><rect x="158.4" y="329.0" width="7.1" height="7.2" fill="rgb(242, 242, 245)"/><rect x="165.3" y="329.0" width="7.1" height="7.2" fill="rgb(244, 245, 247)"/><rect x="172.2" y="329.0" width="7.1" height="7.2" fill="rgb(242, 241, 244)"/><rect x="179.1" y="329.0" width="7.1" height="7.2" fill="rgb(248, 248, 249)"/><rect x="186.0" y="329.0" width="7.1" height="7.2" fill="rgb(250, 249, 249)"/><rect x="192.9" y="329.0" width="7.1" height="7.2" fill="rgb(244, 245, 245)"/><rect x="199.8" y="329.0" width="7.1" height="7.2" fill="rgb(241, 242, 242)"/><rect x="206.7" y="329.0" width="7.1" height="7.2" fill="rgb(238, 238, 238)"/><rect x="213.6" y="329.0" width="7.1" height="7.2" fill="rgb(245, 245, 245)"/><rect x="220.5" y="329.0" width="7.1" height="7.2" fill="rgb(243, 242, 241)"/><rect x="227.4" y="329.0" width="7.1" height="7.2" fill="rgb(245, 245, 246)"/><rect x="234.3" y="329.0" width="5.9" height="7.2" fill="rgb(243, 241, 243)"/><rect x="0.0" y="336.0" width="7.0" height="7.2" fill="rgb(239, 239, 246)"/><rect x="6.8" y="336.0" width="7.0" height="7.2" fill="rgb(239, 239, 246)"/><rect x="13.6" y="336.0" width="7.0" height="7.2" fill="rgb(231, 231, 241)"/><rect x="20.4" y="336.0" width="7.1" height="7.2" fill="rgb(239, 239, 246)"/><rect x="27.3" y="336.0" width="7.1" height="7.2" fill="rgb(239, 239, 246)"/><rect x="34.2" y="336.0" width="7.1" height="7.2" fill="rgb(239, 239, 246)"/><rect x="41.1" y="336.0" width="7.1" height="7.2" fill="rgb(239, 239, 246)"/><rect x="48.0" y="336.0" width="7.1" height="7.2" fill="rgb(239, 239, 246)"/><rect x="54.9" y="336.0" width="7.1" height="7.2" fill="rgb(239, 239, 246)"/><rect x="61.8" y="336.0" width="7.1" height="7.2" fill="rgb(239, 239, 246)"/><rect x="68.7" y="336.0" width="7.1" height="7.2" fill="rgb(239, 239, 246)"/><rect x="75.6" y="336.0" width="7.1" height="7.2" fill="rgb(239, 239, 246)"/><rect x="82.5" y="336.0" width="7.1" height="7.2" fill="rgb(239, 239, 246)"/><rect x="89.4" y="336.0" width="7.1" height="7.2" fill="rgb(239, 239, 246)"/><rect x="96.3" y="336.0" width="7.1" height="7.2" fill="rgb(239, 239, 246)"/><rect x="103.2" y="336.0" width="7.1" height="7.2" fill="rgb(239, 239, 246)"/><rect x="110.1" y="336.0" width="7.1" height="7.2" fill="rgb(239, 239, 246)"/><rect x="117.0" y="336.0" width="7.1" height="7.2" fill="rgb(239, 239, 246)"/><rect x="123.9" y="336.0" width="7.1" height="7.2" fill="rgb(239, 239, 246)"/><rect x="130.8" y="336.0" width="7.1" height="7.2" fill="rgb(239, 239, 246)"/><rect x="137.7" y="336.0" width="7.1" height="7.2" fill="rgb(239, 239, 246)"/><rect x="144.6" y="336.0" width="7.1" height="7.2" fill="rgb(239, 239, 246)"/><rect x="151.5" y="336.0" width="7.1" height="7.2" fill="rgb(239, 239, 246)"/><rect x="158.4" y="336.0" width="7.1" height="7.2" fill="rgb(239, 239, 246)"/><rect x="165.3" y="336.0" width="7.1" height="7.2" fill="rgb(239, 239, 246)"/><rect x="172.2" y="336.0" width="7.1" height="7.2" fill="rgb(239, 239, 246)"/><rect x="179.1" y="336.0" width="7.1" height="7.2" fill="rgb(239, 239, 246)"/><rect x="186.0" y="336.0" width="7.1" height="7.2" fill="rgb(239, 239, 246)"/><rect x="192.9" y="336.0" width="7.1" height="7.2" fill="rgb(239, 239, 246)"/><rect x="199.8" y="336.0" width="7.1" height="7.2" fill="rgb(239, 239, 246)"/><rect x="206.7" y="336.0" width="7.1" height="7.2" fill="rgb(239, 239, 246)"/><rect x="213.6" y="336.0" width="7.1" height="7.2" fill="rgb(239, 239, 246)"/><rect x="220.5" y="336.0" width="7.1" height="7.2" fill="rgb(239, 239, 246)"/><rect x="227.4" y="336.0" width="7.1" height="7.2" fill="rgb(239, 239, 246)"/><rect x="234.3" y="336.0" width="5.9" height="7.2" fill="rgb(239, 239, 246)"/><rect x="0.0" y="343.0" width="7.0" height="7.2" fill="rgb(241, 241, 248)"/><rect x="6.8" y="343.0" width="7.0" height="7.2" fill="rgb(241, 241, 248)"/><rect x="13.6" y="343.0" width="7.0" height="7.2" fill="rgb(234, 234, 243)"/><rect x="20.4" y="343.0" width="7.1" height="7.2" fill="rgb(200, 202, 209)"/><rect x="27.3" y="343.0" width="7.1" height="7.2" fill="rgb(190, 185, 186)"/><rect x="34.2" y="343.0" width="7.1" height="7.2" fill="rgb(182, 188, 201)"/><rect x="41.1" y="343.0" width="7.1" height="7.2" fill="rgb(179, 179, 185)"/><rect x="48.0" y="343.0" width="7.1" height="7.2" fill="rgb(157, 165, 180)"/><rect x="54.9" y="343.0" width="7.1" height="7.2" fill="rgb(180, 180, 187)"/><rect x="61.8" y="343.0" width="7.1" height="7.2" fill="rgb(218, 220, 226)"/><rect x="68.7" y="343.0" width="7.1" height="7.2" fill="rgb(135, 135, 144)"/><rect x="75.6" y="343.0" width="7.1" height="7.2" fill="rgb(161, 159, 180)"/><rect x="82.5" y="343.0" width="7.1" height="7.2" fill="rgb(136, 126, 120)"/><rect x="89.4" y="343.0" width="7.1" height="7.2" fill="rgb(193, 192, 207)"/><rect x="96.3" y="343.0" width="7.1" height="7.2" fill="rgb(171, 171, 180)"/><rect x="103.2" y="343.0" width="7.1" height="7.2" fill="rgb(170, 168, 187)"/><rect x="110.1" y="343.0" width="7.1" height="7.2" fill="rgb(198, 194, 196)"/><rect x="117.0" y="343.0" width="7.1" height="7.2" fill="rgb(175, 175, 183)"/><rect x="123.9" y="343.0" width="7.1" height="7.2" fill="rgb(184, 189, 202)"/><rect x="130.8" y="343.0" width="7.1" height="7.2" fill="rgb(211, 214, 224)"/><rect x="137.7" y="343.0" width="7.1" height="7.2" fill="rgb(174, 172, 191)"/><rect x="144.6" y="343.0" width="7.1" height="7.2" fill="rgb(155, 155, 164)"/><rect x="151.5" y="343.0" width="7.1" height="7.2" fill="rgb(210, 212, 218)"/><rect x="158.4" y="343.0" width="7.1" height="7.2" fill="rgb(172, 165, 164)"/><rect x="165.3" y="343.0" width="7.1" height="7.2" fill="rgb(164, 164, 170)"/><rect x="172.2" y="343.0" width="7.1" height="7.2" fill="rgb(165, 170, 176)"/><rect x="179.1" y="343.0" width="7.1" height="7.2" fill="rgb(204, 200, 209)"/><rect x="186.0" y="343.0" width="7.1" height="7.2" fill="rgb(198, 194, 196)"/><rect x="192.9" y="343.0" width="7.1" height="7.2" fill="rgb(196, 191, 193)"/><rect x="199.8" y="343.0" width="7.1" height="7.2" fill="rgb(214, 216, 223)"/><rect x="206.7" y="343.0" width="7.1" height="7.2" fill="rgb(157, 157, 165)"/><rect x="213.6" y="343.0" width="7.1" height="7.2" fill="rgb(168, 168, 174)"/><rect x="220.5" y="343.0" width="7.1" height="7.2" fill="rgb(163, 170, 185)"/><rect x="227.4" y="343.0" width="7.1" height="7.2" fill="rgb(210, 209, 221)"/><rect x="234.3" y="343.0" width="5.9" height="7.2" fill="rgb(171, 175, 182)"/><rect x="0.0" y="350.0" width="7.0" height="7.2" fill="rgb(241, 241, 248)"/><rect x="6.8" y="350.0" width="7.0" height="7.2" fill="rgb(241, 241, 248)"/><rect x="13.6" y="350.0" width="7.0" height="7.2" fill="rgb(234, 234, 243)"/><rect x="20.4" y="350.0" width="7.1" height="7.2" fill="rgb(187, 191, 197)"/><rect x="27.3" y="350.0" width="7.1" height="7.2" fill="rgb(171, 171, 177)"/><rect x="34.2" y="350.0" width="7.1" height="7.2" fill="rgb(200, 196, 198)"/><rect x="41.1" y="350.0" width="7.1" height="7.2" fill="rgb(165, 165, 169)"/><rect x="48.0" y="350.0" width="7.1" height="7.2" fill="rgb(194, 189, 191)"/><rect x="54.9" y="350.0" width="7.1" height="7.2" fill="rgb(172, 172, 176)"/><rect x="61.8" y="350.0" width="7.1" height="7.2" fill="rgb(201, 204, 216)"/><rect x="68.7" y="350.0" width="7.1" height="7.2" fill="rgb(175, 173, 191)"/><rect x="75.6" y="350.0" width="7.1" height="7.2" fill="rgb(141, 138, 163)"/><rect x="82.5" y="350.0" width="7.1" height="7.2" fill="rgb(157, 157, 165)"/><rect x="89.4" y="350.0" width="7.1" height="7.2" fill="rgb(148, 154, 160)"/><rect x="96.3" y="350.0" width="7.1" height="7.2" fill="rgb(195, 199, 210)"/><rect x="103.2" y="350.0" width="7.1" height="7.2" fill="rgb(185, 188, 195)"/><rect x="110.1" y="350.0" width="7.1" height="7.2" fill="rgb(218, 216, 224)"/><rect x="117.0" y="350.0" width="7.1" height="7.2" fill="rgb(174, 174, 180)"/><rect x="123.9" y="350.0" width="7.1" height="7.2" fill="rgb(182, 182, 189)"/><rect x="130.8" y="350.0" width="7.1" height="7.2" fill="rgb(194, 194, 201)"/><rect x="137.7" y="350.0" width="7.1" height="7.2" fill="rgb(182, 176, 187)"/><rect x="144.6" y="350.0" width="7.1" height="7.2" fill="rgb(189, 189, 194)"/><rect x="151.5" y="350.0" width="7.1" height="7.2" fill="rgb(185, 179, 180)"/><rect x="158.4" y="350.0" width="7.1" height="7.2" fill="rgb(201, 200, 214)"/><rect x="165.3" y="350.0" width="7.1" height="7.2" fill="rgb(186, 186, 194)"/><rect x="172.2" y="350.0" width="7.1" height="7.2" fill="rgb(201, 197, 206)"/><rect x="179.1" y="350.0" width="7.1" height="7.2" fill="rgb(225, 226, 233)"/><rect x="186.0" y="350.0" width="7.1" height="7.2" fill="rgb(200, 196, 205)"/><rect x="192.9" y="350.0" width="7.1" height="7.2" fill="rgb(174, 172, 190)"/><rect x="199.8" y="350.0" width="7.1" height="7.2" fill="rgb(222, 220, 228)"/><rect x="206.7" y="350.0" width="7.1" height="7.2" fill="rgb(206, 202, 205)"/><rect x="213.6" y="350.0" width="7.1" height="7.2" fill="rgb(172, 172, 177)"/><rect x="220.5" y="350.0" width="7.1" height="7.2" fill="rgb(206, 202, 211)"/><rect x="227.4" y="350.0" width="7.1" height="7.2" fill="rgb(175, 175, 180)"/><rect x="234.3" y="350.0" width="5.9" height="7.2" fill="rgb(192, 196, 202)"/><rect x="0.0" y="357.0" width="7.0" height="7.2" fill="rgb(239, 239, 246)"/><rect x="6.8" y="357.0" width="7.0" height="7.2" fill="rgb(239, 239, 246)"/><rect x="13.6" y="357.0" width="7.0" height="7.2" fill="rgb(231, 231, 241)"/><rect x="20.4" y="357.0" width="7.1" height="7.2" fill="rgb(239, 239, 246)"/><rect x="27.3" y="357.0" width="7.1" height="7.2" fill="rgb(239, 239, 246)"/><rect x="34.2" y="357.0" width="7.1" height="7.2" fill="rgb(239, 239, 246)"/><rect x="41.1" y="357.0" width="7.1" height="7.2" fill="rgb(239, 239, 246)"/><rect x="48.0" y="357.0" width="7.1" height="7.2" fill="rgb(239, 239, 246)"/><rect x="54.9" y="357.0" width="7.1" height="7.2" fill="rgb(239, 239, 246)"/><rect x="61.8" y="357.0" width="7.1" height="7.2" fill="rgb(239, 239, 246)"/><rect x="68.7" y="357.0" width="7.1" height="7.2" fill="rgb(239, 239, 246)"/><rect x="75.6" y="357.0" width="7.1" height="7.2" fill="rgb(239, 239, 246)"/><rect x="82.5" y="357.0" width="7.1" height="7.2" fill="rgb(239, 239, 246)"/><rect x="89.4" y="357.0" width="7.1" height="7.2" fill="rgb(239, 239, 246)"/><rect x="96.3" y="357.0" width="7.1" height="7.2" fill="rgb(239, 239, 246)"/><rect x="103.2" y="357.0" width="7.1" height="7.2" fill="rgb(239, 239, 246)"/><rect x="110.1" y="357.0" width="7.1" height="7.2" fill="rgb(239, 239, 246)"/><rect x="117.0" y="357.0" width="7.1" height="7.2" fill="rgb(239, 239, 246)"/><rect x="123.9" y="357.0" width="7.1" height="7.2" fill="rgb(239, 239, 246)"/><rect x="130.8" y="357.0" width="7.1" height="7.2" fill="rgb(239, 239, 246)"/><rect x="137.7" y="357.0" width="7.1" height="7.2" fill="rgb(239, 239, 246)"/><rect x="144.6" y="357.0" width="7.1" height="7.2" fill="rgb(239, 239, 246)"/><rect x="151.5" y="357.0" width="7.1" height="7.2" fill="rgb(239, 239, 246)"/><rect x="158.4" y="357.0" width="7.1" height="7.2" fill="rgb(239, 239, 246)"/><rect x="165.3" y="357.0" width="7.1" height="7.2" fill="rgb(239, 239, 246)"/><rect x="172.2" y="357.0" width="7.1" height="7.2" fill="rgb(239, 239, 246)"/><rect x="179.1" y="357.0" width="7.1" height="7.2" fill="rgb(239, 239, 246)"/><rect x="186.0" y="357.0" width="7.1" height="7.2" fill="rgb(239, 239, 246)"/><rect x="192.9" y="357.0" width="7.1" height="7.2" fill="rgb(239, 239, 246)"/><rect x="199.8" y="357.0" width="7.1" height="7.2" fill="rgb(239, 239, 246)"/><rect x="206.7" y="357.0" width="7.1" height="7.2" fill="rgb(239, 239, 246)"/><rect x="213.6" y="357.0" width="7.1" height="7.2" fill="rgb(239, 239, 246)"/><rect x="220.5" y="357.0" width="7.1" height="7.2" fill="rgb(239, 239, 246)"/><rect x="227.4" y="357.0" width="7.1" height="7.2" fill="rgb(239, 239, 246)"/><rect x="234.3" y="357.0" width="5.9" height="7.2" fill="rgb(239, 239, 246)"/><rect x="0.0" y="364.0" width="7.0" height="7.2" fill="rgb(255, 255, 255)"/><rect x="6.8" y="364.0" width="7.0" height="7.2" fill="rgb(255, 255, 255)"/><rect x="13.6" y="364.0" width="7.0" height="7.2" fill="rgb(246, 246, 249)"/><rect x="20.4" y="364.0" width="7.1" height="7.2" fill="rgb(237, 238, 239)"/><rect x="27.3" y="364.0" width="7.1" height="7.2" fill="rgb(230, 227, 230)"/><rect x="34.2" y="364.0" width="7.1" height="7.2" fill="rgb(224, 224, 225)"/><rect x="41.1" y="364.0" width="7.1" height="7.2" fill="rgb(246, 246, 247)"/><rect x="48.0" y="364.0" width="7.1" height="7.2" fill="rgb(231, 233, 236)"/><rect x="54.9" y="364.0" width="7.1" height="7.2" fill="rgb(232, 230, 228)"/><rect x="61.8" y="364.0" width="7.1" height="7.2" fill="rgb(242, 242, 243)"/><rect x="68.7" y="364.0" width="7.1" height="7.2" fill="rgb(237, 237, 237)"/><rect x="75.6" y="364.0" width="7.1" height="7.2" fill="rgb(222, 222, 224)"/><rect x="82.5" y="364.0" width="7.1" height="7.2" fill="rgb(229, 229, 229)"/><rect x="89.4" y="364.0" width="7.1" height="7.2" fill="rgb(232, 232, 233)"/><rect x="96.3" y="364.0" width="7.1" height="7.2" fill="rgb(227, 229, 233)"/><rect x="103.2" y="364.0" width="7.1" height="7.2" fill="rgb(236, 234, 236)"/><rect x="110.1" y="364.0" width="7.1" height="7.2" fill="rgb(232, 233, 234)"/><rect x="117.0" y="364.0" width="7.1" height="7.2" fill="rgb(230, 228, 227)"/><rect x="123.9" y="364.0" width="7.1" height="7.2" fill="rgb(226, 226, 227)"/><rect x="130.8" y="364.0" width="7.1" height="7.2" fill="rgb(249, 248, 248)"/><rect x="137.7" y="364.0" width="7.1" height="7.2" fill="rgb(214, 214, 214)"/><rect x="144.6" y="364.0" width="7.1" height="7.2" fill="rgb(211, 211, 211)"/><rect x="151.5" y="364.0" width="7.1" height="7.2" fill="rgb(220, 217, 220)"/><rect x="158.4" y="364.0" width="7.1" height="7.2" fill="rgb(230, 227, 226)"/><rect x="165.3" y="364.0" width="7.1" height="7.2" fill="rgb(225, 225, 226)"/><rect x="172.2" y="364.0" width="7.1" height="7.2" fill="rgb(220, 220, 221)"/><rect x="179.1" y="364.0" width="7.1" height="7.2" fill="rgb(247, 248, 248)"/><rect x="186.0" y="364.0" width="7.1" height="7.2" fill="rgb(234, 234, 235)"/><rect x="192.9" y="364.0" width="7.1" height="7.2" fill="rgb(230, 230, 231)"/><rect x="199.8" y="364.0" width="7.1" height="7.2" fill="rgb(231, 229, 227)"/><rect x="206.7" y="364.0" width="7.1" height="7.2" fill="rgb(238, 237, 235)"/><rect x="213.6" y="364.0" width="7.1" height="7.2" fill="rgb(232, 230, 232)"/><rect x="220.5" y="364.0" width="7.1" height="7.2" fill="rgb(231, 233, 233)"/><rect x="227.4" y="364.0" width="7.1" height="7.2" fill="rgb(225, 225, 225)"/><rect x="234.3" y="364.0" width="5.9" height="7.2" fill="rgb(243, 243, 243)"/><rect x="0.0" y="371.0" width="7.0" height="7.2" fill="rgb(255, 255, 255)"/><rect x="6.8" y="371.0" width="7.0" height="7.2" fill="rgb(255, 255, 255)"/><rect x="13.6" y="371.0" width="7.0" height="7.2" fill="rgb(246, 246, 249)"/><rect x="20.4" y="371.0" width="7.1" height="7.2" fill="rgb(176, 176, 176)"/><rect x="27.3" y="371.0" width="7.1" height="7.2" fill="rgb(138, 138, 138)"/><rect x="34.2" y="371.0" width="7.1" height="7.2" fill="rgb(155, 163, 177)"/><rect x="41.1" y="371.0" width="7.1" height="7.2" fill="rgb(167, 159, 167)"/><rect x="48.0" y="371.0" width="7.1" height="7.2" fill="rgb(188, 188, 188)"/><rect x="54.9" y="371.0" width="7.1" height="7.2" fill="rgb(154, 162, 176)"/><rect x="61.8" y="371.0" width="7.1" height="7.2" fill="rgb(184, 189, 191)"/><rect x="68.7" y="371.0" width="7.1" height="7.2" fill="rgb(171, 163, 157)"/><rect x="75.6" y="371.0" width="7.1" height="7.2" fill="rgb(175, 168, 175)"/><rect x="82.5" y="371.0" width="7.1" height="7.2" fill="rgb(196, 191, 187)"/><rect x="89.4" y="371.0" width="7.1" height="7.2" fill="rgb(235, 233, 235)"/><rect x="96.3" y="371.0" width="7.1" height="7.2" fill="rgb(170, 168, 185)"/><rect x="103.2" y="371.0" width="7.1" height="7.2" fill="rgb(150, 150, 150)"/><rect x="110.1" y="371.0" width="7.1" height="7.2" fill="rgb(199, 194, 191)"/><rect x="117.0" y="371.0" width="7.1" height="7.2" fill="rgb(174, 172, 188)"/><rect x="123.9" y="371.0" width="7.1" height="7.2" fill="rgb(150, 150, 156)"/><rect x="130.8" y="371.0" width="7.1" height="7.2" fill="rgb(219, 215, 219)"/><rect x="137.7" y="371.0" width="7.1" height="7.2" fill="rgb(140, 129, 140)"/><rect x="144.6" y="371.0" width="7.1" height="7.2" fill="rgb(103, 116, 136)"/><rect x="151.5" y="371.0" width="7.1" height="7.2" fill="rgb(114, 114, 114)"/><rect x="158.4" y="371.0" width="7.1" height="7.2" fill="rgb(161, 161, 161)"/><rect x="165.3" y="371.0" width="7.1" height="7.2" fill="rgb(140, 149, 165)"/><rect x="172.2" y="371.0" width="7.1" height="7.2" fill="rgb(161, 169, 181)"/><rect x="179.1" y="371.0" width="7.1" height="7.2" fill="rgb(202, 201, 211)"/><rect x="186.0" y="371.0" width="7.1" height="7.2" fill="rgb(167, 167, 167)"/><rect x="192.9" y="371.0" width="7.1" height="7.2" fill="rgb(194, 194, 197)"/><rect x="199.8" y="371.0" width="7.1" height="7.2" fill="rgb(171, 178, 189)"/><rect x="206.7" y="371.0" width="7.1" height="7.2" fill="rgb(155, 161, 164)"/><rect x="213.6" y="371.0" width="7.1" height="7.2" fill="rgb(190, 188, 201)"/><rect x="220.5" y="371.0" width="7.1" height="7.2" fill="rgb(187, 185, 198)"/><rect x="227.4" y="371.0" width="7.1" height="7.2" fill="rgb(183, 183, 186)"/><rect x="234.3" y="371.0" width="5.9" height="7.2" fill="rgb(222, 222, 222)"/><rect x="0.0" y="378.0" width="7.0" height="7.2" fill="rgb(255, 255, 255)"/><rect x="6.8" y="378.0" width="7.0" height="7.2" fill="rgb(255, 255, 255)"/><rect x="13.6" y="378.0" width="7.0" height="7.2" fill="rgb(246, 246, 249)"/><rect x="20.4" y="378.0" width="7.1" height="7.2" fill="rgb(225, 225, 225)"/><rect x="27.3" y="378.0" width="7.1" height="7.2" fill="rgb(235, 233, 235)"/><rect x="34.2" y="378.0" width="7.1" height="7.2" fill="rgb(238, 236, 238)"/><rect x="41.1" y="378.0" width="7.1" height="7.2" fill="rgb(222, 222, 224)"/><rect x="48.0" y="378.0" width="7.1" height="7.2" fill="rgb(230, 231, 232)"/><rect x="54.9" y="378.0" width="7.1" height="7.2" fill="rgb(226, 226, 227)"/><rect x="61.8" y="378.0" width="7.1" height="7.2" fill="rgb(233, 233, 234)"/><rect x="68.7" y="378.0" width="7.1" height="7.2" fill="rgb(236, 235, 233)"/><rect x="75.6" y="378.0" width="7.1" height="7.2" fill="rgb(229, 229, 231)"/><rect x="82.5" y="378.0" width="7.1" height="7.2" fill="rgb(226, 225, 231)"/><rect x="89.4" y="378.0" width="7.1" height="7.2" fill="rgb(224, 224, 224)"/><rect x="96.3" y="378.0" width="7.1" height="7.2" fill="rgb(236, 236, 237)"/><rect x="103.2" y="378.0" width="7.1" height="7.2" fill="rgb(222, 222, 224)"/><rect x="110.1" y="378.0" width="7.1" height="7.2" fill="rgb(228, 228, 228)"/><rect x="117.0" y="378.0" width="7.1" height="7.2" fill="rgb(224, 226, 227)"/><rect x="123.9" y="378.0" width="7.1" height="7.2" fill="rgb(224, 224, 225)"/><rect x="130.8" y="378.0" width="7.1" height="7.2" fill="rgb(228, 225, 228)"/><rect x="137.7" y="378.0" width="7.1" height="7.2" fill="rgb(221, 224, 228)"/><rect x="144.6" y="378.0" width="7.1" height="7.2" fill="rgb(214, 217, 218)"/><rect x="151.5" y="378.0" width="7.1" height="7.2" fill="rgb(208, 212, 218)"/><rect x="158.4" y="378.0" width="7.1" height="7.2" fill="rgb(204, 204, 205)"/><rect x="165.3" y="378.0" width="7.1" height="7.2" fill="rgb(216, 219, 224)"/><rect x="172.2" y="378.0" width="7.1" height="7.2" fill="rgb(229, 227, 229)"/><rect x="179.1" y="378.0" width="7.1" height="7.2" fill="rgb(241, 241, 242)"/><rect x="186.0" y="378.0" width="7.1" height="7.2" fill="rgb(221, 221, 221)"/><rect x="192.9" y="378.0" width="7.1" height="7.2" fill="rgb(230, 227, 230)"/><rect x="199.8" y="378.0" width="7.1" height="7.2" fill="rgb(228, 226, 224)"/><rect x="206.7" y="378.0" width="7.1" height="7.2" fill="rgb(238, 237, 236)"/><rect x="213.6" y="378.0" width="7.1" height="7.2" fill="rgb(241, 239, 241)"/><rect x="220.5" y="378.0" width="7.1" height="7.2" fill="rgb(245, 246, 247)"/><rect x="227.4" y="378.0" width="7.1" height="7.2" fill="rgb(223, 226, 230)"/><rect x="234.3" y="378.0" width="5.9" height="7.2" fill="rgb(228, 228, 228)"/><rect x="0.0" y="385.0" width="7.0" height="7.2" fill="rgb(239, 239, 246)"/><rect x="6.8" y="385.0" width="7.0" height="7.2" fill="rgb(239, 239, 246)"/><rect x="13.6" y="385.0" width="7.0" height="7.2" fill="rgb(231, 231, 241)"/><rect x="20.4" y="385.0" width="7.1" height="7.2" fill="rgb(239, 239, 246)"/><rect x="27.3" y="385.0" width="7.1" height="7.2" fill="rgb(239, 239, 246)"/><rect x="34.2" y="385.0" width="7.1" height="7.2" fill="rgb(239, 239, 246)"/><rect x="41.1" y="385.0" width="7.1" height="7.2" fill="rgb(239, 239, 246)"/><rect x="48.0" y="385.0" width="7.1" height="7.2" fill="rgb(239, 239, 246)"/><rect x="54.9" y="385.0" width="7.1" height="7.2" fill="rgb(239, 239, 246)"/><rect x="61.8" y="385.0" width="7.1" height="7.2" fill="rgb(239, 239, 246)"/><rect x="68.7" y="385.0" width="7.1" height="7.2" fill="rgb(239, 239, 246)"/><rect x="75.6" y="385.0" width="7.1" height="7.2" fill="rgb(239, 239, 246)"/><rect x="82.5" y="385.0" width="7.1" height="7.2" fill="rgb(239, 239, 246)"/><rect x="89.4" y="385.0" width="7.1" height="7.2" fill="rgb(239, 239, 246)"/><rect x="96.3" y="385.0" width="7.1" height="7.2" fill="rgb(239, 239, 246)"/><rect x="103.2" y="385.0" width="7.1" height="7.2" fill="rgb(239, 239, 246)"/><rect x="110.1" y="385.0" width="7.1" height="7.2" fill="rgb(239, 239, 246)"/><rect x="117.0" y="385.0" width="7.1" height="7.2" fill="rgb(239, 239, 246)"/><rect x="123.9" y="385.0" width="7.1" height="7.2" fill="rgb(239, 239, 246)"/><rect x="130.8" y="385.0" width="7.1" height="7.2" fill="rgb(239, 239, 246)"/><rect x="137.7" y="385.0" width="7.1" height="7.2" fill="rgb(239, 239, 246)"/><rect x="144.6" y="385.0" width="7.1" height="7.2" fill="rgb(239, 239, 246)"/><rect x="151.5" y="385.0" width="7.1" height="7.2" fill="rgb(239, 239, 246)"/><rect x="158.4" y="385.0" width="7.1" height="7.2" fill="rgb(239, 239, 246)"/><rect x="165.3" y="385.0" width="7.1" height="7.2" fill="rgb(239, 239, 246)"/><rect x="172.2" y="385.0" width="7.1" height="7.2" fill="rgb(239, 239, 246)"/><rect x="179.1" y="385.0" width="7.1" height="7.2" fill="rgb(239, 239, 246)"/><rect x="186.0" y="385.0" width="7.1" height="7.2" fill="rgb(239, 239, 246)"/><rect x="192.9" y="385.0" width="7.1" height="7.2" fill="rgb(239, 239, 246)"/><rect x="199.8" y="385.0" width="7.1" height="7.2" fill="rgb(239, 239, 246)"/><rect x="206.7" y="385.0" width="7.1" height="7.2" fill="rgb(239, 239, 246)"/><rect x="213.6" y="385.0" width="7.1" height="7.2" fill="rgb(239, 239, 246)"/><rect x="220.5" y="385.0" width="7.1" height="7.2" fill="rgb(239, 239, 246)"/><rect x="227.4" y="385.0" width="7.1" height="7.2" fill="rgb(239, 239, 246)"/><rect x="234.3" y="385.0" width="5.9" height="7.2" fill="rgb(239, 239, 246)"/><rect x="0.0" y="392.0" width="7.0" height="7.2" fill="rgb(241, 241, 248)"/><rect x="6.8" y="392.0" width="7.0" height="7.2" fill="rgb(241, 241, 248)"/><rect x="13.6" y="392.0" width="7.0" height="7.2" fill="rgb(234, 234, 243)"/><rect x="20.4" y="392.0" width="7.1" height="7.2" fill="rgb(207, 206, 219)"/><rect x="27.3" y="392.0" width="7.1" height="7.2" fill="rgb(196, 199, 206)"/><rect x="34.2" y="392.0" width="7.1" height="7.2" fill="rgb(179, 173, 173)"/><rect x="41.1" y="392.0" width="7.1" height="7.2" fill="rgb(170, 170, 176)"/><rect x="48.0" y="392.0" width="7.1" height="7.2" fill="rgb(168, 168, 176)"/><rect x="54.9" y="392.0" width="7.1" height="7.2" fill="rgb(181, 179, 197)"/><rect x="61.8" y="392.0" width="7.1" height="7.2" fill="rgb(215, 215, 222)"/><rect x="68.7" y="392.0" width="7.1" height="7.2" fill="rgb(215, 215, 222)"/><rect x="75.6" y="392.0" width="7.1" height="7.2" fill="rgb(147, 144, 167)"/><rect x="82.5" y="392.0" width="7.1" height="7.2" fill="rgb(160, 160, 168)"/><rect x="89.4" y="392.0" width="7.1" height="7.2" fill="rgb(156, 153, 175)"/><rect x="96.3" y="392.0" width="7.1" height="7.2" fill="rgb(193, 193, 201)"/><rect x="103.2" y="392.0" width="7.1" height="7.2" fill="rgb(216, 215, 226)"/><rect x="110.1" y="392.0" width="7.1" height="7.2" fill="rgb(187, 187, 195)"/><rect x="117.0" y="392.0" width="7.1" height="7.2" fill="rgb(216, 216, 227)"/><rect x="123.9" y="392.0" width="7.1" height="7.2" fill="rgb(203, 199, 208)"/><rect x="130.8" y="392.0" width="7.1" height="7.2" fill="rgb(184, 184, 192)"/><rect x="137.7" y="392.0" width="7.1" height="7.2" fill="rgb(198, 202, 213)"/><rect x="144.6" y="392.0" width="7.1" height="7.2" fill="rgb(190, 185, 186)"/><rect x="151.5" y="392.0" width="7.1" height="7.2" fill="rgb(218, 215, 223)"/><rect x="158.4" y="392.0" width="7.1" height="7.2" fill="rgb(180, 180, 188)"/><rect x="165.3" y="392.0" width="7.1" height="7.2" fill="rgb(178, 184, 197)"/><rect x="172.2" y="392.0" width="7.1" height="7.2" fill="rgb(186, 186, 191)"/><rect x="179.1" y="392.0" width="7.1" height="7.2" fill="rgb(206, 205, 218)"/><rect x="186.0" y="392.0" width="7.1" height="7.2" fill="rgb(193, 193, 200)"/><rect x="192.9" y="392.0" width="7.1" height="7.2" fill="rgb(183, 181, 198)"/><rect x="199.8" y="392.0" width="7.1" height="7.2" fill="rgb(184, 189, 202)"/><rect x="206.7" y="392.0" width="7.1" height="7.2" fill="rgb(202, 205, 216)"/><rect x="213.6" y="392.0" width="7.1" height="7.2" fill="rgb(202, 205, 216)"/><rect x="220.5" y="392.0" width="7.1" height="7.2" fill="rgb(174, 174, 178)"/><rect x="227.4" y="392.0" width="7.1" height="7.2" fill="rgb(218, 219, 226)"/><rect x="234.3" y="392.0" width="5.9" height="7.2" fill="rgb(203, 207, 218)"/><rect x="0.0" y="399.0" width="7.0" height="7.2" fill="rgb(241, 241, 248)"/><rect x="6.8" y="399.0" width="7.0" height="7.2" fill="rgb(241, 241, 248)"/><rect x="13.6" y="399.0" width="7.0" height="7.2" fill="rgb(234, 234, 243)"/><rect x="20.4" y="399.0" width="7.1" height="7.2" fill="rgb(176, 174, 192)"/><rect x="27.3" y="399.0" width="7.1" height="7.2" fill="rgb(168, 160, 171)"/><rect x="34.2" y="399.0" width="7.1" height="7.2" fill="rgb(158, 155, 177)"/><rect x="41.1" y="399.0" width="7.1" height="7.2" fill="rgb(153, 161, 177)"/><rect x="48.0" y="399.0" width="7.1" height="7.2" fill="rgb(160, 160, 168)"/><rect x="54.9" y="399.0" width="7.1" height="7.2" fill="rgb(214, 211, 219)"/><rect x="61.8" y="399.0" width="7.1" height="7.2" fill="rgb(173, 173, 178)"/><rect x="68.7" y="399.0" width="7.1" height="7.2" fill="rgb(206, 206, 212)"/><rect x="75.6" y="399.0" width="7.1" height="7.2" fill="rgb(180, 174, 184)"/><rect x="82.5" y="399.0" width="7.1" height="7.2" fill="rgb(109, 109, 114)"/><rect x="89.4" y="399.0" width="7.1" height="7.2" fill="rgb(164, 170, 176)"/><rect x="96.3" y="399.0" width="7.1" height="7.2" fill="rgb(183, 177, 187)"/><rect x="103.2" y="399.0" width="7.1" height="7.2" fill="rgb(163, 168, 174)"/><rect x="110.1" y="399.0" width="7.1" height="7.2" fill="rgb(159, 156, 178)"/><rect x="117.0" y="399.0" width="7.1" height="7.2" fill="rgb(199, 194, 196)"/><rect x="123.9" y="399.0" width="7.1" height="7.2" fill="rgb(184, 187, 194)"/><rect x="130.8" y="399.0" width="7.1" height="7.2" fill="rgb(171, 177, 191)"/><rect x="137.7" y="399.0" width="7.1" height="7.2" fill="rgb(161, 161, 169)"/><rect x="144.6" y="399.0" width="7.1" height="7.2" fill="rgb(168, 160, 171)"/><rect x="151.5" y="399.0" width="7.1" height="7.2" fill="rgb(165, 172, 187)"/><rect x="158.4" y="399.0" width="7.1" height="7.2" fill="rgb(158, 158, 166)"/><rect x="165.3" y="399.0" width="7.1" height="7.2" fill="rgb(149, 157, 174)"/><rect x="172.2" y="399.0" width="7.1" height="7.2" fill="rgb(161, 161, 167)"/><rect x="179.1" y="399.0" width="7.1" height="7.2" fill="rgb(208, 208, 213)"/><rect x="186.0" y="399.0" width="7.1" height="7.2" fill="rgb(148, 148, 151)"/><rect x="192.9" y="399.0" width="7.1" height="7.2" fill="rgb(170, 168, 187)"/><rect x="199.8" y="399.0" width="7.1" height="7.2" fill="rgb(176, 169, 169)"/><rect x="206.7" y="399.0" width="7.1" height="7.2" fill="rgb(221, 219, 228)"/><rect x="213.6" y="399.0" width="7.1" height="7.2" fill="rgb(171, 177, 191)"/><rect x="220.5" y="399.0" width="7.1" height="7.2" fill="rgb(190, 194, 206)"/><rect x="227.4" y="399.0" width="7.1" height="7.2" fill="rgb(159, 159, 165)"/><rect x="234.3" y="399.0" width="5.9" height="7.2" fill="rgb(150, 150, 153)"/><rect x="0.0" y="406.0" width="7.0" height="3.7" fill="rgb(239, 239, 246)"/><rect x="6.8" y="406.0" width="7.0" height="3.7" fill="rgb(239, 239, 246)"/><rect x="13.6" y="406.0" width="7.0" height="3.7" fill="rgb(231, 231, 241)"/><rect x="20.4" y="406.0" width="7.1" height="3.7" fill="rgb(239, 239, 246)"/><rect x="27.3" y="406.0" width="7.1" height="3.7" fill="rgb(239, 239, 246)"/><rect x="34.2" y="406.0" width="7.1" height="3.7" fill="rgb(239, 239, 246)"/><rect x="41.1" y="406.0" width="7.1" height="3.7" fill="rgb(239, 239, 246)"/><rect x="48.0" y="406.0" width="7.1" height="3.7" fill="rgb(239, 239, 246)"/><rect x="54.9" y="406.0" width="7.1" height="3.7" fill="rgb(239, 239, 246)"/><rect x="61.8" y="406.0" width="7.1" height="3.7" fill="rgb(239, 239, 246)"/><rect x="68.7" y="406.0" width="7.1" height="3.7" fill="rgb(239, 239, 246)"/><rect x="75.6" y="406.0" width="7.1" height="3.7" fill="rgb(239, 239, 246)"/><rect x="82.5" y="406.0" width="7.1" height="3.7" fill="rgb(239, 239, 246)"/><rect x="89.4" y="406.0" width="7.1" height="3.7" fill="rgb(239, 239, 246)"/><rect x="96.3" y="406.0" width="7.1" height="3.7" fill="rgb(239, 239, 246)"/><rect x="103.2" y="406.0" width="7.1" height="3.7" fill="rgb(239, 239, 246)"/><rect x="110.1" y="406.0" width="7.1" height="3.7" fill="rgb(239, 239, 246)"/><rect x="117.0" y="406.0" width="7.1" height="3.7" fill="rgb(239, 239, 246)"/><rect x="123.9" y="406.0" width="7.1" height="3.7" fill="rgb(239, 239, 246)"/><rect x="130.8" y="406.0" width="7.1" height="3.7" fill="rgb(239, 239, 246)"/><rect x="137.7" y="406.0" width="7.1" height="3.7" fill="rgb(239, 239, 246)"/><rect x="144.6" y="406.0" width="7.1" height="3.7" fill="rgb(239, 239, 246)"/><rect x="151.5" y="406.0" width="7.1" height="3.7" fill="rgb(239, 239, 246)"/><rect x="158.4" y="406.0" width="7.1" height="3.7" fill="rgb(239, 239, 246)"/><rect x="165.3" y="406.0" width="7.1" height="3.7" fill="rgb(239, 239, 246)"/><rect x="172.2" y="406.0" width="7.1" height="3.7" fill="rgb(239, 239, 246)"/><rect x="179.1" y="406.0" width="7.1" height="3.7" fill="rgb(239, 239, 246)"/><rect x="186.0" y="406.0" width="7.1" height="3.7" fill="rgb(239, 239, 246)"/><rect x="192.9" y="406.0" width="7.1" height="3.7" fill="rgb(239, 239, 246)"/><rect x="199.8" y="406.0" width="7.1" height="3.7" fill="rgb(239, 239, 246)"/><rect x="206.7" y="406.0" width="7.1" height="3.7" fill="rgb(239, 239, 246)"/><rect x="213.6" y="406.0" width="7.1" height="3.7" fill="rgb(239, 239, 246)"/><rect x="220.5" y="406.0" width="7.1" height="3.7" fill="rgb(239, 239, 246)"/><rect x="227.4" y="406.0" width="7.1" height="3.7" fill="rgb(239, 239, 246)"/><rect x="234.3" y="406.0" width="5.9" height="3.7" fill="rgb(239, 239, 246)"/></svg>
<div style="left:1305px;top:101px;width:16px;height:429px;background:#f3f3f6;"></div>
<svg style="position:absolute;left:1310px;top:107px" width="7" height="4"><path d="M0 4L3.5 0 7 4Z" fill="#7d7d8c"/></svg>
<div style="left:1310px;top:118px;width:7px;height:154px;background:linear-gradient(to right,#e4e4e8,#d2d2da);border:1px solid #a4a4b4;border-radius:4px;box-sizing:border-box"></div>
<svg style="position:absolute;left:1310px;top:520px" width="7" height="4"><path d="M0 0L3.5 4 7 0Z" fill="#7d7d8c"/></svg>
<div style="left:3px;top:530px;width:1302px;height:17px;background:#f3f3f6;"></div>
<div style="left:1305px;top:530px;width:16px;height:17px;background:#e9e9ee;"></div>
<svg style="position:absolute;left:9px;top:535px" width="5" height="8"><path d="M5 0L0 4 5 8Z" fill="#8a8a98"/></svg>
<div style="left:20px;top:535px;width:174px;height:8px;background:linear-gradient(#e6e6ea,#d4d4dc);border:1px solid #a4a4b4;border-radius:4px;box-sizing:border-box"></div>
<svg style="position:absolute;left:1295px;top:535px" width="5" height="8"><path d="M0 0L5 4 0 8Z" fill="#8a8a98"/></svg>
<div style="left:2px;top:554px;width:68px;height:20px;background:#fff;border:1px solid #3f7fc0;box-sizing:border-box"></div>
<div style="left:55px;top:555px;width:14px;height:18px;background:linear-gradient(#f4f4f4,#e4e4e4);border:1px solid #5a5a5a;box-sizing:border-box"></div>
<svg style="position:absolute;left:58px;top:562px" width="8" height="5"><path d="M0 0H8L4 5Z" fill="#000"/></svg>
<span style="left:22px;top:557px;">40</span>
<svg style="position:absolute;left:108px;top:558px" width="10" height="12"><path d="M0 0H2.2V12H0Z M9.5 0V12L2.5 6Z" fill="#a3a3a8"/></svg>
<svg style="position:absolute;left:141px;top:558px" width="10" height="12"><path d="M9.5 0V12L1 6Z" fill="#a3a3a8"/></svg>
<span style="left:180px;top:557px;">转到第</span>
<div style="left:220px;top:554px;width:33px;height:20px;background:#fff;border:1px solid #6b9bd0;box-sizing:border-box"></div>
<span style="left:232px;top:557px;">1</span>
<span style="left:260px;top:557px;">页</span>
<svg style="position:absolute;left:303px;top:558px" width="10" height="12"><path d="M0.5 0V12L9 6Z" fill="#3d85c8"/></svg>
<svg style="position:absolute;left:338px;top:558px" width="10" height="12"><path d="M0 0V12L7 6Z M7.5 0H9.7V12H7.5Z" fill="#3d85c8"/></svg>
<span style="left:397px;top:557px;word-spacing:1.5px">共 97546 条 （ 2439 页）记录，当前显示范围从 1 到 40</span>
<div style="left:655px;top:582px;width:2px;height:2px;background:#6f8fc8;"></div>
<div style="left:659px;top:582px;width:2px;height:2px;background:#6f8fc8;"></div>
<div style="left:663px;top:582px;width:2px;height:2px;background:#6f8fc8;"></div>
<div style="left:667px;top:582px;width:2px;height:2px;background:#6f8fc8;"></div>
<div style="left:5px;top:586px;width:195px;height:25px;background:#fff;border:1px solid #c3c3cf;border-bottom:none;box-sizing:border-box"></div>
<span style="left:15px;top:592px;">MSD生产任务单_组织分批明细表</span>
<div style="left:200px;top:589px;width:168px;height:21px;background:linear-gradient(#eeeef2,#e2e2e9);border:1px solid #bdbdca;border-bottom:none;box-sizing:border-box"></div>
<span style="left:209px;top:593px;color:#505060">MSD生产任务单_订单明细表</span>
<div style="left:2px;top:610px;width:1321px;height:257px;background:#fff;border:1px solid #9c9cb0;border-bottom:none;border-left:2px solid #9a9aac;box-sizing:border-box"></div>
<div style="left:4px;top:611px;width:1318px;height:23px;background:#f4f4f7;"></div>
<div style="left:4px;top:634px;width:1318px;height:1px;background:#c6c6d2;"></div>
<div style="left:39px;top:611px;width:1px;height:23px;background:#c6c6d2;"></div>
<div style="left:82px;top:611px;width:1px;height:23px;background:#c6c6d2;"></div>
<div style="left:161px;top:611px;width:1px;height:23px;background:#c6c6d2;"></div>
<div style="left:228px;top:611px;width:1px;height:23px;background:#c6c6d2;"></div>
<span style="left:43px;top:615px;">序号</span>
<span style="left:86px;top:615px;">组织分批号</span>
<span style="left:165px;top:615px;">分批数量</span>
<div style="left:4px;top:635px;width:35px;height:24px;background:#f4f4f7;"></div>
<div style="left:4px;top:659px;width:35px;height:1px;background:#d4d4de;"></div>
<div style="left:39px;top:635px;width:1px;height:25px;background:#c6c6d2;"></div>
<div style="left:83px;top:635px;width:145px;height:24px;background:#e4f1fc;"></div>
<div style="left:40px;top:659px;width:189px;height:1px;background:#a7a7c2;"></div>
<div style="left:82px;top:635px;width:1px;height:25px;background:#a7a7c2;"></div>
<div style="left:161px;top:635px;width:1px;height:25px;background:#a7a7c2;"></div>
<div style="left:228px;top:635px;width:1px;height:25px;background:#a7a7c2;"></div>
<svg style="position:absolute;left:9px;top:644px" width="5" height="8"><path d="M0 0L4.5 4 0 8Z" fill="#1a1a2a"/></svg>
<span style="left:18px;top:641px;">1</span>
<span style="left:-120px;width:200px;text-align:right;top:641px">1</span>
<span style="left:86px;top:641px;">ZKIH239-01</span>
<span style="left:26px;width:200px;text-align:right;top:641px">161.280</span>
<div style="left:4px;top:660px;width:35px;height:24px;background:#f4f4f7;"></div>
<div style="left:4px;top:684px;width:35px;height:1px;background:#d4d4de;"></div>
<div style="left:39px;top:660px;width:1px;height:25px;background:#c6c6d2;"></div>
<div style="left:40px;top:684px;width:189px;height:1px;background:#a7a7c2;"></div>
<div style="left:82px;top:660px;width:1px;height:25px;background:#a7a7c2;"></div>
<div style="left:161px;top:660px;width:1px;height:25px;background:#a7a7c2;"></div>
<div style="left:228px;top:660px;width:1px;height:25px;background:#a7a7c2;"></div>
<span style="left:10px;top:666px;">2</span>
<span style="left:-120px;width:200px;text-align:right;top:666px">2</span>
<span style="left:86px;top:666px;">ZKIH239-02</span>
<span style="left:26px;width:200px;text-align:right;top:666px">161.280</span>
<div style="left:4px;top:685px;width:35px;height:24px;background:#f4f4f7;"></div>
<div style="left:4px;top:709px;width:35px;height:1px;background:#d4d4de;"></div>
<div style="left:39px;top:685px;width:1px;height:25px;background:#c6c6d2;"></div>
<div style="left:40px;top:709px;width:189px;height:1px;background:#a7a7c2;"></div>
<div style="left:82px;top:685px;width:1px;height:25px;background:#a7a7c2;"></div>
<div style="left:161px;top:685px;width:1px;height:25px;background:#a7a7c2;"></div>
<div style="left:228px;top:685px;width:1px;height:25px;background:#a7a7c2;"></div>
<span style="left:10px;top:691px;">3</span>
<span style="left:-120px;width:200px;text-align:right;top:691px">3</span>
<span style="left:86px;top:691px;">ZKIH239-03</span>
<span style="left:26px;width:200px;text-align:right;top:691px">161.280</span>
<div style="left:4px;top:710px;width:35px;height:24px;background:#f4f4f7;"></div>
<div style="left:4px;top:734px;width:35px;height:1px;background:#d4d4de;"></div>
<div style="left:39px;top:710px;width:1px;height:25px;background:#c6c6d2;"></div>
<div style="left:40px;top:734px;width:189px;height:1px;background:#a7a7c2;"></div>
<div style="left:82px;top:710px;width:1px;height:25px;background:#a7a7c2;"></div>
<div style="left:161px;top:710px;width:1px;height:25px;background:#a7a7c2;"></div>
<div style="left:228px;top:710px;width:1px;height:25px;background:#a7a7c2;"></div>
<span style="left:10px;top:716px;">4</span>
<span style="left:-120px;width:200px;text-align:right;top:716px">4</span>
<span style="left:86px;top:716px;">ZKIH239-04</span>
<span style="left:26px;width:200px;text-align:right;top:716px">161.280</span>
<div style="left:4px;top:735px;width:35px;height:24px;background:#f4f4f7;"></div>
<div style="left:4px;top:759px;width:35px;height:1px;background:#d4d4de;"></div>
<div style="left:39px;top:735px;width:1px;height:25px;background:#c6c6d2;"></div>
<div style="left:40px;top:759px;width:189px;height:1px;background:#a7a7c2;"></div>
<div style="left:82px;top:735px;width:1px;height:25px;background:#a7a7c2;"></div>
<div style="left:161px;top:735px;width:1px;height:25px;background:#a7a7c2;"></div>
<div style="left:228px;top:735px;width:1px;height:25px;background:#a7a7c2;"></div>
<span style="left:10px;top:741px;">5</span>
<span style="left:-120px;width:200px;text-align:right;top:741px">5</span>
<span style="left:86px;top:741px;">ZKIH239-05</span>
<span style="left:26px;width:200px;text-align:right;top:741px">161.280</span>
<div style="left:4px;top:760px;width:35px;height:24px;background:#f4f4f7;"></div>
<div style="left:4px;top:784px;width:35px;height:1px;background:#d4d4de;"></div>
<div style="left:39px;top:760px;width:1px;height:25px;background:#c6c6d2;"></div>
<div style="left:40px;top:784px;width:189px;height:1px;background:#a7a7c2;"></div>
<div style="left:82px;top:760px;width:1px;height:25px;background:#a7a7c2;"></div>
<div style="left:161px;top:760px;width:1px;height:25px;background:#a7a7c2;"></div>
<div style="left:228px;top:760px;width:1px;height:25px;background:#a7a7c2;"></div>
<span style="left:10px;top:766px;">6</span>
<span style="left:-120px;width:200px;text-align:right;top:766px">6</span>
<span style="left:86px;top:766px;">ZKIH239-06</span>
<span style="left:26px;width:200px;text-align:right;top:766px">161.280</span>
<div style="left:4px;top:785px;width:35px;height:24px;background:#f4f4f7;"></div>
<div style="left:4px;top:809px;width:35px;height:1px;background:#d4d4de;"></div>
<div style="left:39px;top:785px;width:1px;height:25px;background:#c6c6d2;"></div>
<div style="left:40px;top:809px;width:189px;height:1px;background:#a7a7c2;"></div>
<div style="left:82px;top:785px;width:1px;height:25px;background:#a7a7c2;"></div>
<div style="left:161px;top:785px;width:1px;height:25px;background:#a7a7c2;"></div>
<div style="left:228px;top:785px;width:1px;height:25px;background:#a7a7c2;"></div>
<span style="left:10px;top:791px;">7</span>
<span style="left:-120px;width:200px;text-align:right;top:791px">7</span>
<span style="left:86px;top:791px;">ZKIH239-07</span>
<span style="left:26px;width:200px;text-align:right;top:791px">26.320</span>
</body></html>
